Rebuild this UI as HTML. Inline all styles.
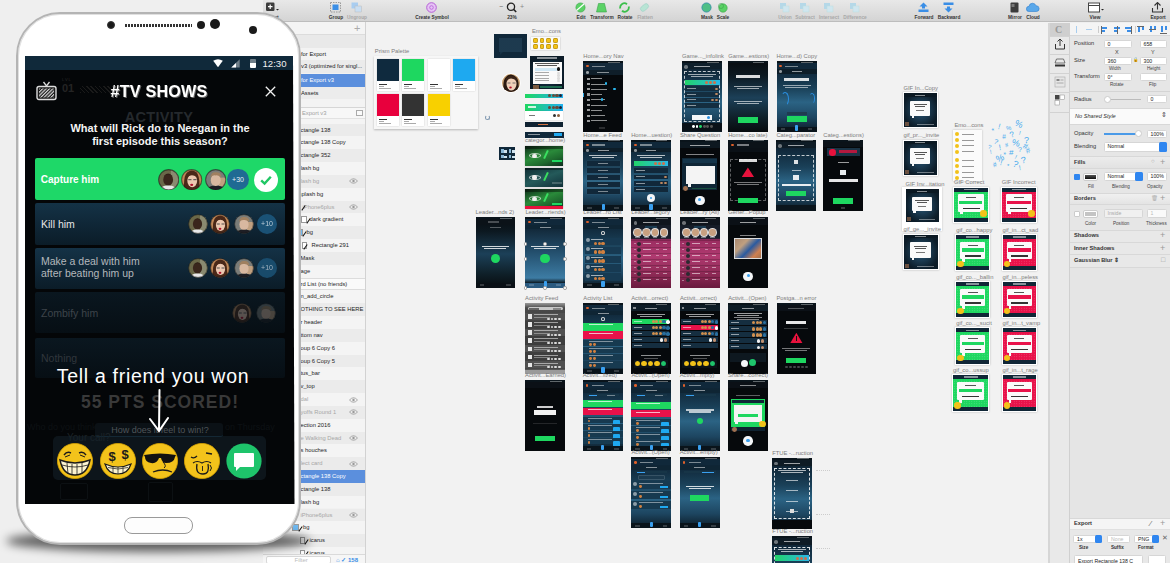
<!DOCTYPE html>
<html><head><meta charset="utf-8">
<style>
*{margin:0;padding:0;box-sizing:border-box}
html,body{width:1170px;height:563px;overflow:hidden}
body{position:relative;background:#efefef;font-family:"Liberation Sans",sans-serif;color:#222}
.a{position:absolute}
#tb{left:263px;top:0;width:907px;height:22px;background:linear-gradient(#e8e8e8,#d4d4d4);border-bottom:1px solid #bdbdbd}
.tl{position:absolute;top:14.5px;font-size:4.8px;line-height:6px;font-weight:bold;color:#333;transform:translateX(-50%);white-space:nowrap}
.tl.d{color:#a8a8a8}
#lay{left:263px;top:22px;width:103px;height:541px;background:#f1f1f1;border-right:1px solid #d2d2d2}
#cv{left:366px;top:22px;width:683px;height:541px;background:#f2f2f2}
#ins{left:1048px;top:23px;width:122px;height:540px;background:#e8e8e8;border-left:2px solid #d6d6d6}
.lb{position:absolute;font-size:5.8px;line-height:9px;color:#7c7c7c;white-space:nowrap}
</style></head><body>
<div id="tb" class="a"></div>
<svg class="a" style="left:265px;top:2px" width="17" height="11" viewBox="0 0 17 11"><rect x="1" y="0.5" width="8.5" height="8.5" rx="1.2" fill="#3d3d3d"/><path d="M5.2 2.5v4.5M3 4.7h4.5" stroke="#fff" stroke-width="1.2"/><path d="M11 7l1.5 1.5L14 7z" fill="#222"/></svg>
<div class="tl" style="left:272px">Insert</div>
<svg class="a" style="left:329px;top:2px" width="17" height="11" viewBox="0 0 17 11"><rect x="1.5" y="0.5" width="10" height="9.5" fill="none" stroke="#888" stroke-width=".8" stroke-dasharray="1.5 1"/><rect x="3.5" y="2.5" width="6" height="5.5" fill="#3a8ee6"/></svg>
<div class="tl" style="left:336px">Group</div>
<svg class="a" style="left:350px;top:2px" width="17" height="11" viewBox="0 0 17 11"><rect x="1.5" y="0.5" width="6.5" height="6" fill="#a9cdf0"/><rect x="5" y="4" width="6.5" height="6" fill="#c9def2" stroke="#bbb" stroke-width=".5"/></svg>
<div class="tl d" style="left:357px">Ungroup</div>
<svg class="a" style="left:425px;top:2px" width="17" height="11" viewBox="0 0 17 11"><circle cx="6.5" cy="5.5" r="4.8" fill="#e6c3f5" stroke="#b55fd6" stroke-width="1"/><circle cx="6.5" cy="5.5" r="1.8" fill="none" stroke="#b55fd6" stroke-width=".8"/></svg>
<div class="tl" style="left:432px">Create Symbol</div>
<svg class="a" style="left:505px;top:2px" width="17" height="11" viewBox="0 0 17 11"><circle cx="6" cy="4.8" r="3.6" fill="none" stroke="#222" stroke-width="1.3"/><path d="M8.6 7.4l2.6 2.6" stroke="#222" stroke-width="1.5"/></svg>
<div class="tl" style="left:512px">23%</div>
<svg class="a" style="left:574px;top:2px" width="17" height="11" viewBox="0 0 17 11"><circle cx="6.5" cy="5.5" r="4.6" fill="#5bd266" stroke="#3aa24a" stroke-width=".6"/><path d="M2.5 8.5 L10 2" stroke="#fff" stroke-width="1.1"/></svg>
<div class="tl" style="left:581px">Edit</div>
<svg class="a" style="left:595px;top:2px" width="17" height="11" viewBox="0 0 17 11"><path d="M3.5 1.5h6l2 8.5h-10z" fill="#5bd266" stroke="#3aa24a" stroke-width=".6"/></svg>
<div class="tl" style="left:602px">Transform</div>
<svg class="a" style="left:618px;top:2px" width="17" height="11" viewBox="0 0 17 11"><path d="M2.3 6.5 A4.2 4.2 0 0 1 9 2.2 M10.7 4.5 A4.2 4.2 0 0 1 4 8.8" stroke="#3cbf4c" stroke-width="1.8" fill="none"/></svg>
<div class="tl" style="left:625px">Rotate</div>
<svg class="a" style="left:638px;top:2px" width="17" height="11" viewBox="0 0 17 11"><rect x="2" y="3" width="9" height="5" rx="2.5" transform="rotate(-40 6.5 5.5)" fill="#b8e4d4" stroke="#9fd0c8" stroke-width=".6"/></svg>
<div class="tl d" style="left:645px">Flatten</div>
<svg class="a" style="left:700px;top:2px" width="17" height="11" viewBox="0 0 17 11"><circle cx="6.5" cy="5.5" r="4.6" fill="#4fbf86" stroke="#2f8aa6" stroke-width=".8"/></svg>
<div class="tl" style="left:707px">Mask</div>
<svg class="a" style="left:716px;top:2px" width="17" height="11" viewBox="0 0 17 11"><circle cx="7" cy="6" r="4.2" fill="#5bd266" stroke="#3aa24a" stroke-width=".6"/><circle cx="5" cy="4" r="2.5" fill="none" stroke="#3aa24a" stroke-width=".6"/></svg>
<div class="tl" style="left:723px">Scale</div>
<svg class="a" style="left:778px;top:2px" width="17" height="11" viewBox="0 0 17 11"><rect x="2" y="1" width="6" height="6" fill="#b5d8e8"/><rect x="5" y="4" width="6" height="6" fill="#d0e6ef" stroke="#bdd" stroke-width=".5"/></svg>
<div class="tl d" style="left:785px">Union</div>
<svg class="a" style="left:798px;top:2px" width="17" height="11" viewBox="0 0 17 11"><rect x="2" y="1" width="6" height="6" fill="#b5d8e8"/><rect x="5" y="4" width="6" height="6" fill="#d0e6ef" stroke="#bdd" stroke-width=".5"/></svg>
<div class="tl d" style="left:805px">Subtract</div>
<svg class="a" style="left:822px;top:2px" width="17" height="11" viewBox="0 0 17 11"><rect x="2" y="1" width="6" height="6" fill="#b5d8e8"/><rect x="5" y="4" width="6" height="6" fill="#d0e6ef" stroke="#bdd" stroke-width=".5"/></svg>
<div class="tl d" style="left:829px">Intersect</div>
<svg class="a" style="left:848px;top:2px" width="17" height="11" viewBox="0 0 17 11"><rect x="2" y="1" width="6" height="6" fill="#b5d8e8"/><rect x="5" y="4" width="6" height="6" fill="#d0e6ef" stroke="#bdd" stroke-width=".5"/></svg>
<div class="tl d" style="left:855px">Difference</div>
<svg class="a" style="left:917px;top:2px" width="17" height="11" viewBox="0 0 17 11"><path d="M6.5 0.5l4 4h-2.5v2h-3v-2h-2.5z" fill="#3a8ee6"/><rect x="1.5" y="7.5" width="10" height="2.5" fill="#3a8ee6"/></svg>
<div class="tl" style="left:924px">Forward</div>
<svg class="a" style="left:942px;top:2px" width="17" height="11" viewBox="0 0 17 11"><rect x="1.5" y="0.5" width="10" height="2.5" fill="#3a8ee6"/><path d="M6.5 10.5l4-4h-2.5v-2h-3v2h-2.5z" fill="#3a8ee6"/></svg>
<div class="tl" style="left:949px">Backward</div>
<svg class="a" style="left:1008px;top:2px" width="17" height="11" viewBox="0 0 17 11"><rect x="2.5" y="0.5" width="8" height="10" rx="1" fill="#3b3b3b"/><rect x="3.5" y="2" width="3" height="3" fill="#777"/></svg>
<div class="tl" style="left:1015px">Mirror</div>
<svg class="a" style="left:1026px;top:2px" width="17" height="11" viewBox="0 0 17 11"><path d="M3 9.5a2.6 2.6 0 0 1 0-5.2a3.6 3.6 0 0 1 7-0.5a2.6 2.6 0 0 1 0.5 5.7z" fill="#5aa8ea" stroke="#2f7fd0" stroke-width=".6"/></svg>
<div class="tl" style="left:1033px">Cloud</div>
<svg class="a" style="left:1088px;top:2px" width="17" height="11" viewBox="0 0 17 11"><rect x="0.5" y="1" width="11" height="9" fill="#fff" stroke="#444" stroke-width="1"/><path d="M.5 3.5h11" stroke="#444" stroke-width="1"/><path d="M13 7l1.5 1.5L16 7z" fill="#222"/></svg>
<div class="tl" style="left:1095px">View</div>
<svg class="a" style="left:1151px;top:2px" width="17" height="11" viewBox="0 0 17 11"><path d="M6.5 0.5v7M3.5 3.5l3-3 3 3M1.5 6v4h10V6" stroke="#333" stroke-width="1.1" fill="none"/></svg>
<div class="tl" style="left:1158px">Export</div>
<div class="a" style="left:499px;top:3px;font-size:7px;color:#666">−</div><div class="a" style="left:520px;top:3px;font-size:7px;color:#888">+</div>
<div id="lay" class="a">
<div class="a" style="left:0;top:0;width:102px;height:13.3px;background:#f4f4f4;border-bottom:1px solid #dcdcdc"></div>
<div class="a" style="left:91px;top:0px;font-size:11px;line-height:12px;color:#aaa">+</div>
<div class="a" style="left:0;top:13.3px;width:102px;height:12.5px;background:#e9e9e9;color:#222;font-size:5.8px;line-height:12.5px;padding-left:38px;white-space:nowrap"></div>
<div class="a" style="left:0;top:25.8px;width:102px;height:12.4px;background:#f3f3f3;color:#222;font-size:5.8px;line-height:12.4px;padding-left:38px;white-space:nowrap">for Export</div>
<div class="a" style="left:0;top:38.2px;width:102px;height:13.3px;background:#ebebeb;color:#222;font-size:5.8px;line-height:13.3px;padding-left:38px;white-space:nowrap">v3 (optimized for singl...</div>
<div class="a" style="left:0;top:51.5px;width:102px;height:13px;background:#5b8fdd;color:#fff;font-size:5.8px;line-height:13px;padding-left:38px;white-space:nowrap">for Export v3</div>
<div class="a" style="left:0;top:64.5px;width:102px;height:12.8px;background:#ececec;color:#222;font-size:5.8px;line-height:12.8px;padding-left:38px;white-space:nowrap">Assets</div>
<div class="a" style="left:0;top:77.3px;width:102px;height:8px;background:#f3f3f3;color:#222;font-size:5.8px;line-height:8px;padding-left:38px;white-space:nowrap"></div>
<div class="a" style="left:0;top:85.3px;width:102px;height:12px;background:#f7f7f7;border-top:1px solid #d6d6d6;border-bottom:1px solid #e2e2e2;color:#a0a0a0;font-size:5.8px;line-height:11px;padding-left:39px">Export v3</div>
<div class="a" style="left:93px;top:88px;width:7px;height:6px;border:1px solid #aaa;background:#fafafa"></div>
<div class="a" style="left:0;top:97.3px;width:102px;height:4.3px;background:#f4f4f4"></div>
<div class="a" style="left:0;top:101.60px;width:102px;height:12.83px;background:#ebebeb;color:#1e1e1e;font-size:5.8px;line-height:12.83px;padding-left:37.5px;white-space:nowrap;overflow:hidden">ctangle 138</div>
<div class="a" style="left:0;top:114.43px;width:102px;height:12.83px;background:#f4f4f4;color:#1e1e1e;font-size:5.8px;line-height:12.83px;padding-left:37.5px;white-space:nowrap;overflow:hidden">ctangle 138 Copy</div>
<div class="a" style="left:0;top:127.26px;width:102px;height:12.83px;background:#ebebeb;color:#1e1e1e;font-size:5.8px;line-height:12.83px;padding-left:37.5px;white-space:nowrap;overflow:hidden">ctangle 352</div>
<div class="a" style="left:0;top:140.09px;width:102px;height:12.83px;background:#f4f4f4;color:#1e1e1e;font-size:5.8px;line-height:12.83px;padding-left:37.5px;white-space:nowrap;overflow:hidden">lash bg</div>
<div class="a" style="left:0;top:152.92px;width:102px;height:12.83px;background:#ebebeb;color:#a6a6a6;font-size:5.8px;line-height:12.83px;padding-left:37.5px;white-space:nowrap;overflow:hidden">lash bg</div>
<svg class="a" style="left:86px;top:156.42px" width="9" height="6" viewBox="0 0 9 6"><path d="M.5 3Q4.5-1.5 8.5 3Q4.5 7.5.5 3Z" fill="none" stroke="#999" stroke-width=".8"/><circle cx="4.5" cy="3" r="1.2" fill="#999"/></svg>
<div class="a" style="left:0;top:165.75px;width:102px;height:12.83px;background:#f4f4f4;color:#1e1e1e;font-size:5.8px;line-height:12.83px;padding-left:35.5px;white-space:nowrap;overflow:hidden">splash bg</div>
<div class="a" style="left:0;top:178.58px;width:102px;height:12.83px;background:#ebebeb;color:#a6a6a6;font-size:5.8px;line-height:12.83px;padding-left:39.5px;white-space:nowrap;overflow:hidden">iPhone6plus</div>
<svg class="a" style="left:86px;top:182.08px" width="9" height="6" viewBox="0 0 9 6"><path d="M.5 3Q4.5-1.5 8.5 3Q4.5 7.5.5 3Z" fill="none" stroke="#999" stroke-width=".8"/><circle cx="4.5" cy="3" r="1.2" fill="#999"/></svg>
<div class="a" style="left:40px;top:183.08px;width:1.2px;height:6px;background:#111;transform:rotate(35deg)"></div>
<div class="a" style="left:0;top:191.41px;width:102px;height:12.83px;background:#f4f4f4;color:#1e1e1e;font-size:5.8px;line-height:12.83px;padding-left:46.5px;white-space:nowrap;overflow:hidden">dark gradient</div>
<div class="a" style="left:38px;top:194.41px;width:6px;height:7px;border:.8px solid #999;background:#fff"></div>
<div class="a" style="left:45px;top:195.91px;width:1.2px;height:6px;background:#111;transform:rotate(35deg)"></div>
<div class="a" style="left:0;top:204.24px;width:102px;height:12.83px;background:#ebebeb;color:#1e1e1e;font-size:5.8px;line-height:12.83px;padding-left:43.5px;white-space:nowrap;overflow:hidden">bg</div>
<div class="a" style="left:33px;top:207.24px;width:7px;height:7px;border:.8px solid #999;background:#6fb8ef"></div>
<div class="a" style="left:41px;top:208.74px;width:1.2px;height:6px;background:#111;transform:rotate(35deg)"></div>
<div class="a" style="left:0;top:217.07px;width:102px;height:12.83px;background:#f4f4f4;color:#1e1e1e;font-size:5.8px;line-height:12.83px;padding-left:48.5px;white-space:nowrap;overflow:hidden">Rectangle 291</div>
<div class="a" style="left:39px;top:220.07px;width:5px;height:7px;border:.8px solid #999;background:#fff"></div>
<div class="a" style="left:42px;top:221.57px;width:1.2px;height:6px;background:#111;transform:rotate(35deg)"></div>
<div class="a" style="left:0;top:229.90px;width:102px;height:12.83px;background:#ebebeb;color:#1e1e1e;font-size:5.8px;line-height:12.83px;padding-left:37.5px;white-space:nowrap;overflow:hidden">Mask</div>
<div class="a" style="left:0;top:242.73px;width:102px;height:12.83px;background:#f4f4f4;color:#1e1e1e;font-size:5.8px;line-height:12.83px;padding-left:37.5px;white-space:nowrap;overflow:hidden">age</div>
<div class="a" style="left:0;top:255.56px;width:102px;height:12.83px;background:#fafafa;box-shadow:inset 0 1px 0 #dcdcdc,inset 0 -1px 0 #dcdcdc;color:#1e1e1e;font-size:5.8px;line-height:12.83px;padding-left:37.5px;white-space:nowrap;overflow:hidden">rd List (no friends)</div>
<div class="a" style="left:0;top:268.39px;width:102px;height:12.83px;background:#f4f4f4;color:#1e1e1e;font-size:5.8px;line-height:12.83px;padding-left:37.5px;white-space:nowrap;overflow:hidden">n_add_circle</div>
<div class="a" style="left:0;top:281.22px;width:102px;height:12.83px;background:#ebebeb;color:#1e1e1e;font-size:5.8px;line-height:12.83px;padding-left:37.5px;white-space:nowrap;overflow:hidden">OTHING TO SEE HERE</div>
<div class="a" style="left:0;top:294.05px;width:102px;height:12.83px;background:#f4f4f4;color:#1e1e1e;font-size:5.8px;line-height:12.83px;padding-left:37.5px;white-space:nowrap;overflow:hidden">r header</div>
<div class="a" style="left:0;top:306.88px;width:102px;height:12.83px;background:#ebebeb;color:#1e1e1e;font-size:5.8px;line-height:12.83px;padding-left:37.5px;white-space:nowrap;overflow:hidden">ttom nav</div>
<div class="a" style="left:0;top:319.71px;width:102px;height:12.83px;background:#f4f4f4;color:#1e1e1e;font-size:5.8px;line-height:12.83px;padding-left:37.5px;white-space:nowrap;overflow:hidden">oup 6 Copy 6</div>
<div class="a" style="left:0;top:332.54px;width:102px;height:12.83px;background:#ebebeb;color:#1e1e1e;font-size:5.8px;line-height:12.83px;padding-left:37.5px;white-space:nowrap;overflow:hidden">oup 6 Copy 5</div>
<div class="a" style="left:0;top:345.37px;width:102px;height:12.83px;background:#f4f4f4;color:#1e1e1e;font-size:5.8px;line-height:12.83px;padding-left:37.5px;white-space:nowrap;overflow:hidden">tus_bar</div>
<div class="a" style="left:0;top:358.20px;width:102px;height:12.83px;background:#ebebeb;color:#1e1e1e;font-size:5.8px;line-height:12.83px;padding-left:37.5px;white-space:nowrap;overflow:hidden">v_top</div>
<div class="a" style="left:0;top:371.03px;width:102px;height:12.83px;background:#f4f4f4;color:#a6a6a6;font-size:5.8px;line-height:12.83px;padding-left:37.5px;white-space:nowrap;overflow:hidden">dal</div>
<svg class="a" style="left:86px;top:374.53px" width="9" height="6" viewBox="0 0 9 6"><path d="M.5 3Q4.5-1.5 8.5 3Q4.5 7.5.5 3Z" fill="none" stroke="#999" stroke-width=".8"/><circle cx="4.5" cy="3" r="1.2" fill="#999"/></svg>
<div class="a" style="left:0;top:383.86px;width:102px;height:12.83px;background:#ebebeb;color:#a6a6a6;font-size:5.8px;line-height:12.83px;padding-left:37.5px;white-space:nowrap;overflow:hidden">yoffs Round 1</div>
<svg class="a" style="left:86px;top:387.36px" width="9" height="6" viewBox="0 0 9 6"><path d="M.5 3Q4.5-1.5 8.5 3Q4.5 7.5.5 3Z" fill="none" stroke="#999" stroke-width=".8"/><circle cx="4.5" cy="3" r="1.2" fill="#999"/></svg>
<div class="a" style="left:0;top:396.69px;width:102px;height:12.83px;background:#f4f4f4;color:#1e1e1e;font-size:5.8px;line-height:12.83px;padding-left:37.5px;white-space:nowrap;overflow:hidden">ection 2016</div>
<div class="a" style="left:0;top:409.52px;width:102px;height:12.83px;background:#ebebeb;color:#a6a6a6;font-size:5.8px;line-height:12.83px;padding-left:37.5px;white-space:nowrap;overflow:hidden">e Walking Dead</div>
<svg class="a" style="left:86px;top:413.02px" width="9" height="6" viewBox="0 0 9 6"><path d="M.5 3Q4.5-1.5 8.5 3Q4.5 7.5.5 3Z" fill="none" stroke="#999" stroke-width=".8"/><circle cx="4.5" cy="3" r="1.2" fill="#999"/></svg>
<div class="a" style="left:0;top:422.35px;width:102px;height:12.83px;background:#f4f4f4;color:#1e1e1e;font-size:5.8px;line-height:12.83px;padding-left:37.5px;white-space:nowrap;overflow:hidden">s houches</div>
<div class="a" style="left:0;top:435.18px;width:102px;height:12.83px;background:#ebebeb;color:#a6a6a6;font-size:5.8px;line-height:12.83px;padding-left:37.5px;white-space:nowrap;overflow:hidden">lect card</div>
<svg class="a" style="left:86px;top:438.68px" width="9" height="6" viewBox="0 0 9 6"><path d="M.5 3Q4.5-1.5 8.5 3Q4.5 7.5.5 3Z" fill="none" stroke="#999" stroke-width=".8"/><circle cx="4.5" cy="3" r="1.2" fill="#999"/></svg>
<div class="a" style="left:0;top:448.01px;width:102px;height:12.83px;background:#5b8fdd;color:#fff;font-size:5.8px;line-height:12.83px;padding-left:37.5px;white-space:nowrap;overflow:hidden">ctangle 138 Copy</div>
<div class="a" style="left:0;top:460.84px;width:102px;height:12.83px;background:#ebebeb;color:#1e1e1e;font-size:5.8px;line-height:12.83px;padding-left:37.5px;white-space:nowrap;overflow:hidden">ctangle 138</div>
<div class="a" style="left:0;top:473.67px;width:102px;height:12.83px;background:#f4f4f4;color:#1e1e1e;font-size:5.8px;line-height:12.83px;padding-left:37.5px;white-space:nowrap;overflow:hidden">lash bg</div>
<div class="a" style="left:0;top:486.50px;width:102px;height:12.83px;background:#ebebeb;color:#a6a6a6;font-size:5.8px;line-height:12.83px;padding-left:37.5px;white-space:nowrap;overflow:hidden">iPhone6plus</div>
<svg class="a" style="left:86px;top:490.00px" width="9" height="6" viewBox="0 0 9 6"><path d="M.5 3Q4.5-1.5 8.5 3Q4.5 7.5.5 3Z" fill="none" stroke="#999" stroke-width=".8"/><circle cx="4.5" cy="3" r="1.2" fill="#999"/></svg>
<div class="a" style="left:0;top:499.33px;width:102px;height:12.83px;background:#f4f4f4;color:#1e1e1e;font-size:5.8px;line-height:12.83px;padding-left:40.0px;white-space:nowrap;overflow:hidden">bg</div>
<div class="a" style="left:29px;top:502.33px;width:7px;height:7px;border:.8px solid #999;background:#6fb8ef"></div>
<div class="a" style="left:37px;top:503.83px;width:1.2px;height:6px;background:#111;transform:rotate(35deg)"></div>
<div class="a" style="left:0;top:512.16px;width:102px;height:12.83px;background:#ebebeb;color:#1e1e1e;font-size:5.8px;line-height:12.83px;padding-left:46.5px;white-space:nowrap;overflow:hidden">icarus</div>
<div class="a" style="left:37px;top:515.16px;width:5px;height:7px;border:.8px solid #999;background:#fff"></div>
<div class="a" style="left:43px;top:516.66px;width:1.2px;height:6px;background:#111;transform:rotate(35deg)"></div>
<div class="a" style="left:0;top:524.99px;width:102px;height:12.83px;background:#f4f4f4;color:#1e1e1e;font-size:5.8px;line-height:12.83px;padding-left:46.5px;white-space:nowrap;overflow:hidden">icarus</div>
<div class="a" style="left:37px;top:527.99px;width:5px;height:7px;border:.8px solid #999;background:#fff"></div>
<div class="a" style="left:43px;top:529.49px;width:1.2px;height:6px;background:#111;transform:rotate(35deg)"></div>
<div class="a" style="left:0;top:532px;width:102px;height:9px;background:#f6f6f6;border-top:1px solid #dadada"></div>
<div class="a" style="left:2.5px;top:534px;width:65px;height:8px;background:#fff;border:1px solid #d8d8d8;border-radius:2px;font-size:6px;line-height:7px;color:#bbb;padding-left:28px">Filter</div>
<div class="a" style="left:73px;top:534px;font-size:6px;color:#3a8ee6;font-weight:bold">⌂ ✓ 158</div>
</div>
<div id="cv" class="a"></div>
<div id="ins" class="a">
<div class="a" style="left:0;top:0;width:20px;height:540px;background:#e9e9e9;border-right:1px solid #d0d0d0"></div>
<div class="a" style="left:0;top:0;width:20px;height:12.5px;background:#cfcfcf"></div>
<div class="a" style="left:5px;top:1px;font-size:10px;font-weight:bold;color:#9a9a9a;font-family:Liberation Serif">C</div>
<div class="a" style="left:0;top:12.5px;width:20px;height:1px;background:#d2d2d2"></div>
<div class="a" style="left:0;top:31px;width:20px;height:1px;background:#d2d2d2"></div>
<div class="a" style="left:0;top:49.5px;width:20px;height:1px;background:#d2d2d2"></div>
<div class="a" style="left:0;top:69px;width:20px;height:1px;background:#d2d2d2"></div>
<div class="a" style="left:0;top:88.5px;width:20px;height:1px;background:#d2d2d2"></div>
<svg class="a" style="left:4px;top:15px" width="12" height="12" viewBox="0 0 12 12"><path d="M6 1v7M3.5 3.5L6 1l2.5 2.5M1.5 6v5h9V6" stroke="#333" stroke-width="1" fill="none"/></svg>
<svg class="a" style="left:4px;top:34px" width="12" height="12" viewBox="0 0 12 12"><path d="M2.5 2h7l1.5 4H1z" fill="none" stroke="#555" stroke-width=".8"/><rect x="1" y="7.5" width="10" height="2" fill="#333"/></svg>
<svg class="a" style="left:4px;top:53px" width="12" height="12" viewBox="0 0 12 12"><rect x="1" y="1" width="10" height="10" fill="#e6e6e6" stroke="#aaa" stroke-width=".6"/><rect x="2.5" y="3" width="3" height="2" fill="#888"/><path d="M2.5 7h7M6.5 4h3" stroke="#999" stroke-width=".8"/></svg>
<svg class="a" style="left:4px;top:71px" width="12" height="14" viewBox="0 0 12 14"><rect x="1" y="1" width="4.5" height="4.5" fill="#444"/><rect x="6" y="1" width="4.5" height="4.5" fill="#fff" stroke="#888" stroke-width=".5"/><rect x="1" y="6.5" width="4.5" height="4.5" fill="#fff" stroke="#888" stroke-width=".5"/></svg>
<div class="a" style="left:20px;top:0;width:101px;height:12.5px;background:#f4f4f4;border-bottom:1px solid #d8d8d8"></div>
<div class="a" style="left:26.0px;top:3px;width:1.2px;height:7px;background:#a8cdee"></div>
<div class="a" style="left:35.59999999999991px;top:6px;width:6px;height:1.2px;background:#a8cdee"></div>
<div class="a" style="left:51px;top:3.5px;width:6px;height:2px;background:#3b8de6"></div><div class="a" style="left:51px;top:7px;width:4px;height:2px;background:#3b8de6"></div><div class="a" style="left:50.5px;top:2.5px;width:.8px;height:8px;background:#666"></div>
<div class="a" style="left:64px;top:3.5px;width:6px;height:2px;background:#3b8de6"></div><div class="a" style="left:64px;top:7px;width:4px;height:2px;background:#3b8de6"></div><div class="a" style="left:66.5px;top:2.5px;width:.8px;height:8px;background:#666"></div>
<div class="a" style="left:75.40000000000009px;top:3.5px;width:6px;height:2px;background:#3b8de6"></div><div class="a" style="left:77.40000000000009px;top:7px;width:4px;height:2px;background:#3b8de6"></div><div class="a" style="left:81.40000000000009px;top:2.5px;width:.8px;height:8px;background:#666"></div>
<div class="a" style="left:87.5px;top:3px;width:2px;height:6px;background:#3b8de6"></div><div class="a" style="left:91.5px;top:3px;width:2px;height:4px;background:#3b8de6"></div><div class="a" style="left:87.0px;top:2.5px;width:7px;height:.8px;background:#666"></div>
<div class="a" style="left:99.5px;top:3px;width:2px;height:6px;background:#3b8de6"></div><div class="a" style="left:103.5px;top:3px;width:2px;height:4px;background:#3b8de6"></div><div class="a" style="left:99.0px;top:6px;width:7px;height:.8px;background:#666"></div>
<div class="a" style="left:110.59999999999991px;top:3px;width:2px;height:6px;background:#3b8de6"></div><div class="a" style="left:114.59999999999991px;top:3px;width:2px;height:4px;background:#3b8de6"></div><div class="a" style="left:110.09999999999991px;top:9.5px;width:7px;height:.8px;background:#666"></div>
<div class="a" style="left:48px;top:3px;width:.8px;height:7px;background:#ccc"></div><div class="a" style="left:85px;top:3px;width:.8px;height:7px;background:#ccc"></div>
<div class="a" style="left:20px;top:12.5px;width:101px;height:55px;background:#e6e6e6"></div>
<div class="a" style="left:24px;top:17px;font-size:5.7px;line-height:6.7px;color:#333;white-space:nowrap;">Position</div>
<div class="a" style="left:53.5px;top:17px;width:28px;height:8px;background:#fff;border:1px solid #d6d6d6;border-radius:1.5px;font-size:5.2px;line-height:6px;padding-left:3px;color:#222;white-space:nowrap;overflow:hidden">0</div>
<div class="a" style="left:89.5px;top:17px;width:27px;height:8px;background:#fff;border:1px solid #d6d6d6;border-radius:1.5px;font-size:5.2px;line-height:6px;padding-left:3px;color:#222;white-space:nowrap;overflow:hidden">658</div>
<div class="a" style="left:65px;top:26px;font-size:5.5px;line-height:6.5px;color:#444;white-space:nowrap;">X</div>
<div class="a" style="left:101px;top:26px;font-size:5.5px;line-height:6.5px;color:#444;white-space:nowrap;">Y</div>
<div class="a" style="left:24px;top:34px;font-size:5.7px;line-height:6.7px;color:#333;white-space:nowrap;">Size</div>
<div class="a" style="left:53.5px;top:33.5px;width:28px;height:8px;background:#fff;border:1px solid #d6d6d6;border-radius:1.5px;font-size:5.2px;line-height:6px;padding-left:3px;color:#222;white-space:nowrap;overflow:hidden">360</div>
<div class="a" style="left:89.5px;top:33.5px;width:27px;height:8px;background:#fff;border:1px solid #d6d6d6;border-radius:1.5px;font-size:5.2px;line-height:6px;padding-left:3px;color:#222;white-space:nowrap;overflow:hidden">300</div>
<div class="a" style="left:83px;top:34px;font-size:4.5px;line-height:5.5px;color:#333;white-space:nowrap;">🔒</div>
<div class="a" style="left:59px;top:42.5px;font-size:4.6px;line-height:5.6px;color:#444;white-space:nowrap;">Width</div>
<div class="a" style="left:97px;top:42.5px;font-size:4.6px;line-height:5.6px;color:#444;white-space:nowrap;">Height</div>
<div class="a" style="left:24px;top:50px;font-size:5.7px;line-height:6.7px;color:#333;white-space:nowrap;">Transform</div>
<div class="a" style="left:53.5px;top:49.5px;width:28px;height:8px;background:#fff;border:1px solid #d6d6d6;border-radius:1.5px;font-size:5.2px;line-height:6px;padding-left:3px;color:#222;white-space:nowrap;overflow:hidden">0°</div>
<div class="a" style="left:89.5px;top:49.5px;width:27px;height:8px;background:#fff;border:1px solid #d6d6d6;border-radius:1.5px;font-size:5.2px;line-height:6px;padding-left:3px;color:#222;white-space:nowrap;overflow:hidden"></div>
<div class="a" style="left:60px;top:58.5px;font-size:4.6px;line-height:5.6px;color:#444;white-space:nowrap;">Rotate</div>
<div class="a" style="left:99px;top:59px;font-size:4.6px;line-height:5.6px;color:#444;white-space:nowrap;">Flip</div>
<div class="a" style="left:20px;top:67.5px;width:101px;height:17px;background:#e6e6e6;border-top:1px solid #d4d4d4"></div>
<div class="a" style="left:24px;top:72.5px;font-size:5.7px;line-height:6.7px;color:#333;white-space:nowrap;">Radius</div>
<div class="a" style="left:56px;top:76px;width:35px;height:1.2px;background:#bbb"></div><div class="a" style="left:53.5px;top:73px;width:7px;height:7px;border-radius:50%;background:#fff;border:1px solid #ccc"></div>
<div class="a" style="left:96.5px;top:72px;width:20px;height:8px;background:#fff;border:1px solid #d6d6d6;border-radius:1.5px;font-size:5.2px;line-height:6px;padding-left:3px;color:#222;white-space:nowrap;overflow:hidden">0</div>
<div class="a" style="left:20px;top:84.5px;width:101px;height:17.5px;background:#fafafa;border-top:1px solid #d8d8d8;border-bottom:1px solid #d8d8d8"></div>
<div class="a" style="left:25px;top:89.5px;font-size:5.6px;line-height:6.6px;color:#333;white-space:nowrap;font-style:italic">No Shared Style</div>
<div class="a" style="left:111px;top:88px;font-size:7px;line-height:8px;color:#444;white-space:nowrap;">⇕</div>
<div class="a" style="left:20px;top:102px;width:101px;height:31px;background:#e6e6e6"></div>
<div class="a" style="left:24px;top:107px;font-size:5.7px;line-height:6.7px;color:#333;white-space:nowrap;">Opacity</div>
<div class="a" style="left:54px;top:110px;width:34px;height:1.5px;background:#4a9ae8"></div><div class="a" style="left:85px;top:107px;width:7px;height:7px;border-radius:50%;background:#fff;border:1px solid #ccc"></div>
<div class="a" style="left:96.5px;top:106.5px;width:20px;height:8px;background:#fff;border:1px solid #d6d6d6;border-radius:1.5px;font-size:5.2px;line-height:6px;padding-left:3px;color:#222;white-space:nowrap;overflow:hidden">100%</div>
<div class="a" style="left:24px;top:120px;font-size:5.7px;line-height:6.7px;color:#333;white-space:nowrap;">Blending</div>
<div class="a" style="left:53.5px;top:119px;width:63px;height:9.5px;background:#fff;border:1px solid #d6d6d6;border-radius:1.5px;font-size:5.2px;line-height:7.5px;padding-left:3px;color:#222;white-space:nowrap;overflow:hidden">Normal</div>
<div class="a" style="left:108.5px;top:119px;width:8px;height:9.5px;background:#2f86f0;border-radius:1.5px"></div>
<div class="a" style="left:20px;top:133px;width:101px;height:12.5px;background:linear-gradient(#ececec,#e2e2e2);border-top:1px solid #d8d8d8;border-bottom:1px solid #d8d8d8"></div>
<div class="a" style="left:24px;top:135.5px;font-size:5.7px;line-height:6.7px;color:#333;white-space:nowrap;font-weight:bold;">Fills</div>
<div class="a" style="left:101px;top:134.5px;font-size:6px;line-height:7px;color:#999;white-space:nowrap;">○</div>
<div class="a" style="left:110px;top:133.5px;font-size:9px;line-height:10px;color:#999;white-space:nowrap;">+</div>
<div class="a" style="left:20px;top:145.5px;width:101px;height:24px;background:#e6e6e6"></div>
<div class="a" style="left:24px;top:150.5px;width:6px;height:6px;background:#2f86f0;border-radius:1px"></div>
<div class="a" style="left:33px;top:149.5px;width:15px;height:8.5px;background:#fff;border:1px solid #ccc;border-radius:2px"></div><div class="a" style="left:35px;top:151.5px;width:11px;height:4.5px;background:linear-gradient(#555,#111)"></div>
<div class="a" style="left:53.5px;top:149px;width:39px;height:9px;background:#fff;border:1px solid #d6d6d6;border-radius:1.5px;font-size:5.2px;line-height:7px;padding-left:3px;color:#222;white-space:nowrap;overflow:hidden">Normal</div>
<div class="a" style="left:85px;top:149px;width:7.5px;height:9px;background:#2f86f0;border-radius:1.5px"></div>
<div class="a" style="left:96.5px;top:149px;width:20px;height:9px;background:#fff;border:1px solid #d6d6d6;border-radius:1.5px;font-size:5.2px;line-height:7px;padding-left:3px;color:#222;white-space:nowrap;overflow:hidden">100%</div>
<div class="a" style="left:38px;top:160.5px;font-size:4.6px;line-height:5.6px;color:#444;white-space:nowrap;">Fill</div>
<div class="a" style="left:62px;top:160.5px;font-size:4.6px;line-height:5.6px;color:#444;white-space:nowrap;">Blending</div>
<div class="a" style="left:97px;top:160.5px;font-size:4.6px;line-height:5.6px;color:#444;white-space:nowrap;">Opacity</div>
<div class="a" style="left:20px;top:170px;width:101px;height:12px;background:linear-gradient(#f0f0f0,#e4e4e4);border-top:1px solid #d8d8d8;border-bottom:1px solid #d8d8d8"></div>
<div class="a" style="left:24px;top:172px;font-size:5.7px;line-height:6.7px;color:#333;white-space:nowrap;font-weight:bold;">Borders</div>
<div class="a" style="left:101px;top:171.5px;font-size:5.5px;line-height:6.5px;color:#aaa;white-space:nowrap;">🗑</div>
<div class="a" style="left:110px;top:170px;font-size:9px;line-height:10px;color:#999;white-space:nowrap;">+</div>
<div class="a" style="left:20px;top:182px;width:101px;height:24.5px;background:#e6e6e6"></div>
<div class="a" style="left:24px;top:187.5px;width:6px;height:6px;background:#fff;border:1px solid #ccc;border-radius:1px"></div>
<div class="a" style="left:33px;top:186.5px;width:15px;height:8.5px;background:#fff;border:1px solid #ccc;border-radius:2px"></div><div class="a" style="left:35px;top:188.5px;width:11px;height:4.5px;background:#c4c4c4"></div>
<div class="a" style="left:53.5px;top:186px;width:39px;height:9px;background:#f0f0f0;border:1px solid #d6d6d6;border-radius:1.5px;font-size:5.2px;line-height:7px;padding-left:3px;color:#aaa;white-space:nowrap;overflow:hidden">Inside</div>
<div class="a" style="left:96.5px;top:186px;width:20px;height:9px;background:#fafafa;border:1px solid #d6d6d6;border-radius:1.5px;font-size:5.2px;line-height:7px;padding-left:3px;color:#bbb;white-space:nowrap;overflow:hidden">1</div>
<div class="a" style="left:35px;top:197.5px;font-size:4.6px;line-height:5.6px;color:#444;white-space:nowrap;">Color</div>
<div class="a" style="left:63px;top:197.5px;font-size:4.6px;line-height:5.6px;color:#444;white-space:nowrap;">Position</div>
<div class="a" style="left:96px;top:197.5px;font-size:4.6px;line-height:5.6px;color:#444;white-space:nowrap;">Thickness</div>
<div class="a" style="left:20px;top:206.5px;width:101px;height:12.3px;background:#e8e8e8;border-top:1px solid #d8d8d8"></div>
<div class="a" style="left:24px;top:209.0px;font-size:5.7px;line-height:6.7px;color:#333;white-space:nowrap;font-weight:bold;">Shadows</div>
<div class="a" style="left:110px;top:207.0px;font-size:9px;line-height:10px;color:#999;white-space:nowrap;">+</div>
<div class="a" style="left:20px;top:219px;width:101px;height:12.3px;background:#e8e8e8;border-top:1px solid #d8d8d8"></div>
<div class="a" style="left:24px;top:221.5px;font-size:5.7px;line-height:6.7px;color:#333;white-space:nowrap;font-weight:bold;">Inner Shadows</div>
<div class="a" style="left:110px;top:219.5px;font-size:9px;line-height:10px;color:#999;white-space:nowrap;">+</div>
<div class="a" style="left:20px;top:231px;width:101px;height:12.3px;background:#e8e8e8;border-top:1px solid #d8d8d8"></div>
<div class="a" style="left:24px;top:233.5px;font-size:5.7px;line-height:6.7px;color:#333;white-space:nowrap;font-weight:bold;">Gaussian Blur ⇕</div>
<div class="a" style="left:111px;top:233px;font-size:7px;line-height:8px;color:#999;white-space:nowrap;">□</div>
<div class="a" style="left:20px;top:243.5px;width:101px;height:251px;background:#e5e5e5;border-top:1px solid #d8d8d8"></div>
<div class="a" style="left:20px;top:494.5px;width:101px;height:12px;background:#f5f5f5;border-top:1px solid #d8d8d8;border-bottom:1px solid #e0e0e0"></div>
<div class="a" style="left:24px;top:497px;font-size:5.7px;line-height:6.7px;color:#333;white-space:nowrap;font-weight:bold;">Export</div>
<div class="a" style="left:100px;top:496px;font-size:8px;line-height:9px;color:#666;white-space:nowrap;">⁄</div>
<div class="a" style="left:110px;top:494.5px;font-size:9px;line-height:10px;color:#999;white-space:nowrap;">+</div>
<div class="a" style="left:20px;top:506.5px;width:101px;height:40px;background:#e8e8e8"></div>
<div class="a" style="left:23px;top:511.5px;width:29px;height:8px;background:#fff;border:1px solid #d6d6d6;border-radius:1.5px;font-size:5.2px;line-height:6px;padding-left:3px;color:#222;white-space:nowrap;overflow:hidden">1x</div>
<div class="a" style="left:45px;top:511.5px;width:7px;height:8px;background:#2f86f0;border-radius:1.5px"></div>
<div class="a" style="left:57px;top:511.5px;width:22.5px;height:8px;background:#fff;border:1px solid #d6d6d6;border-radius:1.5px;font-size:5.2px;line-height:6px;padding-left:3px;color:#bbb;white-space:nowrap;overflow:hidden">None</div>
<div class="a" style="left:84px;top:511.5px;width:24px;height:8px;background:#fff;border:1px solid #d6d6d6;border-radius:1.5px;font-size:5.2px;line-height:6px;padding-left:3px;color:#222;white-space:nowrap;overflow:hidden">PNG</div>
<div class="a" style="left:102px;top:511.5px;width:6.5px;height:8px;background:#2f86f0;border-radius:1.5px"></div>
<div class="a" style="left:112px;top:511px;font-size:6.5px;line-height:7.5px;color:#666;white-space:nowrap;">✕</div>
<div class="a" style="left:29px;top:522px;font-size:4.6px;line-height:5.6px;color:#333;white-space:nowrap;font-weight:bold;">Size</div>
<div class="a" style="left:61px;top:522px;font-size:4.6px;line-height:5.6px;color:#333;white-space:nowrap;font-weight:bold;">Suffix</div>
<div class="a" style="left:88px;top:522px;font-size:4.6px;line-height:5.6px;color:#333;white-space:nowrap;font-weight:bold;">Format</div>
<div class="a" style="left:24px;top:532px;width:69px;height:12px;background:#fff;border:1px solid #d6d6d6;border-radius:1.5px;font-size:5.2px;line-height:10px;padding-left:3px;color:#222;white-space:nowrap;overflow:hidden">Export Rectangle 138 C</div>
<div class="a" style="left:98px;top:532px;width:18px;height:12px;background:#fff;border:1px solid #d6d6d6;border-radius:1.5px;font-size:5.2px;line-height:10px;padding-left:3px;color:#222;white-space:nowrap;overflow:hidden"></div>
</div>
<div class="lb" style="left:583.3px;top:52.0px">Home...ory Nav</div>
<div class="a" style="left:583.3px;top:61.0px;width:39.5px;height:71.0px;background:#06090c;overflow:hidden"></div>
<div class="a" style="left:583.3px;top:61.0px;width:39.5px;height:2.1px;background:#0a141b;"></div>
<div class="a" style="left:607.8px;top:61.6px;width:11.8px;height:1.0px;background:rgba(255,255,255,.35);"></div>
<div class="a" style="left:583.3px;top:63.1px;width:39.5px;height:7.1px;background:#14293a;"></div>
<div class="a" style="left:586.1px;top:64.9px;width:2.8px;height:2.5px;background:#e0602a;border-radius:50%"></div>
<div class="a" style="left:592.0px;top:65.6px;width:12.6px;height:1.3px;background:rgba(255,255,255,.45);"></div>
<div class="a" style="left:583.3px;top:70.2px;width:39.5px;height:5.0px;background:#0f1e29;"></div>
<div class="a" style="left:585.7px;top:70.9px;width:3.6px;height:3.2px;background:rgba(255,255,255,.6);border-radius:50%"></div>
<div class="a" style="left:597.1px;top:72.0px;width:11.8px;height:1.1px;background:rgba(255,255,255,.5);"></div>
<div class="a" style="left:587.2px;top:77.7px;width:2.4px;height:2.3px;background:rgba(255,255,255,.6);"></div>
<div class="a" style="left:587.2px;top:82.9px;width:2.4px;height:2.3px;background:rgba(255,255,255,.6);"></div>
<div class="a" style="left:587.2px;top:88.2px;width:2.4px;height:2.3px;background:rgba(255,255,255,.6);"></div>
<div class="a" style="left:587.2px;top:93.4px;width:2.4px;height:2.3px;background:rgba(255,255,255,.6);"></div>
<div class="a" style="left:587.2px;top:98.7px;width:2.4px;height:2.3px;background:rgba(255,255,255,.6);"></div>
<div class="a" style="left:587.2px;top:104.0px;width:2.4px;height:2.3px;background:rgba(255,255,255,.6);"></div>
<div class="a" style="left:587.2px;top:109.2px;width:2.4px;height:2.3px;background:rgba(255,255,255,.6);"></div>
<div class="a" style="left:587.2px;top:114.5px;width:2.4px;height:2.3px;background:rgba(255,255,255,.6);"></div>
<div class="a" style="left:587.2px;top:119.7px;width:2.4px;height:2.3px;background:rgba(255,255,255,.6);"></div>
<div class="a" style="left:591.2px;top:78.3px;width:11.1px;height:1.2px;background:rgba(255,255,255,.55);"></div>
<div class="a" style="left:591.2px;top:83.5px;width:13.4px;height:1.2px;background:rgba(255,255,255,.55);"></div>
<div class="a" style="left:591.2px;top:88.8px;width:15.8px;height:1.2px;background:rgba(255,255,255,.55);"></div>
<div class="a" style="left:591.2px;top:94.0px;width:11.1px;height:1.2px;background:rgba(255,255,255,.55);"></div>
<div class="a" style="left:591.2px;top:99.3px;width:13.4px;height:1.2px;background:rgba(255,255,255,.55);"></div>
<div class="a" style="left:591.2px;top:104.5px;width:15.8px;height:1.2px;background:rgba(255,255,255,.55);"></div>
<div class="a" style="left:591.2px;top:109.8px;width:11.1px;height:1.2px;background:rgba(255,255,255,.55);"></div>
<div class="a" style="left:591.2px;top:115.0px;width:13.4px;height:1.2px;background:rgba(255,255,255,.55);"></div>
<div class="a" style="left:591.2px;top:120.3px;width:15.8px;height:1.2px;background:rgba(255,255,255,.55);"></div>
<div class="a" style="left:583.3px;top:93.0px;width:0.8px;height:3.6px;background:#2aa8e8;"></div>
<div class="a" style="left:604.6px;top:82.3px;width:2.8px;height:2.8px;background:#2ab8f0;border-radius:50%;"></div>
<div class="a" style="left:613.3px;top:87.6px;width:2.8px;height:2.8px;background:#2ab8f0;border-radius:50%;"></div>
<div class="a" style="left:600.7px;top:97.9px;width:2.8px;height:2.8px;background:#2ab8f0;border-radius:50%;"></div>
<div class="a" style="left:599.1px;top:127.0px;width:5.9px;height:2.1px;background:rgba(255,255,255,.15);"></div>
<div class="lb" style="left:682px;top:52.0px">Game..._infolink</div>
<div class="a" style="left:682.0px;top:61.0px;width:40.0px;height:70.5px;background:linear-gradient(#0a141b 0%,#10283a 14%,#1a4058 38%,#2b6384 58%,#1d4560 80%,#0c1a24 100%);overflow:hidden"></div>
<div class="a" style="left:682.0px;top:61.0px;width:40.0px;height:2.1px;background:#0a141b;"></div>
<div class="a" style="left:706.8px;top:61.6px;width:12.0px;height:1.0px;background:rgba(255,255,255,.35);"></div>
<div class="a" style="left:682.0px;top:63.1px;width:40.0px;height:6.3px;background:#0e1f2b;"></div>
<div class="a" style="left:684.0px;top:65.2px;width:3.6px;height:3.6px;background:rgba(255,255,255,.4);border-radius:50%;"></div>
<div class="a" style="left:694.0px;top:65.9px;width:16.0px;height:1.4px;background:rgba(255,255,255,.6);"></div>
<div class="a" style="left:683.6px;top:70.9px;width:36.8px;height:50.8px;background:transparent;border:.8px dashed rgba(255,255,255,.75)"></div>
<div class="a" style="left:688.0px;top:73.7px;width:28.0px;height:1.2px;background:rgba(255,255,255,0.6);"></div>
<div class="a" style="left:690.8px;top:75.7px;width:22.4px;height:1.2px;background:rgba(255,255,255,0.6);"></div>
<div class="a" style="left:685.2px;top:80.0px;width:34.4px;height:4.9px;background:linear-gradient(90deg,#22d36a,#2ab8e8);"></div>
<div class="a" style="left:705.2px;top:81.1px;width:3.2px;height:3.2px;background:#d0704a;border-radius:50%;"></div>
<div class="a" style="left:709.2px;top:81.1px;width:3.2px;height:3.2px;background:#d0704a;border-radius:50%;"></div>
<div class="a" style="left:713.2px;top:81.1px;width:3.2px;height:3.2px;background:#d0704a;border-radius:50%;"></div>
<div class="a" style="left:685.2px;top:86.4px;width:33.6px;height:4.7px;background:#142e40;"></div>
<div class="a" style="left:687.2px;top:88.1px;width:8.8px;height:1.1px;background:rgba(255,255,255,.5);"></div>
<div class="a" style="left:714.8px;top:87.5px;width:3.2px;height:2.3px;background:#c08a62;border-radius:50%"></div>
<div class="a" style="left:685.2px;top:92.0px;width:33.6px;height:4.7px;background:#142e40;"></div>
<div class="a" style="left:687.2px;top:93.8px;width:8.8px;height:1.1px;background:rgba(255,255,255,.5);"></div>
<div class="a" style="left:714.8px;top:93.2px;width:3.2px;height:2.3px;background:#c08a62;border-radius:50%"></div>
<div class="a" style="left:685.2px;top:97.7px;width:33.6px;height:4.7px;background:#142e40;"></div>
<div class="a" style="left:687.2px;top:99.4px;width:8.8px;height:1.1px;background:rgba(255,255,255,.5);"></div>
<div class="a" style="left:714.8px;top:98.8px;width:3.2px;height:2.3px;background:#c08a62;border-radius:50%"></div>
<div class="a" style="left:710.8px;top:98.8px;width:3.2px;height:2.3px;background:#c08a62;border-radius:50%"></div>
<div class="a" style="left:685.2px;top:103.3px;width:33.6px;height:4.7px;background:#142e40;"></div>
<div class="a" style="left:687.2px;top:105.1px;width:8.8px;height:1.1px;background:rgba(255,255,255,.5);"></div>
<div class="a" style="left:692.0px;top:114.6px;width:20.0px;height:5.3px;background:#f5f7f9;"></div>
<div class="a" style="left:706.8px;top:115.6px;width:3.6px;height:3.6px;background:#2a8ee0;border-radius:50%;"></div>
<div class="a" style="left:682.0px;top:122.7px;width:40.0px;height:8.8px;background:#0a1118;"></div>
<div class="a" style="left:692.0px;top:125.2px;width:2.8px;height:2.8px;background:#fff;border-radius:50%;"></div>
<div class="a" style="left:695.6px;top:125.2px;width:2.8px;height:2.8px;background:#fff;border-radius:50%;"></div>
<div class="a" style="left:699.2px;top:125.2px;width:2.8px;height:2.8px;background:#21d36a;border-radius:50%;"></div>
<div class="a" style="left:702.8px;top:125.2px;width:2.8px;height:2.8px;background:#555;border-radius:50%;"></div>
<div class="a" style="left:706.4px;top:125.2px;width:2.8px;height:2.8px;background:#555;border-radius:50%;"></div>
<div class="a" style="left:710.0px;top:125.2px;width:2.8px;height:2.8px;background:#555;border-radius:50%;"></div>
<div class="lb" style="left:728.2px;top:52.0px">Game...estions)</div>
<div class="a" style="left:728.2px;top:61.0px;width:39.5px;height:71.0px;background:linear-gradient(#080c10 0%,#0c1820 20%,#1c4058 52%,#0f2029 80%,#070b0e 100%);overflow:hidden"></div>
<div class="a" style="left:728.2px;top:61.0px;width:39.5px;height:2.1px;background:#0a141b;"></div>
<div class="a" style="left:752.7px;top:61.6px;width:11.8px;height:1.0px;background:rgba(255,255,255,.35);"></div>
<div class="a" style="left:736.1px;top:74.5px;width:23.7px;height:3.2px;background:rgba(255,255,255,.85);"></div>
<div class="a" style="left:734.1px;top:85.8px;width:27.6px;height:1.2px;background:rgba(255,255,255,0.6);"></div>
<div class="a" style="left:736.9px;top:87.8px;width:22.1px;height:1.2px;background:rgba(255,255,255,0.6);"></div>
<div class="a" style="left:734.1px;top:100.8px;width:27.6px;height:1.2px;background:rgba(255,255,255,0.6);"></div>
<div class="a" style="left:736.9px;top:102.7px;width:22.1px;height:1.2px;background:rgba(255,255,255,0.6);"></div>
<div class="a" style="left:738.1px;top:117.1px;width:19.8px;height:6.0px;background:#1ed760;"></div>
<div class="lb" style="left:776.5px;top:52.0px">Home...d) Copy</div>
<div class="a" style="left:776.5px;top:61.0px;width:40.0px;height:71.0px;background:linear-gradient(#0a141b 0%,#10283a 14%,#1a4058 38%,#2b6384 58%,#1d4560 80%,#0c1a24 100%);overflow:hidden"></div>
<div class="a" style="left:776.5px;top:61.0px;width:40.0px;height:2.1px;background:#0a141b;"></div>
<div class="a" style="left:801.3px;top:61.6px;width:12.0px;height:1.0px;background:rgba(255,255,255,.35);"></div>
<div class="a" style="left:776.5px;top:63.1px;width:40.0px;height:6.0px;background:#10283a;"></div>
<div class="a" style="left:779.3px;top:64.9px;width:2.8px;height:2.5px;background:#e0602a;border-radius:50%"></div>
<div class="a" style="left:785.3px;top:65.6px;width:12.8px;height:1.3px;background:rgba(255,255,255,.45);"></div>
<div class="a" style="left:776.5px;top:69.2px;width:40.0px;height:4.6px;background:#0d1d28;"></div>
<div class="a" style="left:778.9px;top:69.9px;width:3.6px;height:3.2px;background:rgba(255,255,255,.55);border-radius:50%"></div>
<div class="a" style="left:791.7px;top:70.9px;width:10.4px;height:1.1px;background:rgba(255,255,255,.55);"></div>
<div class="a" style="left:783.7px;top:78.0px;width:25.6px;height:3.2px;background:rgba(255,255,255,.85);"></div>
<div class="a" style="left:782.5px;top:85.1px;width:28.0px;height:1.2px;background:rgba(255,255,255,0.55);"></div>
<div class="a" style="left:785.3px;top:87.1px;width:22.4px;height:1.2px;background:rgba(255,255,255,0.55);"></div>
<div class="a" style="left:780.5px;top:92.2px;width:8.0px;height:14.2px;background:transparent;border:1.5px solid #2a8ee0;border-radius:50% 50% 50% 0;border-bottom-color:transparent;border-left-color:transparent"></div>
<div class="a" style="left:808.5px;top:93.0px;width:6.0px;height:10.7px;background:transparent;border:1.5px solid #2a8ee0;border-radius:50%;border-bottom-color:transparent;border-left-color:transparent"></div>
<div class="a" style="left:786.5px;top:112.1px;width:20.0px;height:3.2px;background:#1f3c50;"></div>
<div class="a" style="left:786.5px;top:116.4px;width:20.0px;height:6.0px;background:#1ed760;"></div>
<div class="a" style="left:776.5px;top:126.7px;width:40.0px;height:5.3px;background:#0a141b;"></div>
<div class="a" style="left:780.5px;top:128.4px;width:4.8px;height:2.1px;background:rgba(255,255,255,.18);"></div>
<div class="a" style="left:807.7px;top:128.4px;width:4.8px;height:2.1px;background:rgba(255,255,255,.18);"></div>
<div class="a" style="left:794.9px;top:125.3px;width:3.2px;height:5.7px;background:#3aa0f0;border-radius:1px"></div>
<div class="lb" style="left:583.3px;top:130.7px">Home...e Feed</div>
<div class="a" style="left:583.3px;top:139.7px;width:39.5px;height:71.0px;background:linear-gradient(#0a141b 0%,#10283a 14%,#1a4058 38%,#2b6384 58%,#1d4560 80%,#0c1a24 100%);overflow:hidden"></div>
<div class="a" style="left:583.3px;top:139.7px;width:39.5px;height:2.1px;background:#0a141b;"></div>
<div class="a" style="left:607.8px;top:140.3px;width:11.8px;height:1.0px;background:rgba(255,255,255,.35);"></div>
<div class="a" style="left:583.3px;top:141.8px;width:39.5px;height:6.0px;background:#10283a;"></div>
<div class="a" style="left:586.1px;top:143.6px;width:2.8px;height:2.5px;background:#e0602a;border-radius:50%"></div>
<div class="a" style="left:592.0px;top:144.3px;width:12.6px;height:1.3px;background:rgba(255,255,255,.45);"></div>
<div class="a" style="left:583.3px;top:147.9px;width:39.5px;height:4.6px;background:#0d1d28;"></div>
<div class="a" style="left:585.7px;top:148.6px;width:3.6px;height:3.2px;background:rgba(255,255,255,.55);border-radius:50%"></div>
<div class="a" style="left:598.3px;top:149.6px;width:10.3px;height:1.1px;background:rgba(255,255,255,.55);"></div>
<div class="a" style="left:589.2px;top:154.6px;width:27.6px;height:1.2px;background:rgba(255,255,255,0.7);"></div>
<div class="a" style="left:592.0px;top:156.6px;width:22.1px;height:1.2px;background:rgba(255,255,255,0.7);"></div>
<div class="a" style="left:586.5px;top:161.0px;width:33.2px;height:4.7px;background:#11283a;box-shadow:0 0 0 .5px rgba(255,255,255,.06)"></div>
<div class="a" style="left:598.1px;top:162.8px;width:9.9px;height:1.1px;background:rgba(255,255,255,.45);"></div>
<div class="a" style="left:586.5px;top:168.1px;width:33.2px;height:4.7px;background:#11283a;box-shadow:0 0 0 .5px rgba(255,255,255,.06)"></div>
<div class="a" style="left:598.1px;top:169.9px;width:9.9px;height:1.1px;background:rgba(255,255,255,.45);"></div>
<div class="a" style="left:586.5px;top:175.2px;width:33.2px;height:4.7px;background:#11283a;box-shadow:0 0 0 .5px rgba(255,255,255,.06)"></div>
<div class="a" style="left:598.1px;top:177.0px;width:9.9px;height:1.1px;background:rgba(255,255,255,.45);"></div>
<div class="a" style="left:586.5px;top:182.3px;width:33.2px;height:4.7px;background:#11283a;box-shadow:0 0 0 .5px rgba(255,255,255,.06)"></div>
<div class="a" style="left:598.1px;top:184.1px;width:9.9px;height:1.1px;background:rgba(255,255,255,.45);"></div>
<div class="a" style="left:586.5px;top:189.4px;width:33.2px;height:4.7px;background:#11283a;box-shadow:0 0 0 .5px rgba(255,255,255,.06)"></div>
<div class="a" style="left:598.1px;top:191.2px;width:9.9px;height:1.1px;background:rgba(255,255,255,.45);"></div>
<div class="a" style="left:583.3px;top:205.4px;width:39.5px;height:5.3px;background:#0a141b;"></div>
<div class="a" style="left:587.2px;top:207.1px;width:4.7px;height:2.1px;background:rgba(255,255,255,.18);"></div>
<div class="a" style="left:614.1px;top:207.1px;width:4.7px;height:2.1px;background:rgba(255,255,255,.18);"></div>
<div class="a" style="left:601.5px;top:204.0px;width:3.2px;height:5.7px;background:#3aa0f0;border-radius:1px"></div>
<div class="lb" style="left:631.2px;top:130.7px">Home...uestion)</div>
<div class="a" style="left:631.2px;top:139.7px;width:39.5px;height:71.0px;background:linear-gradient(#0a141b 0%,#10283a 14%,#1a4058 38%,#2b6384 58%,#1d4560 80%,#0c1a24 100%);overflow:hidden"></div>
<div class="a" style="left:631.2px;top:139.7px;width:39.5px;height:2.1px;background:#0a141b;"></div>
<div class="a" style="left:655.7px;top:140.3px;width:11.8px;height:1.0px;background:rgba(255,255,255,.35);"></div>
<div class="a" style="left:631.2px;top:141.8px;width:39.5px;height:6.0px;background:#10283a;"></div>
<div class="a" style="left:634.0px;top:143.6px;width:2.8px;height:2.5px;background:#e0602a;border-radius:50%"></div>
<div class="a" style="left:639.9px;top:144.3px;width:12.6px;height:1.3px;background:rgba(255,255,255,.45);"></div>
<div class="a" style="left:631.2px;top:147.9px;width:39.5px;height:4.6px;background:#0d1d28;"></div>
<div class="a" style="left:633.6px;top:148.6px;width:3.6px;height:3.2px;background:rgba(255,255,255,.55);border-radius:50%"></div>
<div class="a" style="left:646.2px;top:149.6px;width:10.3px;height:1.1px;background:rgba(255,255,255,.55);"></div>
<div class="a" style="left:637.1px;top:154.6px;width:27.6px;height:1.2px;background:rgba(255,255,255,0.7);"></div>
<div class="a" style="left:639.9px;top:156.6px;width:22.1px;height:1.2px;background:rgba(255,255,255,0.7);"></div>
<div class="a" style="left:633.6px;top:161.0px;width:34.8px;height:5.3px;background:linear-gradient(90deg,#22d36a,#2ab8e8);"></div>
<div class="a" style="left:654.1px;top:162.1px;width:3.2px;height:3.2px;background:#d0704a;border-radius:50%;"></div>
<div class="a" style="left:658.1px;top:162.1px;width:3.2px;height:3.2px;background:#d0704a;border-radius:50%;"></div>
<div class="a" style="left:662.0px;top:162.1px;width:3.2px;height:3.2px;background:#d0704a;border-radius:50%;"></div>
<div class="a" style="left:634.4px;top:168.1px;width:33.2px;height:4.7px;background:#11283a;"></div>
<div class="a" style="left:636.3px;top:169.9px;width:8.7px;height:1.1px;background:rgba(255,255,255,.5);"></div>
<div class="a" style="left:634.4px;top:174.5px;width:33.2px;height:4.7px;background:#11283a;"></div>
<div class="a" style="left:636.3px;top:176.3px;width:8.7px;height:1.1px;background:rgba(255,255,255,.5);"></div>
<div class="a" style="left:663.6px;top:175.7px;width:3.2px;height:2.3px;background:#c08a62;border-radius:50%"></div>
<div class="a" style="left:634.4px;top:180.9px;width:33.2px;height:4.7px;background:#11283a;"></div>
<div class="a" style="left:636.3px;top:182.7px;width:8.7px;height:1.1px;background:rgba(255,255,255,.5);"></div>
<div class="a" style="left:663.6px;top:182.1px;width:3.2px;height:2.3px;background:#c08a62;border-radius:50%"></div>
<div class="a" style="left:659.6px;top:182.1px;width:3.2px;height:2.3px;background:#c08a62;border-radius:50%"></div>
<div class="a" style="left:634.4px;top:187.3px;width:33.2px;height:4.7px;background:#11283a;"></div>
<div class="a" style="left:636.3px;top:189.0px;width:8.7px;height:1.1px;background:rgba(255,255,255,.5);"></div>
<div class="a" style="left:647.0px;top:194.4px;width:7.9px;height:8.0px;background:#f4f6f8;border-radius:50%;"></div>
<div class="a" style="left:649.8px;top:196.5px;width:2.4px;height:2.4px;background:#3aa0f0;border-radius:50%;"></div>
<div class="a" style="left:631.2px;top:205.4px;width:39.5px;height:5.3px;background:#0a141b;"></div>
<div class="a" style="left:635.2px;top:207.1px;width:4.7px;height:2.1px;background:rgba(255,255,255,.18);"></div>
<div class="a" style="left:662.0px;top:207.1px;width:4.7px;height:2.1px;background:rgba(255,255,255,.18);"></div>
<div class="a" style="left:649.4px;top:204.0px;width:3.2px;height:5.7px;background:#3aa0f0;border-radius:1px"></div>
<div class="lb" style="left:680px;top:130.7px">Share Question</div>
<div class="a" style="left:680.0px;top:139.7px;width:39.8px;height:71.0px;background:#06090c;overflow:hidden"></div>
<div class="a" style="left:680.0px;top:139.7px;width:39.8px;height:2.1px;background:#0a141b;"></div>
<div class="a" style="left:704.7px;top:140.3px;width:11.9px;height:1.0px;background:rgba(255,255,255,.35);"></div>
<div class="a" style="left:680.0px;top:141.8px;width:39.8px;height:6.4px;background:#0d1820;"></div>
<div class="a" style="left:690.0px;top:144.7px;width:19.9px;height:1.4px;background:rgba(255,255,255,.6);"></div>
<div class="a" style="left:686.0px;top:153.9px;width:27.9px;height:1.4px;background:rgba(255,255,255,.5);"></div>
<div class="a" style="left:682.4px;top:158.2px;width:35.0px;height:31.9px;background:#0f2636;"></div>
<div class="a" style="left:683.2px;top:158.9px;width:33.4px;height:4.3px;background:#15354a;"></div>
<div class="a" style="left:685.6px;top:166.0px;width:29.5px;height:17.8px;background:#f4f4f4;"></div>
<div class="a" style="left:688.0px;top:183.0px;width:3.2px;height:3.6px;background:#f4f4f4;"></div>
<div class="a" style="left:683.2px;top:185.8px;width:4.8px;height:4.8px;background:#a07050;border-radius:50%;"></div>
<div class="a" style="left:691.9px;top:188.0px;width:23.9px;height:1.4px;background:#1a5040;"></div>
<div class="a" style="left:695.1px;top:195.8px;width:9.6px;height:9.6px;background:#f4f6f8;border-radius:50%;"></div>
<div class="a" style="left:698.3px;top:197.9px;width:3.2px;height:3.2px;background:#3aa0f0;border-radius:50%;"></div>
<div class="lb" style="left:728.2px;top:130.7px">Home...co late)</div>
<div class="a" style="left:728.2px;top:139.7px;width:39.5px;height:71.0px;background:#06090c;overflow:hidden"></div>
<div class="a" style="left:728.2px;top:139.7px;width:39.5px;height:2.1px;background:#0a141b;"></div>
<div class="a" style="left:752.7px;top:140.3px;width:11.8px;height:1.0px;background:rgba(255,255,255,.35);"></div>
<div class="a" style="left:728.2px;top:141.8px;width:39.5px;height:6.0px;background:#0b1218;"></div>
<div class="a" style="left:731.0px;top:143.6px;width:2.8px;height:2.5px;background:#e0602a;border-radius:50%"></div>
<div class="a" style="left:736.9px;top:144.3px;width:12.6px;height:1.3px;background:rgba(255,255,255,.45);"></div>
<div class="a" style="left:728.2px;top:147.9px;width:39.5px;height:4.6px;background:#0a1016;"></div>
<div class="a" style="left:739.3px;top:158.9px;width:17.4px;height:2.8px;background:rgba(255,255,255,.85);"></div>
<div class="a" style="left:741.6px;top:167.4px;width:12.6px;height:9.9px;background:#e8123d;clip-path:polygon(50% 0,100% 100%,0 100%)"></div>
<div class="a" style="left:734.1px;top:182.3px;width:27.6px;height:1.2px;background:rgba(255,255,255,0.45);"></div>
<div class="a" style="left:736.9px;top:184.3px;width:22.1px;height:1.2px;background:rgba(255,255,255,0.45);"></div>
<div class="a" style="left:730.2px;top:158.9px;width:35.6px;height:42.6px;background:transparent;border:.8px dashed rgba(255,255,255,.35)"></div>
<div class="a" style="left:738.1px;top:197.9px;width:19.8px;height:5.3px;background:#1ed760;"></div>
<div class="lb" style="left:776.4px;top:130.7px">Categ...parator</div>
<div class="a" style="left:776.4px;top:139.7px;width:39.8px;height:71.0px;background:linear-gradient(#0a141b 0%,#10283a 14%,#1a4058 38%,#2b6384 58%,#1d4560 80%,#0c1a24 100%);overflow:hidden"></div>
<div class="a" style="left:776.4px;top:139.7px;width:39.8px;height:2.1px;background:#0a141b;"></div>
<div class="a" style="left:801.1px;top:140.3px;width:11.9px;height:1.0px;background:rgba(255,255,255,.35);"></div>
<div class="a" style="left:776.4px;top:141.8px;width:39.8px;height:6.4px;background:#0e1b25;"></div>
<div class="a" style="left:778.4px;top:144.0px;width:3.6px;height:3.6px;background:rgba(255,255,255,.4);border-radius:50%;"></div>
<div class="a" style="left:788.3px;top:144.7px;width:15.9px;height:1.4px;background:rgba(255,255,255,.6);"></div>
<div class="a" style="left:778.4px;top:155.3px;width:35.8px;height:46.1px;background:transparent;border:1px dashed rgba(255,255,255,.75)"></div>
<div class="a" style="left:794.3px;top:160.3px;width:4.0px;height:3.6px;background:rgba(255,255,255,.85);"></div>
<div class="a" style="left:791.5px;top:170.2px;width:9.6px;height:1.1px;background:rgba(255,255,255,.6);"></div>
<div class="a" style="left:793.1px;top:175.2px;width:6.4px;height:5.0px;background:#e8edf0;"></div>
<div class="a" style="left:782.0px;top:183.7px;width:28.7px;height:2.8px;background:rgba(255,255,255,.9);"></div>
<div class="a" style="left:786.4px;top:190.8px;width:19.9px;height:5.3px;background:#1ed760;"></div>
<div class="a" style="left:776.4px;top:205.4px;width:39.8px;height:5.3px;background:#0b151c;"></div>
<div class="lb" style="left:823.3px;top:130.7px">Categ...estions)</div>
<div class="a" style="left:823.3px;top:139.7px;width:40.0px;height:71.0px;background:#06090c;overflow:hidden"></div>
<div class="a" style="left:823.3px;top:139.7px;width:40.0px;height:2.1px;background:#0a141b;"></div>
<div class="a" style="left:848.1px;top:140.3px;width:12.0px;height:1.0px;background:rgba(255,255,255,.35);"></div>
<div class="a" style="left:823.3px;top:141.8px;width:40.0px;height:5.7px;background:#0b1218;"></div>
<div class="a" style="left:827.3px;top:148.2px;width:32.8px;height:7.8px;background:#1a3345;"></div>
<div class="a" style="left:829.3px;top:149.3px;width:6.4px;height:6.4px;background:#e8123d;border-radius:50%;"></div>
<div class="a" style="left:838.5px;top:150.3px;width:18.0px;height:3.2px;background:rgba(232,18,61,.75);"></div>
<div class="a" style="left:837.7px;top:161.7px;width:11.2px;height:1.4px;background:rgba(255,255,255,.6);"></div>
<div class="a" style="left:840.1px;top:169.5px;width:6.4px;height:5.7px;background:#e8edf0;"></div>
<div class="a" style="left:828.9px;top:178.8px;width:28.8px;height:3.2px;background:rgba(255,255,255,.9);"></div>
<div class="a" style="left:833.3px;top:197.9px;width:20.0px;height:5.7px;background:#1ed760;"></div>
<div class="a" style="left:841.3px;top:207.1px;width:4.0px;height:2.1px;background:rgba(255,255,255,.2);"></div>
<div class="a" style="left:493.8px;top:34.0px;width:33.0px;height:24.0px;background:#10283a;"></div>
<div class="a" style="left:499.0px;top:38.0px;width:23.0px;height:14.0px;background:radial-gradient(circle,#2a4a60 0.5px,transparent 0.8px) 0 0/2px 2px,#173347;"></div>
<div class="a" style="left:500.0px;top:52.0px;width:3.0px;height:3.0px;background:#173347;clip-path:polygon(0 0,100% 0,0 100%)"></div>
<div class="lb" style="left:532px;top:27.3px">Emo...cons</div>
<div class="a" style="left:531.0px;top:36.7px;width:28.5px;height:13.5px;background:#fafafa;box-shadow:0 0 1.5px rgba(0,0,0,.25)"></div>
<div class="a" style="left:533.2px;top:38.3px;width:4.6px;height:4.6px;border-radius:50%;background:#f2c21a;box-shadow:inset 0 0 0 .4px #a07a00"></div>
<div class="a" style="left:533.2px;top:44.0px;width:4.6px;height:4.6px;border-radius:50%;background:#f2c21a;box-shadow:inset 0 0 0 .4px #a07a00"></div>
<div class="a" style="left:539.8000000000001px;top:38.3px;width:4.6px;height:4.6px;border-radius:50%;background:#f2c21a;box-shadow:inset 0 0 0 .4px #a07a00"></div>
<div class="a" style="left:539.8000000000001px;top:44.0px;width:4.6px;height:4.6px;border-radius:50%;background:#f2c21a;box-shadow:inset 0 0 0 .4px #a07a00"></div>
<div class="a" style="left:546.4000000000001px;top:38.3px;width:4.6px;height:4.6px;border-radius:50%;background:#f2c21a;box-shadow:inset 0 0 0 .4px #a07a00"></div>
<div class="a" style="left:546.4000000000001px;top:44.0px;width:4.6px;height:4.6px;border-radius:50%;background:#f2c21a;box-shadow:inset 0 0 0 .4px #a07a00"></div>
<div class="a" style="left:553.0px;top:38.3px;width:4.6px;height:4.6px;border-radius:50%;background:#f2c21a;box-shadow:inset 0 0 0 .4px #a07a00"></div>
<div class="a" style="left:553.0px;top:44.0px;width:4.6px;height:4.6px;border-radius:50%;background:#f2c21a;box-shadow:inset 0 0 0 .4px #a07a00"></div>
<svg class="a" style="left:500.5px;top:72.5px" width="20" height="20" viewBox="0 0 20 20"><defs><clipPath id="girl"><circle cx="10" cy="10" r="9"/></clipPath></defs><circle cx="10" cy="10" r="9.8" fill="#fff"/><g clip-path="url(#girl)"><rect width="20" height="20" fill="#c8a070"/><path d="M3 20 Q1 8 5 4 Q10 -1 15 4 Q19 8 17 20Z" fill="#2a1a12"/><ellipse cx="10.5" cy="11" rx="5" ry="6.5" fill="#f0d0b8"/><path d="M5 8 Q10 3 16 8 L16 5 Q10 1 5 5Z" fill="#3a2418"/><path d="M6.5 10 h3 M11.5 10 h3" stroke="#555" stroke-width=".8"/><ellipse cx="9.5" cy="14.5" rx="1.3" ry="1" fill="#b0102a"/><path d="M3 14 Q5 19 4 20 L1 20 Z" fill="#1a0e08"/></g></svg>
<div class="a" style="left:530.0px;top:56.2px;width:34.0px;height:33.2px;background:radial-gradient(#1e4864,#0b1a26 75%);"></div>
<div class="a" style="left:530.0px;top:56.2px;width:34.0px;height:3.5px;background:#0c1c28;"></div>
<div class="a" style="left:537.0px;top:57.0px;width:20.0px;height:1.5px;background:rgba(255,255,255,.5);"></div>
<div class="a" style="left:532.5px;top:61.5px;width:29.5px;height:22.5px;background:#fafafa;"></div>
<div class="a" style="left:535.0px;top:63.0px;width:24.0px;height:1.3px;background:#555;"></div>
<div class="a" style="left:537.0px;top:65.0px;width:20.0px;height:1.3px;background:#555;"></div>
<div class="a" style="left:535.0px;top:67.5px;width:22.0px;height:3.0px;background:#d0e8f6;"></div>
<div class="a" style="left:557px;top:67.3px;width:3.4px;height:3.4px;border-radius:50%;background:#111"></div>
<div class="a" style="left:535.0px;top:72.0px;width:14.0px;height:0.9px;background:#aaa;"></div>
<div class="a" style="left:557px;top:71.5px;width:2.6px;height:2.6px;border-radius:50%;background:#ddd"></div>
<div class="a" style="left:535.0px;top:74.8px;width:14.0px;height:0.9px;background:#aaa;"></div>
<div class="a" style="left:557px;top:74.3px;width:2.6px;height:2.6px;border-radius:50%;background:#ddd"></div>
<div class="a" style="left:535.0px;top:77.6px;width:14.0px;height:0.9px;background:#aaa;"></div>
<div class="a" style="left:557px;top:77.1px;width:2.6px;height:2.6px;border-radius:50%;background:#ddd"></div>
<div class="a" style="left:535.0px;top:80.4px;width:14.0px;height:0.9px;background:#aaa;"></div>
<div class="a" style="left:557px;top:79.9px;width:2.6px;height:2.6px;border-radius:50%;background:#ddd"></div>
<div class="a" style="left:533.0px;top:84.5px;width:6.0px;height:4.5px;background:#7a5a40;"></div>
<div class="a" style="left:540.0px;top:86.0px;width:22.0px;height:1.5px;background:#1e6a50;"></div>
<div class="a" style="left:525.0px;top:93.5px;width:38.0px;height:4.4px;background:linear-gradient(90deg,#1ed760,#20b0f0);"></div>
<div class="a" style="left:548.0px;top:94px;width:3.4px;height:3.4px;border-radius:50%;background:#6a4a38"></div>
<div class="a" style="left:551.6px;top:94px;width:3.4px;height:3.4px;border-radius:50%;background:#6a4a38"></div>
<div class="a" style="left:555.2px;top:94px;width:3.4px;height:3.4px;border-radius:50%;background:#6a4a38"></div>
<div class="a" style="left:558.8px;top:94px;width:3.4px;height:3.4px;border-radius:50%;background:#223"></div>
<div class="a" style="left:525.0px;top:103.5px;width:38.0px;height:7.5px;background:linear-gradient(90deg,#1ed760,#20b0f0);"></div>
<div class="a" style="left:528.0px;top:106.0px;width:8.0px;height:1.5px;background:rgba(255,255,255,.8);"></div>
<div class="a" style="left:548.0px;top:105.5px;width:3.4px;height:3.4px;border-radius:50%;background:#6a4a38"></div>
<div class="a" style="left:551.6px;top:105.5px;width:3.4px;height:3.4px;border-radius:50%;background:#6a4a38"></div>
<div class="a" style="left:555.2px;top:105.5px;width:3.4px;height:3.4px;border-radius:50%;background:#6a4a38"></div>
<div class="a" style="left:558.8px;top:105.5px;width:3.4px;height:3.4px;border-radius:50%;background:#223"></div>
<div class="a" style="left:525.0px;top:111.0px;width:38.0px;height:9.3px;background:#fff;box-shadow:0 0 1px rgba(0,0,0,.2)"></div>
<div class="a" style="left:529.0px;top:115.0px;width:6.0px;height:1.2px;background:#777;"></div>
<div class="a" style="left:553px;top:114px;width:3.4px;height:3.4px;border-radius:50%;background:#333"></div>
<div class="a" style="left:556.5px;top:114px;width:3.4px;height:3.4px;border-radius:50%;background:#8a6040"></div>
<div class="a" style="left:525.0px;top:122.4px;width:38.0px;height:4.3px;background:#0f2231;"></div>
<div class="a" style="left:538.0px;top:123.8px;width:10.0px;height:1.5px;background:#d07040;"></div>
<div class="a" style="left:525.0px;top:131.8px;width:38.5px;height:5.8px;background:#10283a;"></div>
<div class="a" style="left:528.0px;top:134.0px;width:12.0px;height:1.3px;background:rgba(255,255,255,.5);"></div>
<div class="a" style="left:554.0px;top:132.8px;width:8.0px;height:3.5px;background:#1fa8f0;"></div>
<div class="a" style="left:484.5px;top:114.5px;width:5.5px;height:5.5px;border-radius:50%;border:1.1px solid #7f98b0;border-top-color:transparent"></div>
<div class="lb" style="left:525px;top:136.2px">categor...home)</div>
<div class="a" style="left:499.2px;top:146.9px;width:16.3px;height:13.3px;background:#10283a;"></div>
<div class="a" style="left:501.0px;top:149.0px;width:2.5px;height:3.5px;background:#8ab8d8;"></div>
<div class="a" style="left:504.0px;top:150.0px;width:3.0px;height:2.5px;background:#cfe2ee;"></div>
<div class="a" style="left:508.5px;top:149.0px;width:2.5px;height:3.5px;background:#8ab8d8;"></div>
<div class="a" style="left:511.5px;top:150.0px;width:3.0px;height:2.5px;background:#cfe2ee;"></div>
<div class="a" style="left:501.0px;top:154.5px;width:2.5px;height:3.5px;background:#8ab8d8;"></div>
<div class="a" style="left:504.0px;top:155.5px;width:3.0px;height:2.5px;background:#cfe2ee;"></div>
<div class="a" style="left:508.5px;top:154.5px;width:2.5px;height:3.5px;background:#8ab8d8;"></div>
<div class="a" style="left:511.5px;top:155.5px;width:3.0px;height:2.5px;background:#cfe2ee;"></div>
<div class="a" style="left:525.1px;top:146.3px;width:38.4px;height:19.3px;background:linear-gradient(160deg,#0d2a18,#2a8a3a 45%,#1e6a2e 70%,#0e2a1e);box-shadow:0 0 1.5px rgba(0,0,0,.25)"></div>
<div class="a" style="left:525.1px;top:146.3px;width:38.4px;height:2.5px;background:rgba(0,0,0,.4);"></div>
<div class="a" style="left:529.0px;top:153.3px;width:12.0px;height:5.0px;background:transparent;border:1px solid rgba(255,255,255,.7);border-radius:50%"></div>
<div class="a" style="left:532px;top:153.8px;width:4.5px;height:4.5px;border-radius:50%;background:#f0f0f0"></div>
<div class="a" style="left:545.0px;top:150.3px;width:2.0px;height:9.0px;background:#3adf60;transform:rotate(25deg)"></div>
<div class="a" style="left:552.0px;top:160.3px;width:10.0px;height:2.0px;background:#1ed760;"></div>
<div class="a" style="left:525.1px;top:167.8px;width:38.4px;height:19.3px;background:linear-gradient(160deg,#0f2c33,#245a5a 50%,#103038);box-shadow:0 0 1.5px rgba(0,0,0,.25)"></div>
<div class="a" style="left:525.1px;top:167.8px;width:38.4px;height:2.5px;background:rgba(0,0,0,.4);"></div>
<div class="a" style="left:529.0px;top:174.8px;width:12.0px;height:5.0px;background:transparent;border:1px solid rgba(255,255,255,.7);border-radius:50%"></div>
<div class="a" style="left:532px;top:175.3px;width:4.5px;height:4.5px;border-radius:50%;background:#f0f0f0"></div>
<div class="a" style="left:545.0px;top:171.8px;width:2.0px;height:9.0px;background:#3adf60;transform:rotate(25deg)"></div>
<div class="a" style="left:552.0px;top:181.8px;width:10.0px;height:2.0px;background:rgba(255,255,255,.2);"></div>
<div class="a" style="left:525.1px;top:189.4px;width:38.4px;height:19.3px;background:linear-gradient(160deg,#0d2a18,#2a8a3a 45%,#1e6a2e 70%,#0e2a1e);box-shadow:0 0 1.5px rgba(0,0,0,.25)"></div>
<div class="a" style="left:525.1px;top:189.4px;width:38.4px;height:2.5px;background:rgba(0,0,0,.4);"></div>
<div class="a" style="left:529.0px;top:196.4px;width:12.0px;height:5.0px;background:transparent;border:1px solid rgba(255,255,255,.7);border-radius:50%"></div>
<div class="a" style="left:532px;top:196.9px;width:4.5px;height:4.5px;border-radius:50%;background:#f0f0f0"></div>
<div class="a" style="left:545.0px;top:193.4px;width:2.0px;height:9.0px;background:#3adf60;transform:rotate(25deg)"></div>
<div class="a" style="left:552.0px;top:203.4px;width:10.0px;height:2.0px;background:#1ed760;"></div>
<div class="a" style="left:525.1px;top:206.4px;width:38.4px;height:2.3px;background:#e8123d;"></div>
<div class="lb" style="left:475.6px;top:208.0px">Leader...nds 2)</div>
<div class="a" style="left:475.6px;top:217.0px;width:39.5px;height:71.0px;background:linear-gradient(#080c10 0%,#0c1820 20%,#1c4058 52%,#0f2029 80%,#070b0e 100%);overflow:hidden"></div>
<div class="a" style="left:475.6px;top:217.0px;width:39.5px;height:2.1px;background:#0a141b;"></div>
<div class="a" style="left:500.1px;top:217.6px;width:11.8px;height:1.0px;background:rgba(255,255,255,.35);"></div>
<div class="a" style="left:475.6px;top:219.1px;width:39.5px;height:5.7px;background:#0b1218;"></div>
<div class="a" style="left:487.5px;top:221.3px;width:11.8px;height:1.4px;background:rgba(255,255,255,.25);"></div>
<div class="a" style="left:489.8px;top:226.9px;width:11.1px;height:1.1px;background:rgba(255,255,255,.3);"></div>
<div class="a" style="left:481.5px;top:246.1px;width:27.6px;height:1.2px;background:rgba(255,255,255,0.8);"></div>
<div class="a" style="left:484.3px;top:248.1px;width:22.1px;height:1.2px;background:rgba(255,255,255,0.8);"></div>
<div class="a" style="left:490.6px;top:253.9px;width:9.5px;height:9.6px;background:#1ed760;border-radius:50%;"></div>
<div class="a" style="left:475.6px;top:282.7px;width:39.5px;height:5.3px;background:#0a1016;"></div>
<div class="a" style="left:479.6px;top:284.4px;width:4.7px;height:2.1px;background:rgba(255,255,255,.18);"></div>
<div class="a" style="left:506.4px;top:284.4px;width:4.7px;height:2.1px;background:rgba(255,255,255,.18);"></div>
<div class="lb" style="left:525.4px;top:208.0px">Leader...riends)</div>
<div class="a" style="left:525.4px;top:217.0px;width:39.6px;height:71.0px;background:linear-gradient(#0a141b 0%,#112636 14%,#24506e 50%,#3d7ca4 86%,#0c1820 93%);overflow:hidden"></div>
<div class="a" style="left:525.4px;top:217.0px;width:39.6px;height:2.1px;background:#0a141b;"></div>
<div class="a" style="left:550.0px;top:217.6px;width:11.9px;height:1.0px;background:rgba(255,255,255,.35);"></div>
<div class="a" style="left:525.4px;top:219.1px;width:39.6px;height:6.0px;background:#10283a;"></div>
<div class="a" style="left:528.2px;top:220.9px;width:2.8px;height:2.5px;background:#e0602a;border-radius:50%"></div>
<div class="a" style="left:534.1px;top:221.6px;width:12.7px;height:1.3px;background:rgba(255,255,255,.45);"></div>
<div class="a" style="left:525.4px;top:225.2px;width:39.6px;height:3.6px;background:#0f2534;"></div>
<div class="a" style="left:539.7px;top:226.6px;width:11.1px;height:1.1px;background:rgba(255,255,255,.5);"></div>
<div class="a" style="left:531.3px;top:246.1px;width:27.7px;height:1.2px;background:rgba(255,255,255,0.8);"></div>
<div class="a" style="left:534.1px;top:248.1px;width:22.2px;height:1.2px;background:rgba(255,255,255,0.8);"></div>
<div class="a" style="left:540.4px;top:253.9px;width:9.5px;height:9.6px;background:#1ed760;border-radius:50%;"></div>
<div class="a" style="left:525.4px;top:282.7px;width:39.6px;height:5.3px;background:#2a5a80;"></div>
<div class="a" style="left:529.4px;top:284.4px;width:4.8px;height:2.1px;background:rgba(255,255,255,.18);"></div>
<div class="a" style="left:556.3px;top:284.4px;width:4.8px;height:2.1px;background:rgba(255,255,255,.18);"></div>
<div class="a" style="left:543.6px;top:281.3px;width:3.2px;height:5.7px;background:#3aa0f0;border-radius:1px"></div>
<div class="a" style="left:523.6px;top:242.2px;width:3.6px;height:3.6px;border-radius:50%;background:#fff;border:.5px solid #999"></div>
<div class="a" style="left:563.2px;top:242.2px;width:3.6px;height:3.6px;border-radius:50%;background:#fff;border:.5px solid #999"></div>
<div class="a" style="left:523.6px;top:257.2px;width:3.6px;height:3.6px;border-radius:50%;background:#fff;border:.5px solid #999"></div>
<div class="a" style="left:563.2px;top:257.2px;width:3.6px;height:3.6px;border-radius:50%;background:#fff;border:.5px solid #999"></div>
<div class="a" style="left:523.6px;top:286.2px;width:3.6px;height:3.6px;border-radius:50%;background:#fff;border:.5px solid #999"></div>
<div class="a" style="left:563.2px;top:286.2px;width:3.6px;height:3.6px;border-radius:50%;background:#fff;border:.5px solid #999"></div>
<div class="a" style="left:543.4000000000001px;top:286.2px;width:3.6px;height:3.6px;border-radius:50%;background:#fff;border:.5px solid #999"></div>
<div class="a" style="left:543.4000000000001px;top:242.2px;width:3.6px;height:3.6px;border-radius:50%;background:#fff;border:.5px solid #999"></div>
<div class="lb" style="left:583.3px;top:208.0px">Leader...ro List</div>
<div class="a" style="left:583.3px;top:217.0px;width:39.4px;height:71.0px;background:linear-gradient(#0a141b 0%,#10283a 14%,#1a4058 38%,#2b6384 58%,#1d4560 80%,#0c1a24 100%);overflow:hidden"></div>
<div class="a" style="left:583.3px;top:217.0px;width:39.4px;height:2.1px;background:#0a141b;"></div>
<div class="a" style="left:607.7px;top:217.6px;width:11.8px;height:1.0px;background:rgba(255,255,255,.35);"></div>
<div class="a" style="left:583.3px;top:219.1px;width:39.4px;height:6.0px;background:#10283a;"></div>
<div class="a" style="left:586.1px;top:220.9px;width:2.8px;height:2.5px;background:#e0602a;border-radius:50%"></div>
<div class="a" style="left:592.0px;top:221.6px;width:12.6px;height:1.3px;background:rgba(255,255,255,.45);"></div>
<div class="a" style="left:583.3px;top:225.2px;width:39.4px;height:4.3px;background:#0f2534;"></div>
<div class="a" style="left:597.5px;top:226.6px;width:11.0px;height:1.1px;background:rgba(255,255,255,.5);"></div>
<div class="a" style="left:600.6px;top:231.2px;width:4.7px;height:4.3px;background:transparent;border:1px solid #ddd;border-radius:50%"></div>
<div class="a" style="left:584.9px;top:237.6px;width:36.2px;height:7.5px;background:#173a52;"></div>
<div class="a" style="left:585.7px;top:238.3px;width:3.9px;height:4.0px;background:rgba(255,255,255,.5);border-radius:50%;"></div>
<div class="a" style="left:591.2px;top:239.0px;width:11.8px;height:1.1px;background:rgba(255,255,255,.6);"></div>
<div class="a" style="left:594.3px;top:241.5px;width:3.2px;height:3.2px;background:#d08040;border-radius:50%;"></div>
<div class="a" style="left:597.9px;top:241.5px;width:3.2px;height:3.2px;background:#d08040;border-radius:50%;"></div>
<div class="a" style="left:601.4px;top:241.5px;width:3.2px;height:3.2px;background:#d08040;border-radius:50%;"></div>
<div class="a" style="left:584.9px;top:246.5px;width:36.2px;height:7.5px;background:#173a52;"></div>
<div class="a" style="left:585.7px;top:247.2px;width:3.9px;height:4.0px;background:rgba(255,255,255,.5);border-radius:50%;"></div>
<div class="a" style="left:591.2px;top:248.0px;width:11.8px;height:1.1px;background:rgba(255,255,255,.6);"></div>
<div class="a" style="left:594.3px;top:250.4px;width:3.2px;height:3.2px;background:#d08040;border-radius:50%;"></div>
<div class="a" style="left:597.9px;top:250.4px;width:3.2px;height:3.2px;background:#d08040;border-radius:50%;"></div>
<div class="a" style="left:601.4px;top:250.4px;width:3.2px;height:3.2px;background:#d08040;border-radius:50%;"></div>
<div class="a" style="left:584.9px;top:255.5px;width:36.2px;height:7.5px;background:#173a52;"></div>
<div class="a" style="left:585.7px;top:256.2px;width:3.9px;height:4.0px;background:rgba(255,255,255,.5);border-radius:50%;"></div>
<div class="a" style="left:591.2px;top:256.9px;width:11.8px;height:1.1px;background:rgba(255,255,255,.6);"></div>
<div class="a" style="left:594.3px;top:259.4px;width:3.2px;height:3.2px;background:#d08040;border-radius:50%;"></div>
<div class="a" style="left:597.9px;top:259.4px;width:3.2px;height:3.2px;background:#d08040;border-radius:50%;"></div>
<div class="a" style="left:601.4px;top:259.4px;width:3.2px;height:3.2px;background:#d08040;border-radius:50%;"></div>
<div class="a" style="left:584.9px;top:264.4px;width:36.2px;height:7.5px;background:#173a52;"></div>
<div class="a" style="left:585.7px;top:265.1px;width:3.9px;height:4.0px;background:rgba(255,255,255,.5);border-radius:50%;"></div>
<div class="a" style="left:591.2px;top:265.8px;width:11.8px;height:1.1px;background:rgba(255,255,255,.6);"></div>
<div class="a" style="left:594.3px;top:268.3px;width:3.2px;height:3.2px;background:#d08040;border-radius:50%;"></div>
<div class="a" style="left:597.9px;top:268.3px;width:3.2px;height:3.2px;background:#d08040;border-radius:50%;"></div>
<div class="a" style="left:601.4px;top:268.3px;width:3.2px;height:3.2px;background:#d08040;border-radius:50%;"></div>
<div class="a" style="left:584.9px;top:273.4px;width:36.2px;height:7.5px;background:#173a52;"></div>
<div class="a" style="left:585.7px;top:274.1px;width:3.9px;height:4.0px;background:rgba(255,255,255,.5);border-radius:50%;"></div>
<div class="a" style="left:591.2px;top:274.8px;width:11.8px;height:1.1px;background:rgba(255,255,255,.6);"></div>
<div class="a" style="left:594.3px;top:277.3px;width:3.2px;height:3.2px;background:#d08040;border-radius:50%;"></div>
<div class="a" style="left:597.9px;top:277.3px;width:3.2px;height:3.2px;background:#d08040;border-radius:50%;"></div>
<div class="a" style="left:601.4px;top:277.3px;width:3.2px;height:3.2px;background:#d08040;border-radius:50%;"></div>
<div class="a" style="left:583.3px;top:282.7px;width:39.4px;height:5.3px;background:#0a141b;"></div>
<div class="a" style="left:587.2px;top:284.4px;width:4.7px;height:2.1px;background:rgba(255,255,255,.18);"></div>
<div class="a" style="left:614.0px;top:284.4px;width:4.7px;height:2.1px;background:rgba(255,255,255,.18);"></div>
<div class="a" style="left:601.4px;top:281.3px;width:3.2px;height:5.7px;background:#3aa0f0;border-radius:1px"></div>
<div class="lb" style="left:631.2px;top:208.0px">Leader...tegory</div>
<div class="a" style="left:631.2px;top:217.0px;width:39.6px;height:71.0px;background:linear-gradient(#121a24 0%,#1a1f2c 30%,#9a2c60 32%,#b03a70 55%,#8e2a56 80%,#6a1a3e 100%);overflow:hidden"></div>
<div class="a" style="left:631.2px;top:217.0px;width:39.6px;height:2.1px;background:#0a141b;"></div>
<div class="a" style="left:655.8px;top:217.6px;width:11.9px;height:1.0px;background:rgba(255,255,255,.35);"></div>
<div class="a" style="left:631.2px;top:219.1px;width:39.6px;height:5.7px;background:#0f151d;"></div>
<div class="a" style="left:633.6px;top:221.3px;width:3.6px;height:3.6px;background:rgba(255,255,255,.4);border-radius:50%;"></div>
<div class="a" style="left:643.1px;top:222.0px;width:15.8px;height:1.4px;background:rgba(255,255,255,.6);"></div>
<div class="a" style="left:645.1px;top:226.2px;width:11.9px;height:2.1px;background:#1a3a50;"></div>
<div class="a" style="left:634.4px;top:229.1px;width:6.7px;height:6.8px;background:#c8a080;border-radius:50%;box-shadow:0 0 0 1px #ddd"></div>
<div class="a" style="left:643.1px;top:229.1px;width:6.7px;height:6.8px;background:#c8a080;border-radius:50%;box-shadow:0 0 0 1px #ddd"></div>
<div class="a" style="left:651.8px;top:229.1px;width:6.7px;height:6.8px;background:#c8a080;border-radius:50%;box-shadow:0 0 0 1px #ddd"></div>
<div class="a" style="left:660.5px;top:229.1px;width:6.7px;height:6.8px;background:#c8a080;border-radius:50%;box-shadow:0 0 0 1px #ddd"></div>
<div class="a" style="left:635.2px;top:236.5px;width:4.8px;height:0.9px;background:rgba(255,255,255,.4);"></div>
<div class="a" style="left:643.9px;top:236.5px;width:4.8px;height:0.9px;background:rgba(255,255,255,.4);"></div>
<div class="a" style="left:652.6px;top:236.5px;width:4.8px;height:0.9px;background:rgba(255,255,255,.4);"></div>
<div class="a" style="left:661.3px;top:236.5px;width:4.8px;height:0.9px;background:rgba(255,255,255,.4);"></div>
<div class="a" style="left:631.2px;top:240.4px;width:39.6px;height:0.4px;background:rgba(0,0,0,.18);"></div>
<div class="a" style="left:633.6px;top:243.3px;width:2.0px;height:1.1px;background:rgba(255,255,255,.4);"></div>
<div class="a" style="left:637.1px;top:241.8px;width:4.4px;height:4.4px;background:#2a2a30;border-radius:50%;"></div>
<div class="a" style="left:643.1px;top:242.9px;width:7.9px;height:1.3px;background:rgba(255,255,255,.55);"></div>
<div class="a" style="left:655.8px;top:243.1px;width:3.2px;height:0.9px;background:rgba(255,255,255,.4);"></div>
<div class="a" style="left:662.9px;top:243.1px;width:4.0px;height:1.1px;background:rgba(255,255,255,.5);"></div>
<div class="a" style="left:631.2px;top:246.5px;width:39.6px;height:0.4px;background:rgba(0,0,0,.18);"></div>
<div class="a" style="left:633.6px;top:249.3px;width:2.0px;height:1.1px;background:rgba(255,255,255,.4);"></div>
<div class="a" style="left:637.1px;top:247.9px;width:4.4px;height:4.4px;background:#2a2a30;border-radius:50%;"></div>
<div class="a" style="left:643.1px;top:248.9px;width:7.9px;height:1.3px;background:rgba(255,255,255,.55);"></div>
<div class="a" style="left:655.8px;top:249.2px;width:3.2px;height:0.9px;background:rgba(255,255,255,.4);"></div>
<div class="a" style="left:662.9px;top:249.2px;width:4.0px;height:1.1px;background:rgba(255,255,255,.5);"></div>
<div class="a" style="left:631.2px;top:252.5px;width:39.6px;height:0.4px;background:rgba(0,0,0,.18);"></div>
<div class="a" style="left:633.6px;top:255.3px;width:2.0px;height:1.1px;background:rgba(255,255,255,.4);"></div>
<div class="a" style="left:637.1px;top:253.9px;width:4.4px;height:4.4px;background:#2a2a30;border-radius:50%;"></div>
<div class="a" style="left:643.1px;top:255.0px;width:7.9px;height:1.3px;background:rgba(255,255,255,.55);"></div>
<div class="a" style="left:655.8px;top:255.2px;width:3.2px;height:0.9px;background:rgba(255,255,255,.4);"></div>
<div class="a" style="left:662.9px;top:255.2px;width:4.0px;height:1.1px;background:rgba(255,255,255,.5);"></div>
<div class="a" style="left:631.2px;top:258.5px;width:39.6px;height:0.4px;background:rgba(0,0,0,.18);"></div>
<div class="a" style="left:633.6px;top:261.4px;width:2.0px;height:1.1px;background:rgba(255,255,255,.4);"></div>
<div class="a" style="left:637.1px;top:260.0px;width:4.4px;height:4.4px;background:#2a2a30;border-radius:50%;"></div>
<div class="a" style="left:643.1px;top:261.0px;width:7.9px;height:1.3px;background:rgba(255,255,255,.55);"></div>
<div class="a" style="left:655.8px;top:261.2px;width:3.2px;height:0.9px;background:rgba(255,255,255,.4);"></div>
<div class="a" style="left:662.9px;top:261.2px;width:4.0px;height:1.1px;background:rgba(255,255,255,.5);"></div>
<div class="a" style="left:631.2px;top:264.6px;width:39.6px;height:0.4px;background:rgba(0,0,0,.18);"></div>
<div class="a" style="left:633.6px;top:267.4px;width:2.0px;height:1.1px;background:rgba(255,255,255,.4);"></div>
<div class="a" style="left:637.1px;top:266.0px;width:4.4px;height:4.4px;background:#2a2a30;border-radius:50%;"></div>
<div class="a" style="left:643.1px;top:267.1px;width:7.9px;height:1.3px;background:rgba(255,255,255,.55);"></div>
<div class="a" style="left:655.8px;top:267.3px;width:3.2px;height:0.9px;background:rgba(255,255,255,.4);"></div>
<div class="a" style="left:662.9px;top:267.3px;width:4.0px;height:1.1px;background:rgba(255,255,255,.5);"></div>
<div class="a" style="left:631.2px;top:270.6px;width:39.6px;height:0.4px;background:rgba(0,0,0,.18);"></div>
<div class="a" style="left:633.6px;top:273.4px;width:2.0px;height:1.1px;background:rgba(255,255,255,.4);"></div>
<div class="a" style="left:637.1px;top:272.0px;width:4.4px;height:4.4px;background:#2a2a30;border-radius:50%;"></div>
<div class="a" style="left:643.1px;top:273.1px;width:7.9px;height:1.3px;background:rgba(255,255,255,.55);"></div>
<div class="a" style="left:655.8px;top:273.3px;width:3.2px;height:0.9px;background:rgba(255,255,255,.4);"></div>
<div class="a" style="left:662.9px;top:273.3px;width:4.0px;height:1.1px;background:rgba(255,255,255,.5);"></div>
<div class="a" style="left:631.2px;top:276.6px;width:39.6px;height:0.4px;background:rgba(0,0,0,.18);"></div>
<div class="a" style="left:633.6px;top:279.5px;width:2.0px;height:1.1px;background:rgba(255,255,255,.4);"></div>
<div class="a" style="left:637.1px;top:278.1px;width:4.4px;height:4.4px;background:#2a2a30;border-radius:50%;"></div>
<div class="a" style="left:643.1px;top:279.1px;width:7.9px;height:1.3px;background:rgba(255,255,255,.55);"></div>
<div class="a" style="left:655.8px;top:279.3px;width:3.2px;height:0.9px;background:rgba(255,255,255,.4);"></div>
<div class="a" style="left:662.9px;top:279.3px;width:4.0px;height:1.1px;background:rgba(255,255,255,.5);"></div>
<div class="lb" style="left:680px;top:208.0px">Leader...ry (All)</div>
<div class="a" style="left:680.0px;top:217.0px;width:39.6px;height:71.0px;background:linear-gradient(#121a24 0%,#1a1f2c 30%,#9a2c60 32%,#b03a70 55%,#8e2a56 80%,#6a1a3e 100%);overflow:hidden"></div>
<div class="a" style="left:680.0px;top:217.0px;width:39.6px;height:2.1px;background:#0a141b;"></div>
<div class="a" style="left:704.6px;top:217.6px;width:11.9px;height:1.0px;background:rgba(255,255,255,.35);"></div>
<div class="a" style="left:680.0px;top:219.1px;width:39.6px;height:5.7px;background:#0f151d;"></div>
<div class="a" style="left:682.4px;top:221.3px;width:3.6px;height:3.6px;background:rgba(255,255,255,.4);border-radius:50%;"></div>
<div class="a" style="left:691.9px;top:222.0px;width:15.8px;height:1.4px;background:rgba(255,255,255,.6);"></div>
<div class="a" style="left:693.9px;top:226.2px;width:11.9px;height:2.1px;background:#1a3a50;"></div>
<div class="a" style="left:683.2px;top:229.1px;width:6.7px;height:6.8px;background:#c8a080;border-radius:50%;box-shadow:0 0 0 1px #ddd"></div>
<div class="a" style="left:691.9px;top:229.1px;width:6.7px;height:6.8px;background:#c8a080;border-radius:50%;box-shadow:0 0 0 1px #ddd"></div>
<div class="a" style="left:700.6px;top:229.1px;width:6.7px;height:6.8px;background:#c8a080;border-radius:50%;box-shadow:0 0 0 1px #ddd"></div>
<div class="a" style="left:709.3px;top:229.1px;width:6.7px;height:6.8px;background:#c8a080;border-radius:50%;box-shadow:0 0 0 1px #ddd"></div>
<div class="a" style="left:684.0px;top:236.5px;width:4.8px;height:0.9px;background:rgba(255,255,255,.4);"></div>
<div class="a" style="left:692.7px;top:236.5px;width:4.8px;height:0.9px;background:rgba(255,255,255,.4);"></div>
<div class="a" style="left:701.4px;top:236.5px;width:4.8px;height:0.9px;background:rgba(255,255,255,.4);"></div>
<div class="a" style="left:710.1px;top:236.5px;width:4.8px;height:0.9px;background:rgba(255,255,255,.4);"></div>
<div class="a" style="left:680.0px;top:240.4px;width:39.6px;height:0.4px;background:rgba(0,0,0,.18);"></div>
<div class="a" style="left:682.4px;top:243.3px;width:2.0px;height:1.1px;background:rgba(255,255,255,.4);"></div>
<div class="a" style="left:685.9px;top:241.8px;width:4.4px;height:4.4px;background:#2a2a30;border-radius:50%;"></div>
<div class="a" style="left:691.9px;top:242.9px;width:7.9px;height:1.3px;background:rgba(255,255,255,.55);"></div>
<div class="a" style="left:704.6px;top:243.1px;width:3.2px;height:0.9px;background:rgba(255,255,255,.4);"></div>
<div class="a" style="left:711.7px;top:243.1px;width:4.0px;height:1.1px;background:rgba(255,255,255,.5);"></div>
<div class="a" style="left:680.0px;top:246.5px;width:39.6px;height:0.4px;background:rgba(0,0,0,.18);"></div>
<div class="a" style="left:682.4px;top:249.3px;width:2.0px;height:1.1px;background:rgba(255,255,255,.4);"></div>
<div class="a" style="left:685.9px;top:247.9px;width:4.4px;height:4.4px;background:#2a2a30;border-radius:50%;"></div>
<div class="a" style="left:691.9px;top:248.9px;width:7.9px;height:1.3px;background:rgba(255,255,255,.55);"></div>
<div class="a" style="left:704.6px;top:249.2px;width:3.2px;height:0.9px;background:rgba(255,255,255,.4);"></div>
<div class="a" style="left:711.7px;top:249.2px;width:4.0px;height:1.1px;background:rgba(255,255,255,.5);"></div>
<div class="a" style="left:680.0px;top:252.5px;width:39.6px;height:0.4px;background:rgba(0,0,0,.18);"></div>
<div class="a" style="left:682.4px;top:255.3px;width:2.0px;height:1.1px;background:rgba(255,255,255,.4);"></div>
<div class="a" style="left:685.9px;top:253.9px;width:4.4px;height:4.4px;background:#2a2a30;border-radius:50%;"></div>
<div class="a" style="left:691.9px;top:255.0px;width:7.9px;height:1.3px;background:rgba(255,255,255,.55);"></div>
<div class="a" style="left:704.6px;top:255.2px;width:3.2px;height:0.9px;background:rgba(255,255,255,.4);"></div>
<div class="a" style="left:711.7px;top:255.2px;width:4.0px;height:1.1px;background:rgba(255,255,255,.5);"></div>
<div class="a" style="left:680.0px;top:258.5px;width:39.6px;height:0.4px;background:rgba(0,0,0,.18);"></div>
<div class="a" style="left:682.4px;top:261.4px;width:2.0px;height:1.1px;background:rgba(255,255,255,.4);"></div>
<div class="a" style="left:685.9px;top:260.0px;width:4.4px;height:4.4px;background:#2a2a30;border-radius:50%;"></div>
<div class="a" style="left:691.9px;top:261.0px;width:7.9px;height:1.3px;background:rgba(255,255,255,.55);"></div>
<div class="a" style="left:704.6px;top:261.2px;width:3.2px;height:0.9px;background:rgba(255,255,255,.4);"></div>
<div class="a" style="left:711.7px;top:261.2px;width:4.0px;height:1.1px;background:rgba(255,255,255,.5);"></div>
<div class="a" style="left:680.0px;top:264.6px;width:39.6px;height:0.4px;background:rgba(0,0,0,.18);"></div>
<div class="a" style="left:682.4px;top:267.4px;width:2.0px;height:1.1px;background:rgba(255,255,255,.4);"></div>
<div class="a" style="left:685.9px;top:266.0px;width:4.4px;height:4.4px;background:#2a2a30;border-radius:50%;"></div>
<div class="a" style="left:691.9px;top:267.1px;width:7.9px;height:1.3px;background:rgba(255,255,255,.55);"></div>
<div class="a" style="left:704.6px;top:267.3px;width:3.2px;height:0.9px;background:rgba(255,255,255,.4);"></div>
<div class="a" style="left:711.7px;top:267.3px;width:4.0px;height:1.1px;background:rgba(255,255,255,.5);"></div>
<div class="a" style="left:680.0px;top:270.6px;width:39.6px;height:0.4px;background:rgba(0,0,0,.18);"></div>
<div class="a" style="left:682.4px;top:273.4px;width:2.0px;height:1.1px;background:rgba(255,255,255,.4);"></div>
<div class="a" style="left:685.9px;top:272.0px;width:4.4px;height:4.4px;background:#2a2a30;border-radius:50%;"></div>
<div class="a" style="left:691.9px;top:273.1px;width:7.9px;height:1.3px;background:rgba(255,255,255,.55);"></div>
<div class="a" style="left:704.6px;top:273.3px;width:3.2px;height:0.9px;background:rgba(255,255,255,.4);"></div>
<div class="a" style="left:711.7px;top:273.3px;width:4.0px;height:1.1px;background:rgba(255,255,255,.5);"></div>
<div class="a" style="left:680.0px;top:276.6px;width:39.6px;height:0.4px;background:rgba(0,0,0,.18);"></div>
<div class="a" style="left:682.4px;top:279.5px;width:2.0px;height:1.1px;background:rgba(255,255,255,.4);"></div>
<div class="a" style="left:685.9px;top:278.1px;width:4.4px;height:4.4px;background:#2a2a30;border-radius:50%;"></div>
<div class="a" style="left:691.9px;top:279.1px;width:7.9px;height:1.3px;background:rgba(255,255,255,.55);"></div>
<div class="a" style="left:704.6px;top:279.3px;width:3.2px;height:0.9px;background:rgba(255,255,255,.4);"></div>
<div class="a" style="left:711.7px;top:279.3px;width:4.0px;height:1.1px;background:rgba(255,255,255,.5);"></div>
<div class="lb" style="left:728.2px;top:208.0px">Gener...Popup</div>
<div class="a" style="left:728.2px;top:217.0px;width:39.8px;height:71.0px;background:#06090c;overflow:hidden"></div>
<div class="a" style="left:728.2px;top:217.0px;width:39.8px;height:2.1px;background:#0a141b;"></div>
<div class="a" style="left:752.9px;top:217.6px;width:11.9px;height:1.0px;background:rgba(255,255,255,.35);"></div>
<div class="a" style="left:728.2px;top:219.1px;width:39.8px;height:5.7px;background:#0b1016;"></div>
<div class="a" style="left:740.1px;top:221.6px;width:15.9px;height:1.4px;background:rgba(255,255,255,.6);"></div>
<div class="a" style="left:740.1px;top:234.8px;width:15.9px;height:1.4px;background:rgba(255,255,255,.5);"></div>
<div class="a" style="left:735.4px;top:239.0px;width:25.5px;height:19.2px;background:linear-gradient(135deg,#a88870 0%,#c0a080 30%,#2a5aa0 55%,#d08050 80%,#a07050);box-shadow:0 0 0 1px #ddd"></div>
<div class="a" style="left:743.3px;top:271.7px;width:9.6px;height:9.6px;background:#f4f6f8;border-radius:50%;"></div>
<div class="a" style="left:746.5px;top:273.8px;width:3.2px;height:3.2px;background:#3aa0f0;border-radius:50%;"></div>
<div class="lb" style="left:525.1px;top:294.0px">Activity Feed</div>
<div class="a" style="left:525.1px;top:303.0px;width:39.9px;height:71.0px;background:linear-gradient(#9a9a9a 0%,#4a4a4a 7%,#3a3a3a 50%,#444 92%,#9a9a9a 100%);overflow:hidden"></div>
<div class="a" style="left:527.5px;top:307.3px;width:35.1px;height:3.2px;background:#c8c8c8;border-radius:3px"></div>
<div class="a" style="left:529.1px;top:308.0px;width:10.0px;height:1.8px;background:#666;"></div>
<div class="a" style="left:553.0px;top:308.0px;width:8.0px;height:1.8px;background:#888;"></div>
<div class="a" style="left:525.1px;top:312.9px;width:39.9px;height:7.1px;background:#505050;"></div>
<div class="a" style="left:527.5px;top:314.4px;width:4.4px;height:4.3px;background:#e8e8e8;"></div>
<div class="a" style="left:533.9px;top:314.4px;width:23.9px;height:1.1px;background:rgba(255,255,255,.5);"></div>
<div class="a" style="left:533.9px;top:316.5px;width:16.0px;height:0.9px;background:rgba(255,255,255,.35);"></div>
<div class="a" style="left:547.0px;top:317.6px;width:2.8px;height:2.8px;background:#ddd;border-radius:50%;"></div>
<div class="a" style="left:550.6px;top:317.6px;width:2.8px;height:2.8px;background:#ddd;border-radius:50%;"></div>
<div class="a" style="left:554.2px;top:317.6px;width:2.8px;height:2.8px;background:#ddd;border-radius:50%;"></div>
<div class="a" style="left:557.8px;top:317.6px;width:2.8px;height:2.8px;background:#ddd;border-radius:50%;"></div>
<div class="a" style="left:525.1px;top:321.0px;width:39.9px;height:7.1px;background:#3e3e3e;"></div>
<div class="a" style="left:527.5px;top:322.4px;width:4.4px;height:4.3px;background:#e8e8e8;"></div>
<div class="a" style="left:533.9px;top:322.4px;width:23.9px;height:1.1px;background:rgba(255,255,255,.5);"></div>
<div class="a" style="left:533.9px;top:324.5px;width:16.0px;height:0.9px;background:rgba(255,255,255,.35);"></div>
<div class="a" style="left:547.0px;top:325.6px;width:2.8px;height:2.8px;background:#ddd;border-radius:50%;"></div>
<div class="a" style="left:550.6px;top:325.6px;width:2.8px;height:2.8px;background:#ddd;border-radius:50%;"></div>
<div class="a" style="left:554.2px;top:325.6px;width:2.8px;height:2.8px;background:#ddd;border-radius:50%;"></div>
<div class="a" style="left:557.8px;top:325.6px;width:2.8px;height:2.8px;background:#ddd;border-radius:50%;"></div>
<div class="a" style="left:525.1px;top:329.0px;width:39.9px;height:7.1px;background:#505050;"></div>
<div class="a" style="left:527.5px;top:330.4px;width:4.4px;height:4.3px;background:#e8e8e8;"></div>
<div class="a" style="left:533.9px;top:330.4px;width:23.9px;height:1.1px;background:rgba(255,255,255,.5);"></div>
<div class="a" style="left:533.9px;top:332.5px;width:16.0px;height:0.9px;background:rgba(255,255,255,.35);"></div>
<div class="a" style="left:547.0px;top:333.6px;width:2.8px;height:2.8px;background:#ddd;border-radius:50%;"></div>
<div class="a" style="left:550.6px;top:333.6px;width:2.8px;height:2.8px;background:#ddd;border-radius:50%;"></div>
<div class="a" style="left:554.2px;top:333.6px;width:2.8px;height:2.8px;background:#ddd;border-radius:50%;"></div>
<div class="a" style="left:557.8px;top:333.6px;width:2.8px;height:2.8px;background:#ddd;border-radius:50%;"></div>
<div class="a" style="left:525.1px;top:337.0px;width:39.9px;height:7.1px;background:#3e3e3e;"></div>
<div class="a" style="left:527.5px;top:338.4px;width:4.4px;height:4.3px;background:#e8e8e8;"></div>
<div class="a" style="left:533.9px;top:338.4px;width:23.9px;height:1.1px;background:rgba(255,255,255,.5);"></div>
<div class="a" style="left:533.9px;top:340.6px;width:16.0px;height:0.9px;background:rgba(255,255,255,.35);"></div>
<div class="a" style="left:547.0px;top:341.6px;width:2.8px;height:2.8px;background:#ddd;border-radius:50%;"></div>
<div class="a" style="left:550.6px;top:341.6px;width:2.8px;height:2.8px;background:#ddd;border-radius:50%;"></div>
<div class="a" style="left:554.2px;top:341.6px;width:2.8px;height:2.8px;background:#ddd;border-radius:50%;"></div>
<div class="a" style="left:557.8px;top:341.6px;width:2.8px;height:2.8px;background:#ddd;border-radius:50%;"></div>
<div class="a" style="left:525.1px;top:345.0px;width:39.9px;height:7.1px;background:#505050;"></div>
<div class="a" style="left:527.5px;top:346.5px;width:4.4px;height:4.3px;background:#e8e8e8;"></div>
<div class="a" style="left:533.9px;top:346.5px;width:23.9px;height:1.1px;background:rgba(255,255,255,.5);"></div>
<div class="a" style="left:533.9px;top:348.6px;width:16.0px;height:0.9px;background:rgba(255,255,255,.35);"></div>
<div class="a" style="left:547.0px;top:349.6px;width:2.8px;height:2.8px;background:#ddd;border-radius:50%;"></div>
<div class="a" style="left:550.6px;top:349.6px;width:2.8px;height:2.8px;background:#ddd;border-radius:50%;"></div>
<div class="a" style="left:554.2px;top:349.6px;width:2.8px;height:2.8px;background:#ddd;border-radius:50%;"></div>
<div class="a" style="left:557.8px;top:349.6px;width:2.8px;height:2.8px;background:#ddd;border-radius:50%;"></div>
<div class="a" style="left:525.1px;top:353.1px;width:39.9px;height:7.1px;background:#3e3e3e;"></div>
<div class="a" style="left:527.5px;top:354.5px;width:4.4px;height:4.3px;background:#e8e8e8;"></div>
<div class="a" style="left:533.9px;top:354.5px;width:23.9px;height:1.1px;background:rgba(255,255,255,.5);"></div>
<div class="a" style="left:533.9px;top:356.6px;width:16.0px;height:0.9px;background:rgba(255,255,255,.35);"></div>
<div class="a" style="left:547.0px;top:357.7px;width:2.8px;height:2.8px;background:#ddd;border-radius:50%;"></div>
<div class="a" style="left:550.6px;top:357.7px;width:2.8px;height:2.8px;background:#ddd;border-radius:50%;"></div>
<div class="a" style="left:554.2px;top:357.7px;width:2.8px;height:2.8px;background:#ddd;border-radius:50%;"></div>
<div class="a" style="left:557.8px;top:357.7px;width:2.8px;height:2.8px;background:#ddd;border-radius:50%;"></div>
<div class="a" style="left:525.1px;top:361.1px;width:39.9px;height:7.1px;background:#505050;"></div>
<div class="a" style="left:527.5px;top:362.5px;width:4.4px;height:4.3px;background:#e8e8e8;"></div>
<div class="a" style="left:533.9px;top:362.5px;width:23.9px;height:1.1px;background:rgba(255,255,255,.5);"></div>
<div class="a" style="left:533.9px;top:364.6px;width:16.0px;height:0.9px;background:rgba(255,255,255,.35);"></div>
<div class="a" style="left:547.0px;top:365.7px;width:2.8px;height:2.8px;background:#ddd;border-radius:50%;"></div>
<div class="a" style="left:550.6px;top:365.7px;width:2.8px;height:2.8px;background:#ddd;border-radius:50%;"></div>
<div class="a" style="left:554.2px;top:365.7px;width:2.8px;height:2.8px;background:#ddd;border-radius:50%;"></div>
<div class="a" style="left:557.8px;top:365.7px;width:2.8px;height:2.8px;background:#ddd;border-radius:50%;"></div>
<div class="a" style="left:525.1px;top:369.7px;width:39.9px;height:4.3px;background:#9a9a9a;"></div>
<div class="lb" style="left:583.3px;top:294.0px">Activity List</div>
<div class="a" style="left:583.3px;top:303.0px;width:39.4px;height:71.0px;background:linear-gradient(#0a141b 0%,#10283a 14%,#1a4058 38%,#2b6384 58%,#1d4560 80%,#0c1a24 100%);overflow:hidden"></div>
<div class="a" style="left:583.3px;top:303.0px;width:39.4px;height:2.1px;background:#0a141b;"></div>
<div class="a" style="left:607.7px;top:303.6px;width:11.8px;height:1.0px;background:rgba(255,255,255,.35);"></div>
<div class="a" style="left:583.3px;top:305.1px;width:39.4px;height:6.0px;background:#10283a;"></div>
<div class="a" style="left:586.1px;top:306.9px;width:2.8px;height:2.5px;background:#e0602a;border-radius:50%"></div>
<div class="a" style="left:592.0px;top:307.6px;width:12.6px;height:1.3px;background:rgba(255,255,255,.45);"></div>
<div class="a" style="left:583.3px;top:311.2px;width:39.4px;height:4.3px;background:#0f2534;"></div>
<div class="a" style="left:597.5px;top:312.6px;width:11.0px;height:1.1px;background:rgba(255,255,255,.5);"></div>
<div class="a" style="left:600.6px;top:317.2px;width:4.7px;height:4.3px;background:transparent;border:1px solid #ddd;border-radius:50%"></div>
<div class="a" style="left:583.3px;top:322.9px;width:39.4px;height:7.8px;background:#1ed760;"></div>
<div class="a" style="left:589.2px;top:324.3px;width:23.6px;height:1.1px;background:rgba(255,255,255,.7);"></div>
<div class="a" style="left:583.3px;top:331.4px;width:39.4px;height:7.8px;background:#e8124a;"></div>
<div class="a" style="left:589.2px;top:332.8px;width:23.6px;height:1.1px;background:rgba(255,255,255,.7);"></div>
<div class="a" style="left:583.3px;top:339.9px;width:39.4px;height:6.4px;background:#173a50;"></div>
<div class="a" style="left:589.2px;top:341.0px;width:23.6px;height:1.1px;background:rgba(255,255,255,.45);"></div>
<div class="a" style="left:589.2px;top:343.1px;width:2.8px;height:2.8px;background:#d08040;border-radius:50%;"></div>
<div class="a" style="left:592.8px;top:343.1px;width:2.8px;height:2.8px;background:#d08040;border-radius:50%;"></div>
<div class="a" style="left:583.3px;top:347.0px;width:39.4px;height:6.4px;background:#173a50;"></div>
<div class="a" style="left:589.2px;top:348.1px;width:23.6px;height:1.1px;background:rgba(255,255,255,.45);"></div>
<div class="a" style="left:589.2px;top:350.2px;width:2.8px;height:2.8px;background:#d08040;border-radius:50%;"></div>
<div class="a" style="left:592.8px;top:350.2px;width:2.8px;height:2.8px;background:#d08040;border-radius:50%;"></div>
<div class="a" style="left:583.3px;top:354.1px;width:39.4px;height:6.4px;background:#173a50;"></div>
<div class="a" style="left:589.2px;top:355.2px;width:23.6px;height:1.1px;background:rgba(255,255,255,.45);"></div>
<div class="a" style="left:589.2px;top:357.3px;width:2.8px;height:2.8px;background:#d08040;border-radius:50%;"></div>
<div class="a" style="left:592.8px;top:357.3px;width:2.8px;height:2.8px;background:#d08040;border-radius:50%;"></div>
<div class="a" style="left:583.3px;top:361.2px;width:39.4px;height:6.4px;background:#173a50;"></div>
<div class="a" style="left:589.2px;top:362.3px;width:23.6px;height:1.1px;background:rgba(255,255,255,.45);"></div>
<div class="a" style="left:589.2px;top:364.4px;width:2.8px;height:2.8px;background:#d08040;border-radius:50%;"></div>
<div class="a" style="left:592.8px;top:364.4px;width:2.8px;height:2.8px;background:#d08040;border-radius:50%;"></div>
<div class="a" style="left:583.3px;top:368.7px;width:39.4px;height:5.3px;background:#0a141b;"></div>
<div class="a" style="left:587.2px;top:370.4px;width:4.7px;height:2.1px;background:rgba(255,255,255,.18);"></div>
<div class="a" style="left:614.0px;top:370.4px;width:4.7px;height:2.1px;background:rgba(255,255,255,.18);"></div>
<div class="a" style="left:601.4px;top:367.3px;width:3.2px;height:5.7px;background:#3aa0f0;border-radius:1px"></div>
<div class="lb" style="left:631.2px;top:294.0px">Activit...orrect)</div>
<div class="a" style="left:631.2px;top:303.0px;width:39.5px;height:71.0px;background:#06090c;overflow:hidden"></div>
<div class="a" style="left:631.2px;top:303.0px;width:39.5px;height:2.1px;background:#0a141b;"></div>
<div class="a" style="left:655.7px;top:303.6px;width:11.8px;height:1.0px;background:rgba(255,255,255,.35);"></div>
<div class="a" style="left:631.2px;top:305.1px;width:39.5px;height:6.4px;background:#0e1c26;"></div>
<div class="a" style="left:633.2px;top:307.3px;width:2.4px;height:2.1px;background:rgba(255,255,255,.5);"></div>
<div class="a" style="left:645.0px;top:307.6px;width:11.8px;height:1.1px;background:rgba(255,255,255,.55);"></div>
<div class="a" style="left:637.1px;top:314.0px;width:27.6px;height:1.2px;background:rgba(255,255,255,0.6);"></div>
<div class="a" style="left:639.9px;top:316.0px;width:22.1px;height:1.2px;background:rgba(255,255,255,0.6);"></div>
<div class="a" style="left:632.4px;top:319.0px;width:37.1px;height:5.3px;background:#1ed760;"></div>
<div class="a" style="left:634.4px;top:321.1px;width:7.9px;height:1.0px;background:rgba(255,255,255,.55);"></div>
<div class="a" style="left:651.7px;top:320.3px;width:3.2px;height:3.2px;background:#d09050;border-radius:50%;"></div>
<div class="a" style="left:655.3px;top:320.3px;width:3.2px;height:3.2px;background:#d09050;border-radius:50%;"></div>
<div class="a" style="left:658.9px;top:320.3px;width:3.2px;height:3.2px;background:#d09050;border-radius:50%;"></div>
<div class="a" style="left:662.4px;top:320.3px;width:3.2px;height:3.2px;background:#2a70a0;border-radius:50%;"></div>
<div class="a" style="left:666.0px;top:320.0px;width:3.6px;height:3.6px;background:#fff;border-radius:50%;"></div>
<div class="a" style="left:632.4px;top:325.0px;width:37.1px;height:5.3px;background:#152e40;"></div>
<div class="a" style="left:634.4px;top:327.1px;width:7.9px;height:1.0px;background:rgba(255,255,255,.55);"></div>
<div class="a" style="left:651.7px;top:326.3px;width:3.2px;height:3.2px;background:#d09050;border-radius:50%;"></div>
<div class="a" style="left:655.3px;top:326.3px;width:3.2px;height:3.2px;background:#d09050;border-radius:50%;"></div>
<div class="a" style="left:658.9px;top:326.3px;width:3.2px;height:3.2px;background:#d09050;border-radius:50%;"></div>
<div class="a" style="left:662.4px;top:326.3px;width:3.2px;height:3.2px;background:#2a70a0;border-radius:50%;"></div>
<div class="a" style="left:666.0px;top:326.1px;width:3.6px;height:3.6px;background:#2a70a0;border-radius:50%;"></div>
<div class="a" style="left:632.4px;top:331.0px;width:37.1px;height:5.3px;background:#152e40;"></div>
<div class="a" style="left:634.4px;top:333.2px;width:7.9px;height:1.0px;background:rgba(255,255,255,.55);"></div>
<div class="a" style="left:651.7px;top:332.3px;width:3.2px;height:3.2px;background:#d09050;border-radius:50%;"></div>
<div class="a" style="left:655.3px;top:332.3px;width:3.2px;height:3.2px;background:#d09050;border-radius:50%;"></div>
<div class="a" style="left:658.9px;top:332.3px;width:3.2px;height:3.2px;background:#d09050;border-radius:50%;"></div>
<div class="a" style="left:662.4px;top:332.3px;width:3.2px;height:3.2px;background:#2a70a0;border-radius:50%;"></div>
<div class="a" style="left:666.0px;top:332.1px;width:3.6px;height:3.6px;background:#2a70a0;border-radius:50%;"></div>
<div class="a" style="left:632.4px;top:337.1px;width:37.1px;height:5.3px;background:#152e40;"></div>
<div class="a" style="left:634.4px;top:339.2px;width:7.9px;height:1.0px;background:rgba(255,255,255,.55);"></div>
<div class="a" style="left:659.6px;top:338.4px;width:3.2px;height:3.2px;background:#f0f0f0;border-radius:50%;"></div>
<div class="a" style="left:663.6px;top:338.4px;width:3.2px;height:3.2px;background:#c09070;border-radius:50%;"></div>
<div class="a" style="left:632.4px;top:343.1px;width:37.1px;height:5.3px;background:#152e40;"></div>
<div class="a" style="left:634.4px;top:345.2px;width:7.9px;height:1.0px;background:rgba(255,255,255,.55);"></div>
<div class="a" style="left:641.1px;top:354.8px;width:19.8px;height:1.6px;background:rgba(255,255,255,.55);"></div>
<div class="a" style="left:643.8px;top:358.0px;width:14.2px;height:0.9px;background:rgba(255,255,255,.3);"></div>
<div class="a" style="left:633.6px;top:359.8px;width:34.8px;height:7.8px;background:#0b1218;"></div>
<div class="a" style="left:634.8px;top:360.9px;width:5.5px;height:5.6px;background:#f2c21a;border-radius:50%;"></div>
<div class="a" style="left:641.3px;top:360.9px;width:5.5px;height:5.6px;background:#f2c21a;border-radius:50%;"></div>
<div class="a" style="left:647.8px;top:360.9px;width:5.5px;height:5.6px;background:#f2c21a;border-radius:50%;"></div>
<div class="a" style="left:654.3px;top:360.9px;width:5.5px;height:5.6px;background:#f2c21a;border-radius:50%;"></div>
<div class="a" style="left:660.8px;top:360.9px;width:5.5px;height:5.6px;background:#1ec46b;border-radius:50%;"></div>
<div class="lb" style="left:680px;top:294.0px">Activit...orrect)</div>
<div class="a" style="left:680.0px;top:303.0px;width:39.6px;height:71.0px;background:#06090c;overflow:hidden"></div>
<div class="a" style="left:680.0px;top:303.0px;width:39.6px;height:2.1px;background:#0a141b;"></div>
<div class="a" style="left:704.6px;top:303.6px;width:11.9px;height:1.0px;background:rgba(255,255,255,.35);"></div>
<div class="a" style="left:680.0px;top:305.1px;width:39.6px;height:6.4px;background:#0e1c26;"></div>
<div class="a" style="left:682.0px;top:307.3px;width:2.4px;height:2.1px;background:rgba(255,255,255,.5);"></div>
<div class="a" style="left:693.9px;top:307.6px;width:11.9px;height:1.1px;background:rgba(255,255,255,.55);"></div>
<div class="a" style="left:685.9px;top:314.0px;width:27.7px;height:1.2px;background:rgba(255,255,255,0.6);"></div>
<div class="a" style="left:688.7px;top:316.0px;width:22.2px;height:1.2px;background:rgba(255,255,255,0.6);"></div>
<div class="a" style="left:681.2px;top:319.0px;width:37.2px;height:5.3px;background:#152e40;"></div>
<div class="a" style="left:683.2px;top:321.1px;width:7.9px;height:1.0px;background:rgba(255,255,255,.55);"></div>
<div class="a" style="left:700.6px;top:320.3px;width:3.2px;height:3.2px;background:#d09050;border-radius:50%;"></div>
<div class="a" style="left:704.2px;top:320.3px;width:3.2px;height:3.2px;background:#d09050;border-radius:50%;"></div>
<div class="a" style="left:707.7px;top:320.3px;width:3.2px;height:3.2px;background:#d09050;border-radius:50%;"></div>
<div class="a" style="left:711.3px;top:320.3px;width:3.2px;height:3.2px;background:#2a70a0;border-radius:50%;"></div>
<div class="a" style="left:714.8px;top:320.0px;width:3.6px;height:3.6px;background:#2a70a0;border-radius:50%;"></div>
<div class="a" style="left:681.2px;top:325.0px;width:37.2px;height:5.3px;background:#e8124a;"></div>
<div class="a" style="left:683.2px;top:327.1px;width:7.9px;height:1.0px;background:rgba(255,255,255,.55);"></div>
<div class="a" style="left:700.6px;top:326.3px;width:3.2px;height:3.2px;background:#d09050;border-radius:50%;"></div>
<div class="a" style="left:704.2px;top:326.3px;width:3.2px;height:3.2px;background:#d09050;border-radius:50%;"></div>
<div class="a" style="left:707.7px;top:326.3px;width:3.2px;height:3.2px;background:#d09050;border-radius:50%;"></div>
<div class="a" style="left:711.3px;top:326.3px;width:3.2px;height:3.2px;background:#2a70a0;border-radius:50%;"></div>
<div class="a" style="left:714.8px;top:326.1px;width:3.6px;height:3.6px;background:#fff;border-radius:50%;"></div>
<div class="a" style="left:681.2px;top:331.0px;width:37.2px;height:5.3px;background:#152e40;"></div>
<div class="a" style="left:683.2px;top:333.2px;width:7.9px;height:1.0px;background:rgba(255,255,255,.55);"></div>
<div class="a" style="left:700.6px;top:332.3px;width:3.2px;height:3.2px;background:#d09050;border-radius:50%;"></div>
<div class="a" style="left:704.2px;top:332.3px;width:3.2px;height:3.2px;background:#d09050;border-radius:50%;"></div>
<div class="a" style="left:707.7px;top:332.3px;width:3.2px;height:3.2px;background:#d09050;border-radius:50%;"></div>
<div class="a" style="left:711.3px;top:332.3px;width:3.2px;height:3.2px;background:#2a70a0;border-radius:50%;"></div>
<div class="a" style="left:714.8px;top:332.1px;width:3.6px;height:3.6px;background:#2a70a0;border-radius:50%;"></div>
<div class="a" style="left:681.2px;top:337.1px;width:37.2px;height:5.3px;background:#152e40;"></div>
<div class="a" style="left:683.2px;top:339.2px;width:7.9px;height:1.0px;background:rgba(255,255,255,.55);"></div>
<div class="a" style="left:708.5px;top:338.4px;width:3.2px;height:3.2px;background:#f0f0f0;border-radius:50%;"></div>
<div class="a" style="left:712.5px;top:338.4px;width:3.2px;height:3.2px;background:#c09070;border-radius:50%;"></div>
<div class="a" style="left:681.2px;top:343.1px;width:37.2px;height:5.3px;background:#152e40;"></div>
<div class="a" style="left:683.2px;top:345.2px;width:7.9px;height:1.0px;background:rgba(255,255,255,.55);"></div>
<div class="a" style="left:689.9px;top:354.8px;width:19.8px;height:1.6px;background:rgba(255,255,255,.55);"></div>
<div class="a" style="left:692.7px;top:358.0px;width:14.3px;height:0.9px;background:rgba(255,255,255,.3);"></div>
<div class="a" style="left:682.4px;top:359.8px;width:34.8px;height:7.8px;background:#0b1218;"></div>
<div class="a" style="left:683.6px;top:360.9px;width:5.5px;height:5.6px;background:#f2c21a;border-radius:50%;"></div>
<div class="a" style="left:690.1px;top:360.9px;width:5.5px;height:5.6px;background:#f2c21a;border-radius:50%;"></div>
<div class="a" style="left:696.6px;top:360.9px;width:5.5px;height:5.6px;background:#f2c21a;border-radius:50%;"></div>
<div class="a" style="left:703.2px;top:360.9px;width:5.5px;height:5.6px;background:#f2c21a;border-radius:50%;"></div>
<div class="a" style="left:709.7px;top:360.9px;width:5.5px;height:5.6px;background:#1ec46b;border-radius:50%;"></div>
<div class="lb" style="left:728.2px;top:294.0px">Activit...(Open)</div>
<div class="a" style="left:728.2px;top:303.0px;width:39.8px;height:71.0px;background:#06090c;overflow:hidden"></div>
<div class="a" style="left:728.2px;top:303.0px;width:39.8px;height:2.1px;background:#0a141b;"></div>
<div class="a" style="left:752.9px;top:303.6px;width:11.9px;height:1.0px;background:rgba(255,255,255,.35);"></div>
<div class="a" style="left:728.2px;top:305.1px;width:39.8px;height:6.4px;background:#0e1c26;"></div>
<div class="a" style="left:742.1px;top:307.6px;width:11.9px;height:1.1px;background:rgba(255,255,255,.55);"></div>
<div class="a" style="left:734.2px;top:312.9px;width:27.9px;height:1.2px;background:rgba(255,255,255,0.6);"></div>
<div class="a" style="left:737.0px;top:314.9px;width:22.3px;height:1.2px;background:rgba(255,255,255,0.6);"></div>
<div class="a" style="left:734.2px;top:316.5px;width:27.9px;height:1.2px;background:rgba(255,255,255,0.5);"></div>
<div class="a" style="left:737.0px;top:318.5px;width:22.3px;height:1.2px;background:rgba(255,255,255,0.5);"></div>
<div class="a" style="left:729.4px;top:320.0px;width:37.4px;height:5.3px;background:#152e40;"></div>
<div class="a" style="left:731.4px;top:322.2px;width:8.0px;height:1.0px;background:rgba(255,255,255,.55);"></div>
<div class="a" style="left:752.1px;top:321.3px;width:3.2px;height:3.2px;background:#d09050;border-radius:50%;"></div>
<div class="a" style="left:755.7px;top:321.3px;width:3.2px;height:3.2px;background:#d09050;border-radius:50%;"></div>
<div class="a" style="left:759.2px;top:321.3px;width:3.2px;height:3.2px;background:#d09050;border-radius:50%;"></div>
<div class="a" style="left:763.2px;top:321.3px;width:3.2px;height:3.2px;background:#2a70a0;border-radius:50%;"></div>
<div class="a" style="left:729.4px;top:326.1px;width:37.4px;height:5.3px;background:#152e40;"></div>
<div class="a" style="left:731.4px;top:328.2px;width:8.0px;height:1.0px;background:rgba(255,255,255,.55);"></div>
<div class="a" style="left:752.1px;top:327.4px;width:3.2px;height:3.2px;background:#d09050;border-radius:50%;"></div>
<div class="a" style="left:755.7px;top:327.4px;width:3.2px;height:3.2px;background:#d09050;border-radius:50%;"></div>
<div class="a" style="left:759.2px;top:327.4px;width:3.2px;height:3.2px;background:#d09050;border-radius:50%;"></div>
<div class="a" style="left:763.2px;top:327.4px;width:3.2px;height:3.2px;background:#2a70a0;border-radius:50%;"></div>
<div class="a" style="left:729.4px;top:332.1px;width:37.4px;height:5.3px;background:#152e40;"></div>
<div class="a" style="left:731.4px;top:334.2px;width:8.0px;height:1.0px;background:rgba(255,255,255,.55);"></div>
<div class="a" style="left:752.1px;top:333.4px;width:3.2px;height:3.2px;background:#d09050;border-radius:50%;"></div>
<div class="a" style="left:755.7px;top:333.4px;width:3.2px;height:3.2px;background:#d09050;border-radius:50%;"></div>
<div class="a" style="left:759.2px;top:333.4px;width:3.2px;height:3.2px;background:#d09050;border-radius:50%;"></div>
<div class="a" style="left:763.2px;top:333.4px;width:3.2px;height:3.2px;background:#2a70a0;border-radius:50%;"></div>
<div class="a" style="left:729.4px;top:338.1px;width:37.4px;height:5.3px;background:#152e40;"></div>
<div class="a" style="left:731.4px;top:340.3px;width:8.0px;height:1.0px;background:rgba(255,255,255,.55);"></div>
<div class="a" style="left:756.9px;top:339.4px;width:3.2px;height:3.2px;background:#f0f0f0;border-radius:50%;"></div>
<div class="a" style="left:760.8px;top:339.4px;width:3.2px;height:3.2px;background:#c09070;border-radius:50%;"></div>
<div class="a" style="left:729.4px;top:344.2px;width:37.4px;height:5.3px;background:#152e40;"></div>
<div class="a" style="left:731.4px;top:346.3px;width:8.0px;height:1.0px;background:rgba(255,255,255,.55);"></div>
<div class="a" style="left:756.9px;top:345.5px;width:3.2px;height:3.2px;background:#f0f0f0;border-radius:50%;"></div>
<div class="a" style="left:760.8px;top:345.5px;width:3.2px;height:3.2px;background:#c09070;border-radius:50%;"></div>
<div class="a" style="left:730.2px;top:352.7px;width:35.8px;height:9.2px;background:#0e1820;"></div>
<div class="a" style="left:740.9px;top:359.8px;width:7.2px;height:7.2px;background:#f4f6f8;border-radius:50%;"></div>
<div class="a" style="left:748.9px;top:359.1px;width:7.2px;height:7.2px;background:#1ec46b;border-radius:50%;"></div>
<div class="lb" style="left:776.5px;top:294.0px">Postga...n error</div>
<div class="a" style="left:776.5px;top:303.0px;width:39.6px;height:71.0px;background:#06090c;overflow:hidden"></div>
<div class="a" style="left:776.5px;top:303.0px;width:39.6px;height:2.1px;background:#0a141b;"></div>
<div class="a" style="left:801.1px;top:303.6px;width:11.9px;height:1.0px;background:rgba(255,255,255,.35);"></div>
<div class="a" style="left:776.5px;top:305.1px;width:39.6px;height:5.7px;background:#0b1016;"></div>
<div class="a" style="left:788.4px;top:307.6px;width:15.8px;height:1.3px;background:rgba(255,255,255,.3);"></div>
<div class="a" style="left:786.4px;top:320.8px;width:19.8px;height:3.2px;background:rgba(255,255,255,.9);"></div>
<div class="a" style="left:784.4px;top:327.9px;width:23.8px;height:0.7px;background:rgba(255,255,255,.2);"></div>
<div class="a" style="left:790.0px;top:332.8px;width:12.7px;height:10.7px;background:#e8123d;clip-path:polygon(50% 0,100% 100%,0 100%)"></div>
<div class="a" style="left:795.5px;top:336.4px;width:1.6px;height:4.3px;background:#111;"></div>
<div class="a" style="left:782.4px;top:347.7px;width:27.7px;height:1.2px;background:rgba(255,255,255,0.45);"></div>
<div class="a" style="left:785.2px;top:349.7px;width:22.2px;height:1.2px;background:rgba(255,255,255,0.45);"></div>
<div class="a" style="left:786.4px;top:357.7px;width:19.8px;height:5.3px;background:#1ed760;"></div>
<div class="a" style="left:785.2px;top:365.5px;width:2.8px;height:2.8px;background:rgba(255,255,255,.25);border-radius:50%;"></div>
<div class="a" style="left:789.2px;top:365.5px;width:2.8px;height:2.8px;background:rgba(255,255,255,.25);border-radius:50%;"></div>
<div class="a" style="left:793.1px;top:365.5px;width:2.8px;height:2.8px;background:rgba(255,255,255,.25);border-radius:50%;"></div>
<div class="a" style="left:797.1px;top:365.5px;width:2.8px;height:2.8px;background:rgba(255,255,255,.25);border-radius:50%;"></div>
<div class="a" style="left:801.1px;top:365.5px;width:2.8px;height:2.8px;background:rgba(255,255,255,.25);border-radius:50%;"></div>
<div class="a" style="left:805.0px;top:365.5px;width:2.8px;height:2.8px;background:rgba(255,255,255,.25);border-radius:50%;"></div>
<div class="lb" style="left:525.1px;top:371.3px">Activit...Earned)</div>
<div class="a" style="left:525.1px;top:380.3px;width:40.1px;height:71.0px;background:#06090c;overflow:hidden"></div>
<div class="a" style="left:525.1px;top:380.3px;width:40.1px;height:2.1px;background:#0a141b;"></div>
<div class="a" style="left:550.0px;top:380.9px;width:12.0px;height:1.0px;background:rgba(255,255,255,.35);"></div>
<div class="a" style="left:525.1px;top:382.4px;width:40.1px;height:5.7px;background:#0b1016;"></div>
<div class="a" style="left:537.1px;top:405.9px;width:16.0px;height:2.1px;background:rgba(255,255,255,.8);"></div>
<div class="a" style="left:533.9px;top:410.1px;width:22.5px;height:5.3px;background:rgba(255,255,255,.95);"></div>
<div class="a" style="left:533.1px;top:422.9px;width:24.1px;height:1.1px;background:rgba(255,255,255,.12);"></div>
<div class="a" style="left:535.1px;top:435.7px;width:20.1px;height:5.7px;background:#1ed760;"></div>
<div class="lb" style="left:582.7px;top:371.3px">Activit...lized)</div>
<div class="a" style="left:582.7px;top:380.3px;width:40.1px;height:71.0px;background:linear-gradient(#0a141b 0%,#10283a 14%,#1a4058 38%,#2b6384 58%,#1d4560 80%,#0c1a24 100%);overflow:hidden"></div>
<div class="a" style="left:582.7px;top:380.3px;width:40.1px;height:2.1px;background:#0a141b;"></div>
<div class="a" style="left:607.6px;top:380.9px;width:12.0px;height:1.0px;background:rgba(255,255,255,.35);"></div>
<div class="a" style="left:582.7px;top:382.4px;width:40.1px;height:6.0px;background:#10283a;"></div>
<div class="a" style="left:585.5px;top:384.2px;width:2.8px;height:2.5px;background:#e0602a;border-radius:50%"></div>
<div class="a" style="left:591.5px;top:384.9px;width:12.8px;height:1.3px;background:rgba(255,255,255,.45);"></div>
<div class="a" style="left:582.7px;top:388.5px;width:40.1px;height:4.3px;background:#0f2534;"></div>
<div class="a" style="left:597.1px;top:389.9px;width:11.2px;height:1.1px;background:rgba(255,255,255,.5);"></div>
<div class="a" style="left:586.7px;top:393.8px;width:32.1px;height:2.1px;background:#173547;"></div>
<div class="a" style="left:588.7px;top:394.5px;width:8.0px;height:0.9px;background:#3aa0f0;"></div>
<div class="a" style="left:606.8px;top:394.5px;width:8.0px;height:0.9px;background:rgba(255,255,255,.4);"></div>
<div class="a" style="left:582.7px;top:399.5px;width:40.1px;height:7.1px;background:#1ed760;"></div>
<div class="a" style="left:587.5px;top:400.9px;width:24.1px;height:1.1px;background:rgba(255,255,255,.7);"></div>
<div class="a" style="left:582.7px;top:408.0px;width:40.1px;height:7.1px;background:#e8124a;"></div>
<div class="a" style="left:587.5px;top:409.4px;width:24.1px;height:1.1px;background:rgba(255,255,255,.7);"></div>
<div class="a" style="left:582.7px;top:416.5px;width:40.1px;height:6.0px;background:#173a50;"></div>
<div class="a" style="left:587.5px;top:417.6px;width:24.1px;height:1.1px;background:rgba(255,255,255,.45);"></div>
<div class="a" style="left:587.5px;top:419.7px;width:2.8px;height:2.8px;background:#d08040;border-radius:50%;"></div>
<div class="a" style="left:612.8px;top:419.7px;width:7.2px;height:7.2px;background:#1fa8f0;border-radius:50%;border-radius:1px"></div>
<div class="a" style="left:582.7px;top:423.6px;width:40.1px;height:6.0px;background:#173a50;"></div>
<div class="a" style="left:587.5px;top:424.7px;width:24.1px;height:1.1px;background:rgba(255,255,255,.45);"></div>
<div class="a" style="left:587.5px;top:426.8px;width:2.8px;height:2.8px;background:#d08040;border-radius:50%;"></div>
<div class="a" style="left:612.8px;top:426.8px;width:7.2px;height:7.2px;background:#1fa8f0;border-radius:50%;border-radius:1px"></div>
<div class="a" style="left:582.7px;top:430.7px;width:40.1px;height:6.0px;background:#173a50;"></div>
<div class="a" style="left:587.5px;top:431.8px;width:24.1px;height:1.1px;background:rgba(255,255,255,.45);"></div>
<div class="a" style="left:587.5px;top:433.9px;width:2.8px;height:2.8px;background:#d08040;border-radius:50%;"></div>
<div class="a" style="left:612.8px;top:433.9px;width:7.2px;height:7.2px;background:#1fa8f0;border-radius:50%;border-radius:1px"></div>
<div class="a" style="left:582.7px;top:437.8px;width:40.1px;height:6.0px;background:#173a50;"></div>
<div class="a" style="left:587.5px;top:438.9px;width:24.1px;height:1.1px;background:rgba(255,255,255,.45);"></div>
<div class="a" style="left:587.5px;top:441.0px;width:2.8px;height:2.8px;background:#d08040;border-radius:50%;"></div>
<div class="a" style="left:612.8px;top:441.0px;width:7.2px;height:7.2px;background:#1fa8f0;border-radius:50%;border-radius:1px"></div>
<div class="a" style="left:582.7px;top:446.0px;width:40.1px;height:5.3px;background:#0a141b;"></div>
<div class="a" style="left:586.7px;top:447.8px;width:4.8px;height:2.1px;background:rgba(255,255,255,.18);"></div>
<div class="a" style="left:614.0px;top:447.8px;width:4.8px;height:2.1px;background:rgba(255,255,255,.18);"></div>
<div class="a" style="left:601.1px;top:444.6px;width:3.2px;height:5.7px;background:#3aa0f0;border-radius:1px"></div>
<div class="lb" style="left:631.4px;top:371.3px">Activit...(Open)</div>
<div class="a" style="left:631.4px;top:380.3px;width:40.0px;height:71.0px;background:linear-gradient(#0a141b 0%,#10283a 14%,#1a4058 38%,#2b6384 58%,#1d4560 80%,#0c1a24 100%);overflow:hidden"></div>
<div class="a" style="left:631.4px;top:380.3px;width:40.0px;height:2.1px;background:#0a141b;"></div>
<div class="a" style="left:656.2px;top:380.9px;width:12.0px;height:1.0px;background:rgba(255,255,255,.35);"></div>
<div class="a" style="left:631.4px;top:382.4px;width:40.0px;height:6.0px;background:#10283a;"></div>
<div class="a" style="left:634.2px;top:384.2px;width:2.8px;height:2.5px;background:#e0602a;border-radius:50%"></div>
<div class="a" style="left:640.2px;top:384.9px;width:12.8px;height:1.3px;background:rgba(255,255,255,.45);"></div>
<div class="a" style="left:631.4px;top:388.5px;width:40.0px;height:4.3px;background:#0f2534;"></div>
<div class="a" style="left:645.8px;top:389.9px;width:11.2px;height:1.1px;background:rgba(255,255,255,.5);"></div>
<div class="a" style="left:635.4px;top:393.8px;width:32.0px;height:2.1px;background:#173547;"></div>
<div class="a" style="left:637.4px;top:394.5px;width:8.0px;height:0.9px;background:#3aa0f0;"></div>
<div class="a" style="left:655.4px;top:394.5px;width:8.0px;height:0.9px;background:rgba(255,255,255,.4);"></div>
<div class="a" style="left:631.4px;top:401.6px;width:40.0px;height:7.1px;background:#1ed760;"></div>
<div class="a" style="left:636.2px;top:403.0px;width:24.0px;height:1.1px;background:rgba(255,255,255,.7);"></div>
<div class="a" style="left:631.4px;top:410.1px;width:40.0px;height:7.1px;background:#e8124a;"></div>
<div class="a" style="left:636.2px;top:411.5px;width:24.0px;height:1.1px;background:rgba(255,255,255,.7);"></div>
<div class="a" style="left:631.4px;top:418.6px;width:40.0px;height:6.0px;background:#173a50;"></div>
<div class="a" style="left:636.2px;top:419.7px;width:24.0px;height:1.1px;background:rgba(255,255,255,.45);"></div>
<div class="a" style="left:636.2px;top:421.8px;width:2.8px;height:2.8px;background:#d08040;border-radius:50%;"></div>
<div class="a" style="left:661.4px;top:421.8px;width:7.2px;height:7.2px;background:#1fa8f0;border-radius:50%;border-radius:1px"></div>
<div class="a" style="left:631.4px;top:425.7px;width:40.0px;height:6.0px;background:#173a50;"></div>
<div class="a" style="left:636.2px;top:426.8px;width:24.0px;height:1.1px;background:rgba(255,255,255,.45);"></div>
<div class="a" style="left:636.2px;top:428.9px;width:2.8px;height:2.8px;background:#d08040;border-radius:50%;"></div>
<div class="a" style="left:661.4px;top:428.9px;width:7.2px;height:7.2px;background:#1fa8f0;border-radius:50%;border-radius:1px"></div>
<div class="a" style="left:631.4px;top:432.8px;width:40.0px;height:6.0px;background:#173a50;"></div>
<div class="a" style="left:636.2px;top:433.9px;width:24.0px;height:1.1px;background:rgba(255,255,255,.45);"></div>
<div class="a" style="left:636.2px;top:436.0px;width:2.8px;height:2.8px;background:#d08040;border-radius:50%;"></div>
<div class="a" style="left:661.4px;top:436.0px;width:7.2px;height:7.2px;background:#1fa8f0;border-radius:50%;border-radius:1px"></div>
<div class="a" style="left:631.4px;top:439.9px;width:40.0px;height:6.0px;background:#173a50;"></div>
<div class="a" style="left:636.2px;top:441.0px;width:24.0px;height:1.1px;background:rgba(255,255,255,.45);"></div>
<div class="a" style="left:636.2px;top:443.1px;width:2.8px;height:2.8px;background:#d08040;border-radius:50%;"></div>
<div class="a" style="left:661.4px;top:443.1px;width:7.2px;height:7.2px;background:#1fa8f0;border-radius:50%;border-radius:1px"></div>
<div class="a" style="left:631.4px;top:446.0px;width:40.0px;height:5.3px;background:#0a141b;"></div>
<div class="a" style="left:635.4px;top:447.8px;width:4.8px;height:2.1px;background:rgba(255,255,255,.18);"></div>
<div class="a" style="left:662.6px;top:447.8px;width:4.8px;height:2.1px;background:rgba(255,255,255,.18);"></div>
<div class="a" style="left:649.8px;top:444.6px;width:3.2px;height:5.7px;background:#3aa0f0;border-radius:1px"></div>
<div class="lb" style="left:679.7px;top:371.3px">Activit...mpty)</div>
<div class="a" style="left:679.7px;top:380.3px;width:40.1px;height:71.0px;background:linear-gradient(#0a141b 0%,#10283a 14%,#1a4058 38%,#2b6384 58%,#1d4560 80%,#0c1a24 100%);overflow:hidden"></div>
<div class="a" style="left:679.7px;top:380.3px;width:40.1px;height:2.1px;background:#0a141b;"></div>
<div class="a" style="left:704.6px;top:380.9px;width:12.0px;height:1.0px;background:rgba(255,255,255,.35);"></div>
<div class="a" style="left:679.7px;top:382.4px;width:40.1px;height:6.0px;background:#10283a;"></div>
<div class="a" style="left:682.5px;top:384.2px;width:2.8px;height:2.5px;background:#e0602a;border-radius:50%"></div>
<div class="a" style="left:688.5px;top:384.9px;width:12.8px;height:1.3px;background:rgba(255,255,255,.45);"></div>
<div class="a" style="left:679.7px;top:388.5px;width:40.1px;height:4.3px;background:#0f2534;"></div>
<div class="a" style="left:694.1px;top:389.9px;width:11.2px;height:1.1px;background:rgba(255,255,255,.5);"></div>
<div class="a" style="left:683.7px;top:393.8px;width:32.1px;height:2.1px;background:#173547;"></div>
<div class="a" style="left:685.7px;top:394.5px;width:8.0px;height:0.9px;background:#3aa0f0;"></div>
<div class="a" style="left:685.7px;top:409.4px;width:28.1px;height:1.2px;background:rgba(255,255,255,0.7);"></div>
<div class="a" style="left:688.5px;top:411.4px;width:22.5px;height:1.2px;background:rgba(255,255,255,0.7);"></div>
<div class="a" style="left:696.5px;top:417.9px;width:6.4px;height:6.4px;background:#1ed760;border-radius:50%;"></div>
<div class="a" style="left:679.7px;top:446.0px;width:40.1px;height:5.3px;background:#0a141b;"></div>
<div class="a" style="left:683.7px;top:447.8px;width:4.8px;height:2.1px;background:rgba(255,255,255,.18);"></div>
<div class="a" style="left:711.0px;top:447.8px;width:4.8px;height:2.1px;background:rgba(255,255,255,.18);"></div>
<div class="a" style="left:698.1px;top:444.6px;width:3.2px;height:5.7px;background:#3aa0f0;border-radius:1px"></div>
<div class="lb" style="left:728px;top:371.3px">Share...correct)</div>
<div class="a" style="left:728.0px;top:380.3px;width:40.0px;height:71.0px;background:#06090c;overflow:hidden"></div>
<div class="a" style="left:728.0px;top:380.3px;width:40.0px;height:2.1px;background:#0a141b;"></div>
<div class="a" style="left:752.8px;top:380.9px;width:12.0px;height:1.0px;background:rgba(255,255,255,.35);"></div>
<div class="a" style="left:728.0px;top:382.4px;width:40.0px;height:5.7px;background:#0b1016;"></div>
<div class="a" style="left:740.0px;top:384.9px;width:16.0px;height:1.3px;background:rgba(255,255,255,.5);"></div>
<div class="a" style="left:736.0px;top:394.5px;width:24.0px;height:1.1px;background:rgba(255,255,255,.35);"></div>
<div class="a" style="left:731.2px;top:398.8px;width:33.6px;height:32.7px;background:#1ed760;"></div>
<div class="a" style="left:732.0px;top:399.5px;width:32.0px;height:3.6px;background:#0f2636;"></div>
<div class="a" style="left:733.6px;top:405.2px;width:28.8px;height:17.0px;background:#f4f4f4;"></div>
<div class="a" style="left:738.4px;top:413.7px;width:19.2px;height:3.6px;background:#1ed760;"></div>
<div class="a" style="left:735.2px;top:421.5px;width:3.2px;height:2.8px;background:#f4f4f4;"></div>
<div class="a" style="left:731.2px;top:427.2px;width:33.6px;height:4.3px;background:#0f2230;"></div>
<div class="a" style="left:759.2px;top:420.8px;width:6.4px;height:6.4px;background:#f2c21a;border-radius:50%;"></div>
<div class="a" style="left:732.0px;top:427.2px;width:4.8px;height:4.8px;background:#a07050;border-radius:50%;"></div>
<div class="a" style="left:743.2px;top:436.4px;width:9.6px;height:9.6px;background:#f4f6f8;border-radius:50%;"></div>
<div class="a" style="left:746.4px;top:438.5px;width:3.2px;height:3.2px;background:#3aa0f0;border-radius:50%;"></div>
<div class="lb" style="left:631.4px;top:448.3px">Activit...(Open)</div>
<div class="a" style="left:631.4px;top:457.3px;width:40.0px;height:71.0px;background:linear-gradient(#0a141b 0%,#10283a 14%,#1a4058 38%,#2b6384 58%,#1d4560 80%,#0c1a24 100%);overflow:hidden"></div>
<div class="a" style="left:631.4px;top:457.3px;width:40.0px;height:2.1px;background:#0a141b;"></div>
<div class="a" style="left:656.2px;top:457.9px;width:12.0px;height:1.0px;background:rgba(255,255,255,.35);"></div>
<div class="a" style="left:631.4px;top:459.4px;width:40.0px;height:6.0px;background:#10283a;"></div>
<div class="a" style="left:634.2px;top:461.2px;width:2.8px;height:2.5px;background:#e0602a;border-radius:50%"></div>
<div class="a" style="left:640.2px;top:461.9px;width:12.8px;height:1.3px;background:rgba(255,255,255,.45);"></div>
<div class="a" style="left:631.4px;top:465.5px;width:40.0px;height:4.3px;background:#0f2534;"></div>
<div class="a" style="left:645.8px;top:466.9px;width:11.2px;height:1.1px;background:rgba(255,255,255,.5);"></div>
<div class="a" style="left:635.4px;top:470.8px;width:32.0px;height:2.1px;background:#173547;"></div>
<div class="a" style="left:637.4px;top:471.5px;width:8.0px;height:0.9px;background:#3aa0f0;"></div>
<div class="a" style="left:638.6px;top:475.8px;width:25.6px;height:3.2px;background:#1c3a4e;box-shadow:0 0 0 .5px rgba(255,255,255,.3)"></div>
<div class="a" style="left:631.4px;top:480.7px;width:40.0px;height:8.5px;background:#173a50;"></div>
<div class="a" style="left:633.4px;top:482.2px;width:4.0px;height:4.0px;background:rgba(255,255,255,.5);border-radius:50%;"></div>
<div class="a" style="left:639.4px;top:482.5px;width:24.0px;height:1.1px;background:rgba(255,255,255,.45);"></div>
<div class="a" style="left:639.4px;top:485.0px;width:2.8px;height:2.8px;background:#d08040;border-radius:50%;"></div>
<div class="a" style="left:660.2px;top:485.7px;width:8.0px;height:2.5px;background:#1fa8f0;"></div>
<div class="a" style="left:631.4px;top:490.7px;width:40.0px;height:8.5px;background:#173a50;"></div>
<div class="a" style="left:633.4px;top:492.1px;width:4.0px;height:4.0px;background:rgba(255,255,255,.5);border-radius:50%;"></div>
<div class="a" style="left:639.4px;top:492.4px;width:24.0px;height:1.1px;background:rgba(255,255,255,.45);"></div>
<div class="a" style="left:639.4px;top:494.9px;width:2.8px;height:2.8px;background:#d08040;border-radius:50%;"></div>
<div class="a" style="left:660.2px;top:495.6px;width:8.0px;height:2.5px;background:#1fa8f0;"></div>
<div class="a" style="left:631.4px;top:500.6px;width:40.0px;height:8.5px;background:#173a50;"></div>
<div class="a" style="left:633.4px;top:502.0px;width:4.0px;height:4.0px;background:rgba(255,255,255,.5);border-radius:50%;"></div>
<div class="a" style="left:639.4px;top:502.4px;width:24.0px;height:1.1px;background:rgba(255,255,255,.45);"></div>
<div class="a" style="left:639.4px;top:504.9px;width:2.8px;height:2.8px;background:#d08040;border-radius:50%;"></div>
<div class="a" style="left:660.2px;top:505.6px;width:8.0px;height:2.5px;background:#1fa8f0;"></div>
<div class="a" style="left:631.4px;top:523.0px;width:40.0px;height:5.3px;background:#0a141b;"></div>
<div class="a" style="left:635.4px;top:524.8px;width:4.8px;height:2.1px;background:rgba(255,255,255,.18);"></div>
<div class="a" style="left:662.6px;top:524.8px;width:4.8px;height:2.1px;background:rgba(255,255,255,.18);"></div>
<div class="a" style="left:649.8px;top:521.6px;width:3.2px;height:5.7px;background:#3aa0f0;border-radius:1px"></div>
<div class="lb" style="left:679.7px;top:448.3px">Activit...empty)</div>
<div class="a" style="left:679.7px;top:457.3px;width:40.1px;height:71.0px;background:linear-gradient(#0a141b 0%,#10283a 14%,#1a4058 38%,#2b6384 58%,#1d4560 80%,#0c1a24 100%);overflow:hidden"></div>
<div class="a" style="left:679.7px;top:457.3px;width:40.1px;height:2.1px;background:#0a141b;"></div>
<div class="a" style="left:704.6px;top:457.9px;width:12.0px;height:1.0px;background:rgba(255,255,255,.35);"></div>
<div class="a" style="left:679.7px;top:459.4px;width:40.1px;height:6.0px;background:#10283a;"></div>
<div class="a" style="left:682.5px;top:461.2px;width:2.8px;height:2.5px;background:#e0602a;border-radius:50%"></div>
<div class="a" style="left:688.5px;top:461.9px;width:12.8px;height:1.3px;background:rgba(255,255,255,.45);"></div>
<div class="a" style="left:679.7px;top:465.5px;width:40.1px;height:4.3px;background:#0f2534;"></div>
<div class="a" style="left:694.1px;top:466.9px;width:11.2px;height:1.1px;background:rgba(255,255,255,.5);"></div>
<div class="a" style="left:683.7px;top:470.8px;width:32.1px;height:2.1px;background:#173547;"></div>
<div class="a" style="left:701.8px;top:471.5px;width:12.0px;height:0.9px;background:#3aa0f0;"></div>
<div class="a" style="left:685.7px;top:485.7px;width:28.1px;height:1.2px;background:rgba(255,255,255,0.8);"></div>
<div class="a" style="left:688.5px;top:487.7px;width:22.5px;height:1.2px;background:rgba(255,255,255,0.8);"></div>
<div class="a" style="left:690.1px;top:494.9px;width:19.2px;height:5.7px;background:#1ed760;"></div>
<div class="a" style="left:679.7px;top:523.0px;width:40.1px;height:5.3px;background:#0a141b;"></div>
<div class="a" style="left:683.7px;top:524.8px;width:4.8px;height:2.1px;background:rgba(255,255,255,.18);"></div>
<div class="a" style="left:711.0px;top:524.8px;width:4.8px;height:2.1px;background:rgba(255,255,255,.18);"></div>
<div class="a" style="left:698.1px;top:521.6px;width:3.2px;height:5.7px;background:#3aa0f0;border-radius:1px"></div>
<div class="lb" style="left:772.2px;top:448.5px">FTUE -...ruction</div>
<div class="a" style="left:772.2px;top:457.5px;width:39.6px;height:71.0px;background:linear-gradient(#0a141b 0%,#10283a 14%,#1a4058 38%,#2b6384 58%,#1d4560 80%,#0c1a24 100%);overflow:hidden"></div>
<div class="a" style="left:772.2px;top:457.5px;width:39.6px;height:2.1px;background:#0a141b;"></div>
<div class="a" style="left:796.8px;top:458.1px;width:11.9px;height:1.0px;background:rgba(255,255,255,.35);"></div>
<div class="a" style="left:772.2px;top:459.6px;width:39.6px;height:6.4px;background:#0e1b25;"></div>
<div class="a" style="left:774.2px;top:461.8px;width:3.6px;height:3.6px;background:rgba(255,255,255,.4);border-radius:50%;"></div>
<div class="a" style="left:784.1px;top:462.5px;width:15.8px;height:1.4px;background:rgba(255,255,255,.6);"></div>
<div class="a" style="left:774.2px;top:468.1px;width:35.6px;height:51.1px;background:transparent;border:1px dashed rgba(255,255,255,.85)"></div>
<div class="a" style="left:778.1px;top:470.3px;width:27.7px;height:1.2px;background:rgba(255,255,255,0.65);"></div>
<div class="a" style="left:780.9px;top:472.3px;width:22.2px;height:1.2px;background:rgba(255,255,255,0.65);"></div>
<div class="a" style="left:786.1px;top:479.5px;width:11.9px;height:1.1px;background:rgba(255,255,255,.6);"></div>
<div class="a" style="left:786.1px;top:490.0px;width:11.9px;height:1.1px;background:rgba(255,255,255,.6);"></div>
<div class="a" style="left:786.1px;top:500.5px;width:11.9px;height:1.1px;background:rgba(255,255,255,.6);"></div>
<div class="a" style="left:786.1px;top:511.0px;width:11.9px;height:1.1px;background:rgba(255,255,255,.6);"></div>
<div class="a" style="left:786.1px;top:521.5px;width:11.9px;height:1.1px;background:rgba(255,255,255,.6);"></div>
<div class="a" style="left:789.6px;top:509.3px;width:4.8px;height:3.6px;background:#ddd;"></div>
<div class="a" style="left:772.2px;top:520.0px;width:39.6px;height:8.5px;background:#06090c;"></div>
<div class="a" style="left:816px;top:469.5px;width:14px;height:0;border-top:1px dotted #ccc"></div>
<div class="a" style="left:816px;top:513.5px;width:14px;height:0;border-top:1px dotted #ccc"></div>
<div class="lb" style="left:772.2px;top:527.1px">FTUE -...ruction</div>
<div class="a" style="left:772.2px;top:536.1px;width:39.6px;height:71.0px;background:linear-gradient(#0a141b 0%,#10283a 14%,#1a4058 38%,#2b6384 58%,#1d4560 80%,#0c1a24 100%);overflow:hidden"></div>
<div class="a" style="left:772.2px;top:536.1px;width:39.6px;height:2.1px;background:#0a141b;"></div>
<div class="a" style="left:796.8px;top:536.7px;width:11.9px;height:1.0px;background:rgba(255,255,255,.35);"></div>
<div class="a" style="left:772.2px;top:538.2px;width:39.6px;height:6.4px;background:#0e1b25;"></div>
<div class="a" style="left:774.2px;top:540.4px;width:3.6px;height:3.6px;background:rgba(255,255,255,.4);border-radius:50%;"></div>
<div class="a" style="left:784.1px;top:541.1px;width:15.8px;height:1.4px;background:rgba(255,255,255,.6);"></div>
<div class="a" style="left:774.2px;top:546.8px;width:35.6px;height:51.1px;background:transparent;border:1px dashed rgba(255,255,255,.85)"></div>
<div class="a" style="left:778.1px;top:548.9px;width:27.7px;height:1.2px;background:rgba(255,255,255,0.65);"></div>
<div class="a" style="left:780.9px;top:550.9px;width:22.2px;height:1.2px;background:rgba(255,255,255,0.65);"></div>
<div class="a" style="left:775.4px;top:555.3px;width:33.3px;height:5.7px;background:linear-gradient(90deg,#22d36a,#2ab8e8);"></div>
<div class="a" style="left:796.0px;top:556.7px;width:3.2px;height:3.2px;background:#d0704a;border-radius:50%;"></div>
<div class="a" style="left:799.9px;top:556.7px;width:3.2px;height:3.2px;background:#d0704a;border-radius:50%;"></div>
<div class="a" style="left:803.9px;top:556.7px;width:3.2px;height:3.2px;background:#d0704a;border-radius:50%;"></div>
<div class="a" style="left:816px;top:548.1px;width:14px;height:0;border-top:1px dotted #ccc"></div>
<div class="lb" style="left:374.8px;top:46.5px">Prism Palette</div>
<div class="a" style="left:373.9px;top:56.3px;width:103.9px;height:72.3px;background:#f7f7f7;box-shadow:0 0.5px 2px rgba(0,0,0,.25)"></div>
<div class="a" style="left:377.0px;top:59.3px;width:22.0px;height:32.0px;background:#fff;box-shadow:0 0 1.5px rgba(0,0,0,.18)"></div>
<div class="a" style="left:377.0px;top:59.3px;width:22.0px;height:22.0px;background:#0f2a3e;"></div>
<div class="a" style="left:378.5px;top:83.8px;width:8.0px;height:1.2px;background:#333;"></div>
<div class="a" style="left:378.5px;top:86.3px;width:5.0px;height:0.8px;background:#aaa;"></div>
<div class="a" style="left:378.5px;top:88.3px;width:12.0px;height:0.8px;background:#aaa;"></div>
<div class="a" style="left:402.3px;top:59.3px;width:22.0px;height:32.0px;background:#fff;box-shadow:0 0 1.5px rgba(0,0,0,.18)"></div>
<div class="a" style="left:402.3px;top:59.3px;width:22.0px;height:22.0px;background:#1ed760;"></div>
<div class="a" style="left:403.8px;top:83.8px;width:8.0px;height:1.2px;background:#333;"></div>
<div class="a" style="left:403.8px;top:86.3px;width:5.0px;height:0.8px;background:#aaa;"></div>
<div class="a" style="left:403.8px;top:88.3px;width:12.0px;height:0.8px;background:#aaa;"></div>
<div class="a" style="left:428.0px;top:59.3px;width:22.0px;height:32.0px;background:#fff;box-shadow:0 0 1.5px rgba(0,0,0,.18)"></div>
<div class="a" style="left:428.0px;top:59.3px;width:22.0px;height:22.0px;background:#ffffff;"></div>
<div class="a" style="left:429.5px;top:83.8px;width:8.0px;height:1.2px;background:#333;"></div>
<div class="a" style="left:429.5px;top:86.3px;width:5.0px;height:0.8px;background:#aaa;"></div>
<div class="a" style="left:429.5px;top:88.3px;width:12.0px;height:0.8px;background:#aaa;"></div>
<div class="a" style="left:453.3px;top:59.3px;width:22.0px;height:32.0px;background:#fff;box-shadow:0 0 1.5px rgba(0,0,0,.18)"></div>
<div class="a" style="left:453.3px;top:59.3px;width:22.0px;height:22.0px;background:#1ea9f0;"></div>
<div class="a" style="left:454.8px;top:83.8px;width:8.0px;height:1.2px;background:#333;"></div>
<div class="a" style="left:454.8px;top:86.3px;width:5.0px;height:0.8px;background:#aaa;"></div>
<div class="a" style="left:454.8px;top:88.3px;width:12.0px;height:0.8px;background:#aaa;"></div>
<div class="a" style="left:377.0px;top:94.3px;width:22.0px;height:32.0px;background:#fff;box-shadow:0 0 1.5px rgba(0,0,0,.18)"></div>
<div class="a" style="left:377.0px;top:94.3px;width:22.0px;height:22.0px;background:#e8003d;"></div>
<div class="a" style="left:378.5px;top:118.8px;width:8.0px;height:1.2px;background:#333;"></div>
<div class="a" style="left:378.5px;top:121.3px;width:5.0px;height:0.8px;background:#aaa;"></div>
<div class="a" style="left:378.5px;top:123.3px;width:12.0px;height:0.8px;background:#aaa;"></div>
<div class="a" style="left:402.3px;top:94.3px;width:22.0px;height:32.0px;background:#fff;box-shadow:0 0 1.5px rgba(0,0,0,.18)"></div>
<div class="a" style="left:402.3px;top:94.3px;width:22.0px;height:22.0px;background:#333333;"></div>
<div class="a" style="left:403.8px;top:118.8px;width:8.0px;height:1.2px;background:#333;"></div>
<div class="a" style="left:403.8px;top:121.3px;width:5.0px;height:0.8px;background:#aaa;"></div>
<div class="a" style="left:403.8px;top:123.3px;width:12.0px;height:0.8px;background:#aaa;"></div>
<div class="a" style="left:428.0px;top:94.3px;width:22.0px;height:32.0px;background:#fff;box-shadow:0 0 1.5px rgba(0,0,0,.18)"></div>
<div class="a" style="left:428.0px;top:94.3px;width:22.0px;height:22.0px;background:#f8d000;"></div>
<div class="a" style="left:429.5px;top:118.8px;width:8.0px;height:1.2px;background:#333;"></div>
<div class="a" style="left:429.5px;top:121.3px;width:5.0px;height:0.8px;background:#aaa;"></div>
<div class="a" style="left:429.5px;top:123.3px;width:12.0px;height:0.8px;background:#aaa;"></div>
<div class="lb" style="left:903.5px;top:84.10000000000001px">GIF In...Copy</div>
<div class="a" style="left:902.5px;top:92.4px;width:35.5px;height:35.5px;background:#fff;box-shadow:0 0 2px rgba(0,0,0,.25)"></div>
<div class="a" style="left:903.5px;top:93.4px;width:33.5px;height:33.5px;background:radial-gradient(#2a5878,#0c1c28 75%);"></div>
<div class="a" style="left:903.5px;top:93.4px;width:33.5px;height:33.5px;background:radial-gradient(circle,rgba(120,180,220,.35) .4px,transparent .7px) 0 0/2px 2px;"></div>
<div class="a" style="left:903.5px;top:93.4px;width:33.5px;height:3.5px;background:#0a1822;"></div>
<div class="a" style="left:915.2px;top:94.6px;width:10.0px;height:1.2px;background:rgba(255,255,255,.5);"></div>
<div class="a" style="left:910.2px;top:100.8px;width:20.1px;height:15.1px;background:#fafafa;border-radius:1px"></div>
<div class="a" style="left:913.5px;top:104.1px;width:13.4px;height:1.0px;background:#555;"></div>
<div class="a" style="left:915.2px;top:106.1px;width:10.0px;height:1.0px;background:#555;"></div>
<div class="a" style="left:916.2px;top:110.2px;width:8.0px;height:1.0px;background:#777;"></div>
<div class="a" style="left:911.5px;top:115.5px;width:2.3px;height:2.3px;background:#fafafa;"></div>
<div class="a" style="left:904.5px;top:121.9px;width:4.0px;height:4.0px;background:#6a5040;"></div>
<div class="a" style="left:916.9px;top:123.9px;width:16.8px;height:1.0px;background:rgba(255,255,255,.4);"></div>
<div class="lb" style="left:903.5px;top:131.2px">gif_pr..._invite</div>
<div class="a" style="left:902.5px;top:139.5px;width:35.5px;height:36.5px;background:#fff;box-shadow:0 0 2px rgba(0,0,0,.25)"></div>
<div class="a" style="left:903.5px;top:140.5px;width:33.5px;height:34.5px;background:radial-gradient(#2a5878,#0c1c28 75%);"></div>
<div class="a" style="left:903.5px;top:140.5px;width:33.5px;height:34.5px;background:radial-gradient(circle,rgba(120,180,220,.35) .4px,transparent .7px) 0 0/2px 2px;"></div>
<div class="a" style="left:903.5px;top:140.5px;width:33.5px;height:3.5px;background:#0a1822;"></div>
<div class="a" style="left:915.2px;top:141.7px;width:10.0px;height:1.2px;background:rgba(255,255,255,.5);"></div>
<div class="a" style="left:910.2px;top:148.1px;width:20.1px;height:15.5px;background:#fafafa;border-radius:1px"></div>
<div class="a" style="left:913.5px;top:151.5px;width:13.4px;height:1.0px;background:#555;"></div>
<div class="a" style="left:915.2px;top:153.6px;width:10.0px;height:1.0px;background:#555;"></div>
<div class="a" style="left:916.2px;top:157.8px;width:8.0px;height:1.0px;background:#777;"></div>
<div class="a" style="left:911.5px;top:163.3px;width:2.3px;height:2.4px;background:#fafafa;"></div>
<div class="a" style="left:904.5px;top:170.0px;width:4.0px;height:4.0px;background:#6a5040;"></div>
<div class="a" style="left:916.9px;top:172.0px;width:16.8px;height:1.0px;background:rgba(255,255,255,.4);"></div>
<div class="lb" style="left:905.5px;top:180.0px">GIF Inv...itation</div>
<div class="a" style="left:901.5px;top:186.5px;width:40.0px;height:44.0px;background:#fff;box-shadow:0 0 2px rgba(0,0,0,.2)"></div>
<div class="a" style="left:905.5px;top:189.3px;width:33.0px;height:33.0px;background:radial-gradient(#2a5878,#0c1c28 75%);"></div>
<div class="a" style="left:905.5px;top:189.3px;width:33.0px;height:33.0px;background:radial-gradient(circle,rgba(120,180,220,.35) .4px,transparent .7px) 0 0/2px 2px;"></div>
<div class="a" style="left:905.5px;top:189.3px;width:33.0px;height:3.5px;background:#0a1822;"></div>
<div class="a" style="left:917.0px;top:190.5px;width:9.9px;height:1.2px;background:rgba(255,255,255,.5);"></div>
<div class="a" style="left:912.1px;top:196.6px;width:19.8px;height:14.8px;background:#fafafa;border-radius:1px"></div>
<div class="a" style="left:915.4px;top:199.9px;width:13.2px;height:1.0px;background:#555;"></div>
<div class="a" style="left:917.0px;top:201.8px;width:9.9px;height:1.0px;background:#555;"></div>
<div class="a" style="left:918.0px;top:205.8px;width:7.9px;height:1.0px;background:#777;"></div>
<div class="a" style="left:913.4px;top:211.1px;width:2.3px;height:2.3px;background:#fafafa;"></div>
<div class="a" style="left:906.5px;top:217.3px;width:4.0px;height:4.0px;background:#6a5040;"></div>
<div class="a" style="left:918.7px;top:219.3px;width:16.5px;height:1.0px;background:rgba(255,255,255,.4);"></div>
<div class="lb" style="left:903.5px;top:225.2px">gif_ge..._invite</div>
<div class="a" style="left:902.5px;top:233.5px;width:36.0px;height:36.5px;background:#fff;box-shadow:0 0 2px rgba(0,0,0,.25)"></div>
<div class="a" style="left:903.5px;top:234.5px;width:34.0px;height:34.5px;background:radial-gradient(#2a5878,#0c1c28 75%);"></div>
<div class="a" style="left:903.5px;top:234.5px;width:34.0px;height:34.5px;background:radial-gradient(circle,rgba(120,180,220,.35) .4px,transparent .7px) 0 0/2px 2px;"></div>
<div class="a" style="left:903.5px;top:234.5px;width:34.0px;height:3.5px;background:#0a1822;"></div>
<div class="a" style="left:915.4px;top:235.7px;width:10.2px;height:1.2px;background:rgba(255,255,255,.5);"></div>
<div class="a" style="left:910.3px;top:242.1px;width:20.4px;height:15.5px;background:#fafafa;border-radius:1px"></div>
<div class="a" style="left:913.7px;top:245.5px;width:13.6px;height:1.0px;background:#555;"></div>
<div class="a" style="left:915.4px;top:247.6px;width:10.2px;height:1.0px;background:#555;"></div>
<div class="a" style="left:916.4px;top:251.8px;width:8.2px;height:1.0px;background:#777;"></div>
<div class="a" style="left:911.7px;top:257.3px;width:2.4px;height:2.4px;background:#fafafa;"></div>
<div class="a" style="left:904.5px;top:264.0px;width:4.0px;height:4.0px;background:#6a5040;"></div>
<div class="a" style="left:917.1px;top:266.0px;width:17.0px;height:1.0px;background:rgba(255,255,255,.4);"></div>
<div class="lb" style="left:954.4px;top:120.8px">Emo...cons</div>
<div class="a" style="left:953.0px;top:130.0px;width:28.5px;height:51.0px;background:#fbfbfb;box-shadow:0 0 2px rgba(0,0,0,.25)"></div>
<div class="a" style="left:955px;top:132.0px;width:4.4px;height:4.4px;border-radius:50%;background:#f2c21a"></div>
<div class="a" style="left:961.5px;top:133.6px;width:12.0px;height:0.9px;background:#999;"></div>
<div class="a" style="left:955px;top:137.9px;width:4.4px;height:4.4px;border-radius:50%;background:#f2c21a"></div>
<div class="a" style="left:961.5px;top:139.5px;width:12.0px;height:0.9px;background:#999;"></div>
<div class="a" style="left:955px;top:143.8px;width:4.4px;height:4.4px;border-radius:50%;background:#f2c21a"></div>
<div class="a" style="left:961.5px;top:145.4px;width:12.0px;height:0.9px;background:#999;"></div>
<div class="a" style="left:955px;top:149.7px;width:4.4px;height:4.4px;border-radius:50%;background:#f2c21a"></div>
<div class="a" style="left:961.5px;top:151.3px;width:12.0px;height:0.9px;background:#999;"></div>
<div class="a" style="left:955px;top:158.1px;width:4.4px;height:4.4px;border-radius:50%;background:#f2c21a"></div>
<div class="a" style="left:961.5px;top:159.7px;width:12.0px;height:0.9px;background:#999;"></div>
<div class="a" style="left:955px;top:164.0px;width:4.4px;height:4.4px;border-radius:50%;background:#f2c21a"></div>
<div class="a" style="left:961.5px;top:165.6px;width:12.0px;height:0.9px;background:#999;"></div>
<div class="a" style="left:955px;top:169.9px;width:4.4px;height:4.4px;border-radius:50%;background:#f2c21a"></div>
<div class="a" style="left:961.5px;top:171.5px;width:12.0px;height:0.9px;background:#999;"></div>
<div class="a" style="left:955px;top:175.8px;width:4.4px;height:4.4px;border-radius:50%;background:#f2c21a"></div>
<div class="a" style="left:961.5px;top:177.4px;width:12.0px;height:0.9px;background:#999;"></div>
<div class="a" style="left:992px;top:127px;font-size:7px;line-height:8px;color:#46aaee;transform:rotate(-20deg)">*</div>
<div class="a" style="left:998px;top:123px;font-size:8px;line-height:8px;color:#46aaee;transform:rotate(15deg)">!</div>
<div class="a" style="left:1006px;top:124px;font-size:6px;line-height:8px;color:#46aaee;transform:rotate(0deg)">%</div>
<div class="a" style="left:1015px;top:120px;font-size:9px;line-height:8px;color:#46aaee;transform:rotate(25deg)">%</div>
<div class="a" style="left:1002px;top:133px;font-size:7px;line-height:8px;color:#46aaee;transform:rotate(-10deg)">#</div>
<div class="a" style="left:1010px;top:131px;font-size:8px;line-height:8px;color:#46aaee;transform:rotate(-20deg)">?</div>
<div class="a" style="left:1019px;top:129px;font-size:6px;line-height:8px;color:#46aaee;transform:rotate(15deg)">!</div>
<div class="a" style="left:1024px;top:136px;font-size:9px;line-height:8px;color:#46aaee;transform:rotate(0deg)">?</div>
<div class="a" style="left:994px;top:138px;font-size:7px;line-height:8px;color:#46aaee;transform:rotate(25deg)">?</div>
<div class="a" style="left:999px;top:144px;font-size:8px;line-height:8px;color:#46aaee;transform:rotate(-10deg)">!</div>
<div class="a" style="left:1005px;top:141px;font-size:6px;line-height:8px;color:#46aaee;transform:rotate(-20deg)">#</div>
<div class="a" style="left:1012px;top:139px;font-size:9px;line-height:8px;color:#46aaee;transform:rotate(15deg)">%</div>
<div class="a" style="left:1018px;top:146px;font-size:7px;line-height:8px;color:#46aaee;transform:rotate(0deg)">?</div>
<div class="a" style="left:1023px;top:143px;font-size:8px;line-height:8px;color:#46aaee;transform:rotate(25deg)">#</div>
<div class="a" style="left:990px;top:148px;font-size:6px;line-height:8px;color:#46aaee;transform:rotate(-10deg)">!</div>
<div class="a" style="left:996px;top:154px;font-size:9px;line-height:8px;color:#46aaee;transform:rotate(-20deg)">%</div>
<div class="a" style="left:1003px;top:151px;font-size:7px;line-height:8px;color:#46aaee;transform:rotate(15deg)">*</div>
<div class="a" style="left:1009px;top:149px;font-size:8px;line-height:8px;color:#46aaee;transform:rotate(0deg)">#</div>
<div class="a" style="left:1015px;top:153px;font-size:6px;line-height:8px;color:#46aaee;transform:rotate(25deg)">!</div>
<div class="a" style="left:1021px;top:156px;font-size:9px;line-height:8px;color:#46aaee;transform:rotate(-10deg)">?</div>
<div class="a" style="left:993px;top:161px;font-size:7px;line-height:8px;color:#46aaee;transform:rotate(-20deg)">#</div>
<div class="a" style="left:1000px;top:159px;font-size:8px;line-height:8px;color:#46aaee;transform:rotate(15deg)">!</div>
<div class="a" style="left:1007px;top:162px;font-size:6px;line-height:8px;color:#46aaee;transform:rotate(0deg)">*</div>
<div class="a" style="left:1013px;top:160px;font-size:9px;line-height:8px;color:#46aaee;transform:rotate(25deg)">?</div>
<div class="a" style="left:1019px;top:164px;font-size:7px;line-height:8px;color:#46aaee;transform:rotate(-10deg)">!</div>
<div class="a" style="left:1026px;top:147px;font-size:8px;line-height:8px;color:#46aaee;transform:rotate(-20deg)">#</div>
<div class="a" style="left:988px;top:143px;font-size:6px;line-height:8px;color:#46aaee;transform:rotate(15deg)">?</div>
<div class="lb" style="left:954px;top:178.2px">GIF Correct</div>
<div class="a" style="left:953.0px;top:186.5px;width:36.0px;height:36.5px;background:#fff;box-shadow:0 0 2px rgba(0,0,0,.25)"></div>
<div class="a" style="left:954.0px;top:187.5px;width:34.0px;height:34.5px;background:#1ed760;"></div>
<div class="a" style="left:954.0px;top:187.5px;width:34.0px;height:34.5px;background:radial-gradient(circle,rgba(255,255,255,.25) .4px,transparent .7px) 0 0/2.5px 2.5px;"></div>
<div class="a" style="left:954.0px;top:187.5px;width:34.0px;height:4.0px;background:#102636;"></div>
<div class="a" style="left:964.2px;top:188.9px;width:13.6px;height:1.2px;background:rgba(255,255,255,.5);"></div>
<div class="a" style="left:958.1px;top:194.4px;width:25.8px;height:17.2px;background:#fafafa;border-radius:1px"></div>
<div class="a" style="left:965.9px;top:197.2px;width:10.2px;height:1.0px;background:#555;"></div>
<div class="a" style="left:959.4px;top:200.6px;width:23.1px;height:3.5px;background:#1ed760;"></div>
<div class="a" style="left:962.5px;top:207.5px;width:17.0px;height:1.5px;background:#333;"></div>
<div class="a" style="left:960.1px;top:211.7px;width:2.7px;height:2.4px;background:#fafafa;"></div>
<div class="a" style="left:954.0px;top:218.0px;width:34.0px;height:4.0px;background:#102636;"></div>
<div class="a" style="left:980.0px;top:210.0px;width:6.5px;height:6.5px;background:#f2c21a;border-radius:50%"></div>
<div class="lb" style="left:956.3px;top:225.7px">gif_co...happy</div>
<div class="a" style="left:955.3px;top:234.0px;width:35.0px;height:36.7px;background:#fff;box-shadow:0 0 2px rgba(0,0,0,.25)"></div>
<div class="a" style="left:956.3px;top:235.0px;width:33.0px;height:34.7px;background:#1ed760;"></div>
<div class="a" style="left:956.3px;top:235.0px;width:33.0px;height:34.7px;background:radial-gradient(circle,rgba(255,255,255,.25) .4px,transparent .7px) 0 0/2.5px 2.5px;"></div>
<div class="a" style="left:956.3px;top:235.0px;width:33.0px;height:4.0px;background:#102636;"></div>
<div class="a" style="left:966.2px;top:236.4px;width:13.2px;height:1.2px;background:rgba(255,255,255,.5);"></div>
<div class="a" style="left:960.3px;top:241.9px;width:25.1px;height:17.4px;background:#fafafa;border-radius:1px"></div>
<div class="a" style="left:967.8px;top:244.7px;width:9.9px;height:1.0px;background:#555;"></div>
<div class="a" style="left:961.6px;top:248.2px;width:22.4px;height:3.5px;background:#1ed760;"></div>
<div class="a" style="left:964.5px;top:255.1px;width:16.5px;height:1.5px;background:#333;"></div>
<div class="a" style="left:962.2px;top:259.3px;width:2.6px;height:2.4px;background:#fafafa;"></div>
<div class="a" style="left:956.3px;top:265.7px;width:33.0px;height:4.0px;background:#102636;"></div>
<div class="a" style="left:957.3px;top:260.7px;width:6.5px;height:6.5px;background:#f2c21a;border-radius:50%"></div>
<div class="lb" style="left:956.3px;top:272.7px">gif_co..._ballin</div>
<div class="a" style="left:955.3px;top:281.0px;width:35.0px;height:36.6px;background:#fff;box-shadow:0 0 2px rgba(0,0,0,.25)"></div>
<div class="a" style="left:956.3px;top:282.0px;width:33.0px;height:34.6px;background:#1ed760;"></div>
<div class="a" style="left:956.3px;top:282.0px;width:33.0px;height:34.6px;background:radial-gradient(circle,rgba(255,255,255,.25) .4px,transparent .7px) 0 0/2.5px 2.5px;"></div>
<div class="a" style="left:956.3px;top:282.0px;width:33.0px;height:4.0px;background:#102636;"></div>
<div class="a" style="left:966.2px;top:283.4px;width:13.2px;height:1.2px;background:rgba(255,255,255,.5);"></div>
<div class="a" style="left:960.3px;top:288.9px;width:25.1px;height:17.3px;background:#fafafa;border-radius:1px"></div>
<div class="a" style="left:967.8px;top:291.7px;width:9.9px;height:1.0px;background:#555;"></div>
<div class="a" style="left:961.6px;top:295.1px;width:22.4px;height:3.5px;background:#1ed760;"></div>
<div class="a" style="left:964.5px;top:302.1px;width:16.5px;height:1.5px;background:#333;"></div>
<div class="a" style="left:962.2px;top:306.2px;width:2.6px;height:2.4px;background:#fafafa;"></div>
<div class="a" style="left:956.3px;top:312.6px;width:33.0px;height:4.0px;background:#102636;"></div>
<div class="a" style="left:957.3px;top:307.6px;width:6.5px;height:6.5px;background:#f2c21a;border-radius:50%"></div>
<div class="lb" style="left:956.3px;top:319.0px">gif_co..._sucit</div>
<div class="a" style="left:955.3px;top:327.3px;width:35.0px;height:37.5px;background:#fff;box-shadow:0 0 2px rgba(0,0,0,.25)"></div>
<div class="a" style="left:956.3px;top:328.3px;width:33.0px;height:35.5px;background:#1ed760;"></div>
<div class="a" style="left:956.3px;top:328.3px;width:33.0px;height:35.5px;background:radial-gradient(circle,rgba(255,255,255,.25) .4px,transparent .7px) 0 0/2.5px 2.5px;"></div>
<div class="a" style="left:956.3px;top:328.3px;width:33.0px;height:4.0px;background:#102636;"></div>
<div class="a" style="left:966.2px;top:329.7px;width:13.2px;height:1.2px;background:rgba(255,255,255,.5);"></div>
<div class="a" style="left:960.3px;top:335.4px;width:25.1px;height:17.8px;background:#fafafa;border-radius:1px"></div>
<div class="a" style="left:967.8px;top:338.2px;width:9.9px;height:1.0px;background:#555;"></div>
<div class="a" style="left:961.6px;top:341.8px;width:22.4px;height:3.6px;background:#1ed760;"></div>
<div class="a" style="left:964.5px;top:348.9px;width:16.5px;height:1.5px;background:#333;"></div>
<div class="a" style="left:962.2px;top:353.2px;width:2.6px;height:2.5px;background:#fafafa;"></div>
<div class="a" style="left:956.3px;top:359.8px;width:33.0px;height:4.0px;background:#102636;"></div>
<div class="a" style="left:957.3px;top:354.8px;width:6.5px;height:6.5px;background:#f2c21a;border-radius:50%"></div>
<div class="lb" style="left:953px;top:365.7px">gif_co...ussup</div>
<div class="a" style="left:952.0px;top:374.0px;width:37.0px;height:38.0px;background:#fff;box-shadow:0 0 2px rgba(0,0,0,.25)"></div>
<div class="a" style="left:953.0px;top:375.0px;width:35.0px;height:36.0px;background:#1ed760;"></div>
<div class="a" style="left:953.0px;top:375.0px;width:35.0px;height:36.0px;background:radial-gradient(circle,rgba(255,255,255,.25) .4px,transparent .7px) 0 0/2.5px 2.5px;"></div>
<div class="a" style="left:953.0px;top:375.0px;width:35.0px;height:4.0px;background:#102636;"></div>
<div class="a" style="left:963.5px;top:376.4px;width:14.0px;height:1.2px;background:rgba(255,255,255,.5);"></div>
<div class="a" style="left:957.2px;top:382.2px;width:26.6px;height:18.0px;background:#fafafa;border-radius:1px"></div>
<div class="a" style="left:965.2px;top:385.1px;width:10.5px;height:1.0px;background:#555;"></div>
<div class="a" style="left:958.6px;top:388.7px;width:23.8px;height:3.6px;background:#1ed760;"></div>
<div class="a" style="left:961.8px;top:395.9px;width:17.5px;height:1.5px;background:#333;"></div>
<div class="a" style="left:959.3px;top:400.2px;width:2.8px;height:2.5px;background:#fafafa;"></div>
<div class="a" style="left:953.0px;top:407.0px;width:35.0px;height:4.0px;background:#102636;"></div>
<div class="a" style="left:954.0px;top:402.0px;width:6.5px;height:6.5px;background:#f2c21a;border-radius:50%"></div>
<div class="lb" style="left:1001.7px;top:178.2px">GIF Incorrect</div>
<div class="a" style="left:1000.7px;top:186.5px;width:36.5px;height:36.5px;background:#fff;box-shadow:0 0 2px rgba(0,0,0,.25)"></div>
<div class="a" style="left:1001.7px;top:187.5px;width:34.5px;height:34.5px;background:#e8124a;"></div>
<div class="a" style="left:1001.7px;top:187.5px;width:34.5px;height:34.5px;background:radial-gradient(circle,rgba(255,255,255,.25) .4px,transparent .7px) 0 0/2.5px 2.5px;"></div>
<div class="a" style="left:1001.7px;top:187.5px;width:34.5px;height:4.0px;background:#102636;"></div>
<div class="a" style="left:1012.1px;top:188.9px;width:13.8px;height:1.2px;background:rgba(255,255,255,.5);"></div>
<div class="a" style="left:1005.8px;top:194.4px;width:26.2px;height:17.2px;background:#fafafa;border-radius:1px"></div>
<div class="a" style="left:1013.8px;top:197.2px;width:10.3px;height:1.0px;background:#555;"></div>
<div class="a" style="left:1007.2px;top:200.6px;width:23.5px;height:3.5px;background:#e8124a;"></div>
<div class="a" style="left:1010.3px;top:207.5px;width:17.2px;height:1.5px;background:#333;"></div>
<div class="a" style="left:1007.9px;top:211.7px;width:2.8px;height:2.4px;background:#fafafa;"></div>
<div class="a" style="left:1001.7px;top:218.0px;width:34.5px;height:4.0px;background:#102636;"></div>
<div class="a" style="left:1028.2px;top:210.0px;width:6.5px;height:6.5px;background:#f2c21a;border-radius:50%"></div>
<div class="lb" style="left:1002.5px;top:225.7px">gif_in...ct_sad</div>
<div class="a" style="left:1001.5px;top:234.0px;width:35.7px;height:36.7px;background:#fff;box-shadow:0 0 2px rgba(0,0,0,.25)"></div>
<div class="a" style="left:1002.5px;top:235.0px;width:33.7px;height:34.7px;background:#e8124a;"></div>
<div class="a" style="left:1002.5px;top:235.0px;width:33.7px;height:34.7px;background:radial-gradient(circle,rgba(255,255,255,.25) .4px,transparent .7px) 0 0/2.5px 2.5px;"></div>
<div class="a" style="left:1002.5px;top:235.0px;width:33.7px;height:4.0px;background:#102636;"></div>
<div class="a" style="left:1012.6px;top:236.4px;width:13.5px;height:1.2px;background:rgba(255,255,255,.5);"></div>
<div class="a" style="left:1006.5px;top:241.9px;width:25.6px;height:17.4px;background:#fafafa;border-radius:1px"></div>
<div class="a" style="left:1014.3px;top:244.7px;width:10.1px;height:1.0px;background:#555;"></div>
<div class="a" style="left:1007.9px;top:248.2px;width:22.9px;height:3.5px;background:#e8124a;"></div>
<div class="a" style="left:1010.9px;top:255.1px;width:16.9px;height:1.5px;background:#333;"></div>
<div class="a" style="left:1008.6px;top:259.3px;width:2.7px;height:2.4px;background:#fafafa;"></div>
<div class="a" style="left:1002.5px;top:265.7px;width:33.7px;height:4.0px;background:#102636;"></div>
<div class="a" style="left:1003.5px;top:260.7px;width:6.5px;height:6.5px;background:#f2c21a;border-radius:50%"></div>
<div class="lb" style="left:1002.5px;top:272.7px">gif_in...peless</div>
<div class="a" style="left:1001.5px;top:281.0px;width:35.7px;height:36.6px;background:#fff;box-shadow:0 0 2px rgba(0,0,0,.25)"></div>
<div class="a" style="left:1002.5px;top:282.0px;width:33.7px;height:34.6px;background:#e8124a;"></div>
<div class="a" style="left:1002.5px;top:282.0px;width:33.7px;height:34.6px;background:radial-gradient(circle,rgba(255,255,255,.25) .4px,transparent .7px) 0 0/2.5px 2.5px;"></div>
<div class="a" style="left:1002.5px;top:282.0px;width:33.7px;height:4.0px;background:#102636;"></div>
<div class="a" style="left:1012.6px;top:283.4px;width:13.5px;height:1.2px;background:rgba(255,255,255,.5);"></div>
<div class="a" style="left:1006.5px;top:288.9px;width:25.6px;height:17.3px;background:#fafafa;border-radius:1px"></div>
<div class="a" style="left:1014.3px;top:291.7px;width:10.1px;height:1.0px;background:#555;"></div>
<div class="a" style="left:1007.9px;top:295.1px;width:22.9px;height:3.5px;background:#e8124a;"></div>
<div class="a" style="left:1010.9px;top:302.1px;width:16.9px;height:1.5px;background:#333;"></div>
<div class="a" style="left:1008.6px;top:306.2px;width:2.7px;height:2.4px;background:#fafafa;"></div>
<div class="a" style="left:1002.5px;top:312.6px;width:33.7px;height:4.0px;background:#102636;"></div>
<div class="a" style="left:1003.5px;top:307.6px;width:6.5px;height:6.5px;background:#f2c21a;border-radius:50%"></div>
<div class="lb" style="left:1002.5px;top:319.0px">gif_in...t_vamp</div>
<div class="a" style="left:1001.5px;top:327.3px;width:35.7px;height:37.5px;background:#fff;box-shadow:0 0 2px rgba(0,0,0,.25)"></div>
<div class="a" style="left:1002.5px;top:328.3px;width:33.7px;height:35.5px;background:#e8124a;"></div>
<div class="a" style="left:1002.5px;top:328.3px;width:33.7px;height:35.5px;background:radial-gradient(circle,rgba(255,255,255,.25) .4px,transparent .7px) 0 0/2.5px 2.5px;"></div>
<div class="a" style="left:1002.5px;top:328.3px;width:33.7px;height:4.0px;background:#102636;"></div>
<div class="a" style="left:1012.6px;top:329.7px;width:13.5px;height:1.2px;background:rgba(255,255,255,.5);"></div>
<div class="a" style="left:1006.5px;top:335.4px;width:25.6px;height:17.8px;background:#fafafa;border-radius:1px"></div>
<div class="a" style="left:1014.3px;top:338.2px;width:10.1px;height:1.0px;background:#555;"></div>
<div class="a" style="left:1007.9px;top:341.8px;width:22.9px;height:3.6px;background:#e8124a;"></div>
<div class="a" style="left:1010.9px;top:348.9px;width:16.9px;height:1.5px;background:#333;"></div>
<div class="a" style="left:1008.6px;top:353.2px;width:2.7px;height:2.5px;background:#fafafa;"></div>
<div class="a" style="left:1002.5px;top:359.8px;width:33.7px;height:4.0px;background:#102636;"></div>
<div class="a" style="left:1003.5px;top:354.8px;width:6.5px;height:6.5px;background:#f2c21a;border-radius:50%"></div>
<div class="lb" style="left:1002.5px;top:365.7px">gif_in...t_rage</div>
<div class="a" style="left:1001.5px;top:374.0px;width:35.7px;height:38.0px;background:#fff;box-shadow:0 0 2px rgba(0,0,0,.25)"></div>
<div class="a" style="left:1002.5px;top:375.0px;width:33.7px;height:36.0px;background:#e8124a;"></div>
<div class="a" style="left:1002.5px;top:375.0px;width:33.7px;height:36.0px;background:radial-gradient(circle,rgba(255,255,255,.25) .4px,transparent .7px) 0 0/2.5px 2.5px;"></div>
<div class="a" style="left:1002.5px;top:375.0px;width:33.7px;height:4.0px;background:#102636;"></div>
<div class="a" style="left:1012.6px;top:376.4px;width:13.5px;height:1.2px;background:rgba(255,255,255,.5);"></div>
<div class="a" style="left:1006.5px;top:382.2px;width:25.6px;height:18.0px;background:#fafafa;border-radius:1px"></div>
<div class="a" style="left:1014.3px;top:385.1px;width:10.1px;height:1.0px;background:#555;"></div>
<div class="a" style="left:1007.9px;top:388.7px;width:22.9px;height:3.6px;background:#e8124a;"></div>
<div class="a" style="left:1010.9px;top:395.9px;width:16.9px;height:1.5px;background:#333;"></div>
<div class="a" style="left:1008.6px;top:400.2px;width:2.7px;height:2.5px;background:#fafafa;"></div>
<div class="a" style="left:1002.5px;top:407.0px;width:33.7px;height:4.0px;background:#102636;"></div>
<div class="a" style="left:1003.5px;top:402.0px;width:6.5px;height:6.5px;background:#f2c21a;border-radius:50%"></div>
<div id="phone" class="a" style="left:0;top:0;width:320px;height:563px">
 <div class="a" style="left:6px;top:530px;width:304px;height:22px;border-radius:50%;background:rgba(0,0,0,0.6);filter:blur(5px)"></div>
 <div class="a" style="left:16px;top:12px;width:285px;height:533px;border-radius:44px;background:#fff;border:2px solid #b4b4b4;box-shadow:inset 0 0 0 1px #e0e0e0"></div>
 <div class="a" style="left:107px;top:21px;width:8px;height:8px;border-radius:50%;background:#1a1a1a;border:1.5px solid #333"></div>
 <div class="a" style="left:125px;top:24px;width:67px;height:3px;background:repeating-linear-gradient(90deg,#333 0 2px,transparent 2px 3px)"></div>
 <div class="a" style="left:197px;top:21px;width:8px;height:8px;border-radius:50%;background:#1a1a1a"></div>
 <div class="a" style="left:210px;top:19px;width:10px;height:10px;border-radius:50%;background:#1a1a1a"></div>
 <div class="a" style="left:249px;top:26px;width:8px;height:8px;border-radius:50%;background:#1a1a1a"></div>
 <div class="a" style="left:124px;top:517px;width:69px;height:17px;border-radius:8px;border:1.5px solid #9a9a9a;background:#fdfdfd"></div>
 <div id="scr" class="a" style="left:25px;top:55.5px;width:270px;height:448.5px;background:#040608;overflow:hidden;clip-path:polygon(0 0,268px 0,269.5px 100%,0 100%)">
  <div class="a" style="left:0;top:0;width:268px;height:14px;background:#10293a"></div>
  <svg class="a" style="left:187.5px;top:3.5px" width="10" height="9" viewBox="0 0 10 9"><path d="M0.2 1.8 Q5 -1.4 9.8 1.8 L5 8.3Z" fill="#fff"/></svg>
  <svg class="a" style="left:205.5px;top:3.5px" width="9" height="9" viewBox="0 0 9 9"><path d="M0.3 8.6 L8.7 0.3 L8.7 8.6Z" fill="#6f7e88"/><path d="M0.3 8.6 L5 4 L5 8.6Z" fill="#fff"/></svg>
  <div class="a" style="left:224.5px;top:3px;width:6px;height:9px;border-radius:1px;background:linear-gradient(#6f7e88 0 42%,#fff 42%)"></div>
  <div class="a" style="left:237.5px;top:2px;font-size:9.6px;line-height:11px;color:#f0f0f0">12:30</div>
  <svg class="a" style="left:11px;top:25px" width="21" height="20" viewBox="0 0 21 20"><defs><pattern id="hatch" width="2.4" height="2.4" patternUnits="userSpaceOnUse" patternTransform="rotate(45)"><rect width="1.2" height="2.4" fill="#d8d8d8"/></pattern></defs><path d="M7.5 1 L10.5 5 L13.5 1" stroke="#ddd" stroke-width="1.3" fill="none"/><rect x="1" y="5.5" width="19" height="13" rx="2" fill="#1a1a1a" stroke="#ddd" stroke-width="1.4"/><rect x="3" y="7.5" width="15" height="9" fill="url(#hatch)"/></svg>
  <div class="a" style="left:37px;top:21px;font-size:4px;color:#2a2a2a;letter-spacing:1px">LVL</div>
  <div class="a" style="left:37px;top:26px;font-size:11px;font-weight:bold;color:#242424">01</div>
  <div class="a" style="left:55px;top:30px;width:40px;height:7px;background:repeating-linear-gradient(45deg,#1a1a1a 0 1px,transparent 1px 3px)"></div>
  <div class="a" style="left:0;top:53px;width:268px;text-align:center;font-size:14.5px;line-height:16px;font-weight:bold;color:#25292d;letter-spacing:0.3px">ACTIVITY</div>
  <div class="a" style="left:0;top:77px;width:268px;text-align:center;font-size:12px;line-height:14px;color:#15191c">(</div>
  <div class="a" style="left:-1px;top:26px;width:270px;text-align:center;font-size:17px;line-height:20px;font-weight:bold;color:#fff;letter-spacing:0.2px;text-shadow:1px 1px 0 #666;transform:scaleX(0.95)">#TV SHOWS</div>
  <svg class="a" style="left:240px;top:30.5px" width="11" height="11" viewBox="0 0 11 11"><path d="M0.8 0.8L10.2 10.2M10.2 0.8L0.8 10.2" stroke="#f2f2f2" stroke-width="1.3"/></svg>
  <div class="a" style="left:0;top:66px;width:270px;text-align:center;font-size:11px;line-height:13.5px;font-weight:bold;color:#f4f4f4">What will Rick do to Neegan in the<br>first episode this season?</div>
  <div class="a" style="left:10px;top:102px;width:250px;height:42px;border-radius:2px;background:#1ed868"></div>
  <div class="a" style="left:15.8px;top:117px;font-size:10px;line-height:14px;font-weight:bold;color:#fff">Capture him</div>
  <svg class="a" style="left:133.10000000000002px;top:113.3px;opacity:1" width="21.4" height="21.4" viewBox="0 0 20 20"><defs><clipPath id="c1438_1240"><circle cx="10" cy="10" r="9.6"/></clipPath></defs><g clip-path="url(#c1438_1240)"><rect width="20" height="20" fill="#6a6848"/><rect x="12" width="8" height="20" fill="#8a8a70"/><ellipse cx="9.5" cy="10" rx="4.6" ry="5.8" fill="#3a261c"/><path d="M5 7 Q9.5 2.5 14 7 Q12 5 9.5 5 Q7 5 5 7Z" fill="#1a1410"/><path d="M1 20 Q4 15 9.5 15.5 Q15 15 18 20Z" fill="#e8e8e8"/></g><circle cx="10" cy="10" r="9.4" fill="none" stroke="rgba(20,20,20,.55)" stroke-width="1"/></svg>
  <svg class="a" style="left:156.3px;top:113.3px;opacity:1" width="21.4" height="21.4" viewBox="0 0 20 20"><defs><clipPath id="c1670_1240"><circle cx="10" cy="10" r="9.6"/></clipPath></defs><g clip-path="url(#c1670_1240)"><rect width="20" height="20" fill="#c08858"/><path d="M3 20 Q2 6 6 3 Q10 0 14.5 3 Q18 7 17 20Z" fill="#4a2818"/><ellipse cx="10.5" cy="11" rx="4.6" ry="6" fill="#ecc8b0"/><path d="M6 8 Q10 3.5 15 8 L15 5.5 Q10 2 6 5.5Z" fill="#4a2818"/><path d="M6.8 10 h3 M11.5 10 h3" stroke="#444" stroke-width=".9"/><ellipse cx="10" cy="14.8" rx="1.4" ry="1.1" fill="#b0102a"/></g><circle cx="10" cy="10" r="9.4" fill="none" stroke="rgba(20,20,20,.55)" stroke-width="1"/></svg>
  <svg class="a" style="left:179.8px;top:113.3px;opacity:1" width="21.4" height="21.4" viewBox="0 0 20 20"><defs><clipPath id="c1905_1240"><circle cx="10" cy="10" r="9.6"/></clipPath></defs><g clip-path="url(#c1905_1240)"><rect width="20" height="20" fill="#7a7c78"/><rect x="13" y="8" width="7" height="8" fill="#c0a080"/><ellipse cx="10" cy="10.5" rx="4.6" ry="5.8" fill="#d8b8a0"/><path d="M4.8 8 Q6 2.5 10 3 Q15 2.5 15.5 8 Q12 5.5 10 6 Q7 5.5 4.8 8Z" fill="#a08060"/><path d="M1 20 Q4 15 10 15.8 Q16 15 19 20Z" fill="#1e1e24"/></g><circle cx="10" cy="10" r="9.4" fill="none" stroke="rgba(20,20,20,.55)" stroke-width="1"/></svg>
  <div class="a" style="left:202.3px;top:113.3px;width:21.4px;height:21.4px;border-radius:50%;background:#1f6a93;color:#e8f0f5;font-size:7px;line-height:21.4px;text-align:center">+30</div>
  <div class="a" style="left:229px;top:112px;width:24px;height:24px;border-radius:50%;background:#fff"></div>
  <svg class="a" style="left:233px;top:116px" width="16" height="16" viewBox="0 0 16 16"><path d="M3.2 8.3 L6.6 11.6 L12.8 4.8" stroke="#21c765" stroke-width="2.4" fill="none"/></svg>
  <div class="a" style="left:10px;top:147px;width:250px;height:42px;border-radius:2px;background:linear-gradient(#143246,#0b1c28);opacity:1"></div>
  <div class="a" style="left:16px;top:161.0px;font-size:10.5px;line-height:14px;color:#e6e6e6">Kill him</div>
  <svg class="a" style="left:162.7px;top:158.0px;opacity:1" width="20" height="20" viewBox="0 0 20 20"><defs><clipPath id="c1727_1680"><circle cx="10" cy="10" r="9.6"/></clipPath></defs><g clip-path="url(#c1727_1680)"><rect width="20" height="20" fill="#6a6848"/><rect x="12" width="8" height="20" fill="#8a8a70"/><ellipse cx="9.5" cy="10" rx="4.6" ry="5.8" fill="#3a261c"/><path d="M5 7 Q9.5 2.5 14 7 Q12 5 9.5 5 Q7 5 5 7Z" fill="#1a1410"/><path d="M1 20 Q4 15 9.5 15.5 Q15 15 18 20Z" fill="#e8e8e8"/></g><circle cx="10" cy="10" r="9.4" fill="none" stroke="rgba(20,20,20,.55)" stroke-width="1"/></svg>
  <svg class="a" style="left:185.3px;top:158.0px;opacity:1" width="20" height="20" viewBox="0 0 20 20"><defs><clipPath id="c1953_1680"><circle cx="10" cy="10" r="9.6"/></clipPath></defs><g clip-path="url(#c1953_1680)"><rect width="20" height="20" fill="#c08858"/><path d="M3 20 Q2 6 6 3 Q10 0 14.5 3 Q18 7 17 20Z" fill="#4a2818"/><ellipse cx="10.5" cy="11" rx="4.6" ry="6" fill="#ecc8b0"/><path d="M6 8 Q10 3.5 15 8 L15 5.5 Q10 2 6 5.5Z" fill="#4a2818"/><path d="M6.8 10 h3 M11.5 10 h3" stroke="#444" stroke-width=".9"/><ellipse cx="10" cy="14.8" rx="1.4" ry="1.1" fill="#b0102a"/></g><circle cx="10" cy="10" r="9.4" fill="none" stroke="rgba(20,20,20,.55)" stroke-width="1"/></svg>
  <svg class="a" style="left:208.8px;top:158.0px;opacity:1" width="20" height="20" viewBox="0 0 20 20"><defs><clipPath id="c2188_1680"><circle cx="10" cy="10" r="9.6"/></clipPath></defs><g clip-path="url(#c2188_1680)"><rect width="20" height="20" fill="#7a7c78"/><rect x="13" y="8" width="7" height="8" fill="#c0a080"/><ellipse cx="10" cy="10.5" rx="4.6" ry="5.8" fill="#d8b8a0"/><path d="M4.8 8 Q6 2.5 10 3 Q15 2.5 15.5 8 Q12 5.5 10 6 Q7 5.5 4.8 8Z" fill="#a08060"/><path d="M1 20 Q4 15 10 15.8 Q16 15 19 20Z" fill="#1e1e24"/></g><circle cx="10" cy="10" r="9.4" fill="none" stroke="rgba(20,20,20,.55)" stroke-width="1"/></svg>
  <div class="a" style="left:232px;top:158.0px;width:20px;height:20px;border-radius:50%;background:#1c557a;color:#c6d6e0;font-size:7px;line-height:20px;text-align:center;opacity:0.95">+10</div>
  <div class="a" style="left:10px;top:192px;width:250px;height:41px;border-radius:2px;background:linear-gradient(#143246,#0b1c28);opacity:1"></div>
  <div class="a" style="left:16px;top:200.5px;font-size:10.5px;line-height:11.5px;color:#b4b8bc">Make a deal with him<br>after beating him up</div>
  <svg class="a" style="left:162.7px;top:202.5px;opacity:1" width="20" height="20" viewBox="0 0 20 20"><defs><clipPath id="c1727_2125"><circle cx="10" cy="10" r="9.6"/></clipPath></defs><g clip-path="url(#c1727_2125)"><rect width="20" height="20" fill="#6a6848"/><rect x="12" width="8" height="20" fill="#8a8a70"/><ellipse cx="9.5" cy="10" rx="4.6" ry="5.8" fill="#3a261c"/><path d="M5 7 Q9.5 2.5 14 7 Q12 5 9.5 5 Q7 5 5 7Z" fill="#1a1410"/><path d="M1 20 Q4 15 9.5 15.5 Q15 15 18 20Z" fill="#e8e8e8"/></g><circle cx="10" cy="10" r="9.4" fill="none" stroke="rgba(20,20,20,.55)" stroke-width="1"/></svg>
  <svg class="a" style="left:185.3px;top:202.5px;opacity:1" width="20" height="20" viewBox="0 0 20 20"><defs><clipPath id="c1953_2125"><circle cx="10" cy="10" r="9.6"/></clipPath></defs><g clip-path="url(#c1953_2125)"><rect width="20" height="20" fill="#c08858"/><path d="M3 20 Q2 6 6 3 Q10 0 14.5 3 Q18 7 17 20Z" fill="#4a2818"/><ellipse cx="10.5" cy="11" rx="4.6" ry="6" fill="#ecc8b0"/><path d="M6 8 Q10 3.5 15 8 L15 5.5 Q10 2 6 5.5Z" fill="#4a2818"/><path d="M6.8 10 h3 M11.5 10 h3" stroke="#444" stroke-width=".9"/><ellipse cx="10" cy="14.8" rx="1.4" ry="1.1" fill="#b0102a"/></g><circle cx="10" cy="10" r="9.4" fill="none" stroke="rgba(20,20,20,.55)" stroke-width="1"/></svg>
  <svg class="a" style="left:208.8px;top:202.5px;opacity:1" width="20" height="20" viewBox="0 0 20 20"><defs><clipPath id="c2188_2125"><circle cx="10" cy="10" r="9.6"/></clipPath></defs><g clip-path="url(#c2188_2125)"><rect width="20" height="20" fill="#7a7c78"/><rect x="13" y="8" width="7" height="8" fill="#c0a080"/><ellipse cx="10" cy="10.5" rx="4.6" ry="5.8" fill="#d8b8a0"/><path d="M4.8 8 Q6 2.5 10 3 Q15 2.5 15.5 8 Q12 5.5 10 6 Q7 5.5 4.8 8Z" fill="#a08060"/><path d="M1 20 Q4 15 10 15.8 Q16 15 19 20Z" fill="#1e1e24"/></g><circle cx="10" cy="10" r="9.4" fill="none" stroke="rgba(20,20,20,.55)" stroke-width="1"/></svg>
  <div class="a" style="left:232px;top:202.5px;width:20px;height:20px;border-radius:50%;background:#1c557a;color:#c6d6e0;font-size:7px;line-height:20px;text-align:center;opacity:0.8">+10</div>
  <div class="a" style="left:10px;top:236.6px;width:250px;height:41.2px;border-radius:2px;background:linear-gradient(#143246,#0b1c28);opacity:0.38"></div>
  <div class="a" style="left:16px;top:250.2px;font-size:10.5px;line-height:14px;color:#3e444a">Zombify him</div>
  <svg class="a" style="left:207.4px;top:247.2px;opacity:0.35" width="20" height="20" viewBox="0 0 20 20"><defs><clipPath id="c2174_2572"><circle cx="10" cy="10" r="9.6"/></clipPath></defs><g clip-path="url(#c2174_2572)"><rect width="20" height="20" fill="#c08858"/><path d="M3 20 Q2 6 6 3 Q10 0 14.5 3 Q18 7 17 20Z" fill="#4a2818"/><ellipse cx="10.5" cy="11" rx="4.6" ry="6" fill="#ecc8b0"/><path d="M6 8 Q10 3.5 15 8 L15 5.5 Q10 2 6 5.5Z" fill="#4a2818"/><path d="M6.8 10 h3 M11.5 10 h3" stroke="#444" stroke-width=".9"/><ellipse cx="10" cy="14.8" rx="1.4" ry="1.1" fill="#b0102a"/></g><circle cx="10" cy="10" r="9.4" fill="none" stroke="rgba(20,20,20,.55)" stroke-width="1"/></svg>
  <svg class="a" style="left:231.4px;top:247.2px;opacity:0.35" width="20" height="20" viewBox="0 0 20 20"><defs><clipPath id="c2414_2572"><circle cx="10" cy="10" r="9.6"/></clipPath></defs><g clip-path="url(#c2414_2572)"><rect width="20" height="20" fill="#7a7c78"/><rect x="13" y="8" width="7" height="8" fill="#c0a080"/><ellipse cx="10" cy="10.5" rx="4.6" ry="5.8" fill="#d8b8a0"/><path d="M4.8 8 Q6 2.5 10 3 Q15 2.5 15.5 8 Q12 5.5 10 6 Q7 5.5 4.8 8Z" fill="#a08060"/><path d="M1 20 Q4 15 10 15.8 Q16 15 19 20Z" fill="#1e1e24"/></g><circle cx="10" cy="10" r="9.4" fill="none" stroke="rgba(20,20,20,.55)" stroke-width="1"/></svg>
  <div class="a" style="left:10px;top:282px;width:250px;height:40px;border-radius:2px;background:linear-gradient(#143246,#0b1c28);opacity:0.38"></div>
  <div class="a" style="left:16px;top:295.0px;font-size:10.5px;line-height:14px;color:#30363c">Nothing</div>
  <div class="a" style="left:70px;top:367px;width:128px;height:14px;border-radius:3px;background:#0b1116;border-bottom:1px solid #123040"></div>
  <div class="a" style="left:2px;top:366px;font-size:9px;line-height:10px;color:#0d1114;white-space:nowrap">Who do you think</div>
  <div class="a" style="left:200px;top:366px;font-size:9px;line-height:10px;color:#0d1114;white-space:nowrap">on Thursday</div>
  <div class="a" style="left:35px;top:427px;width:28px;height:17px;border:1.5px solid #0c1013;border-radius:2px"></div>
  <div class="a" style="left:123px;top:426px;width:25px;height:20px;border:1.5px solid #0c1013;border-radius:2px"></div>
  <div class="a" style="left:0;top:336px;width:270px;text-align:center;font-size:17.5px;line-height:20px;font-weight:bold;color:#393939;letter-spacing:1px">55 PTS SCORED!</div>
  <div class="a" style="left:0;top:369px;width:270px;text-align:center;font-size:9px;line-height:10px;color:#4e5458">How does it feel to win!?</div>
  <div class="a" style="left:42px;top:377px;font-size:10px;line-height:10px;color:#1c2226">Your call?</div>
  <div class="a" style="left:-7px;top:309px;width:270px;text-align:center;font-size:19.5px;line-height:22px;color:#fff;letter-spacing:0.7px">Tell a friend you won</div>
  <svg class="a" style="left:122px;top:333px" width="24" height="44" viewBox="0 0 24 44"><path d="M12.5 1 L12 41 M3 30 L12 42 L21 29" stroke="#fff" stroke-width="2" fill="none" stroke-linecap="round"/></svg>
  <div class="a" style="left:28.4px;top:380px;width:213px;height:44px;border-radius:5px;background:rgba(22,34,44,.55)"></div>
  <svg class="a" style="left:32.4px;top:387px" width="36" height="36" viewBox="-18 -18 36 36"><circle r="17.6" fill="#f3c31b" stroke="#d9a400" stroke-width=".8"/><path d="M-11 -6 Q-8 -10 -4 -8 M4 -8 Q8 -10 11 -6" stroke="#1a1a1a" stroke-width="1.4" fill="none"/><path d="M-10 -4 L-5 -6 M10 -4 L5 -6" stroke="#1a1a1a" stroke-width="1" fill="none"/><path d="M-15 -1 Q0 5 15 -1 Q12 14 0 14 Q-12 14 -15 -1Z" fill="#fbf3d0" stroke="#1a1a1a" stroke-width="1.4"/><path d="M-13 4 Q0 8 13 4 M-8 2 L-7 13 M-3 3 L-3 14 M2 3 L2 14 M7 2 L7 13" stroke="#1a1a1a" stroke-width=".8" fill="none"/></svg>
  <svg class="a" style="left:74.7px;top:387px" width="36" height="36" viewBox="-18 -18 36 36"><circle r="17.6" fill="#f3c31b" stroke="#d9a400" stroke-width=".8"/><text x="-6" y="-0.5" font-size="13" font-weight="bold" fill="#1a1a1a" text-anchor="middle" font-family="Liberation Sans">$</text><text x="7" y="-2" font-size="13" font-weight="bold" fill="#1a1a1a" text-anchor="middle" font-family="Liberation Sans">$</text><path d="M-13 3 Q0 9 13 3 Q10 13 0 13 Q-10 13 -13 3Z" fill="#fbf3d0" stroke="#1a1a1a" stroke-width="1.2"/><path d="M-10 6.5 Q0 9.5 10 6.5 M-5 5 L-5 12 M0 6 L0 13 M5 5 L5 12" stroke="#1a1a1a" stroke-width=".7" fill="none"/></svg>
  <svg class="a" style="left:117px;top:387px" width="36" height="36" viewBox="-18 -18 36 36"><circle r="17.6" fill="#f3c31b" stroke="#d9a400" stroke-width=".8"/><path d="M-16 -6 Q0 -9 16 -6 L15 -4 Q14 2 6 2 Q2 2 1 -3 L-1 -3 Q-3 3 -9 2 Q-15 1 -15 -4Z" fill="#111"/><path d="M3 1 Q7 5 4 7" stroke="#1a1a1a" stroke-width="1" fill="none"/><path d="M-7 11 Q3 7 12 11" stroke="#1a1a1a" stroke-width="1.3" fill="none"/></svg>
  <svg class="a" style="left:159px;top:387px" width="36" height="36" viewBox="-18 -18 36 36"><circle r="17.6" fill="#f3c31b" stroke="#d9a400" stroke-width=".8"/><path d="M-11 -4 Q-8 -2 -5 -5 M4 -8 L10 -7" stroke="#1a1a1a" stroke-width="1.3" fill="none"/><path d="M-9 2 Q-5 -1 0 2 Q5 -1 9 2" stroke="#1a1a1a" stroke-width="1.2" fill="none"/><path d="M-5 3 Q-7 13 1 13 Q8 13 6 3" fill="#f3c31b" stroke="#1a1a1a" stroke-width="1.3"/><path d="M0.5 5 L0.5 10" stroke="#1a1a1a" stroke-width=".9"/><path d="M8 4 Q11 7 8 10" stroke="#1a1a1a" stroke-width="1" fill="none"/></svg>
  <svg class="a" style="left:200.7px;top:387px" width="36" height="36" viewBox="-18 -18 36 36"><circle r="17.6" fill="#1ec46b"/><path d="M-9 -8 H9 Q10 -8 10 -7 V5 Q10 6 9 6 H-4 L-8 10 V6 H-9 Q-10 6 -10 5 V-7 Q-10 -8 -9 -8Z" fill="#fff"/></svg>
 </div>
</div>
</body></html>
